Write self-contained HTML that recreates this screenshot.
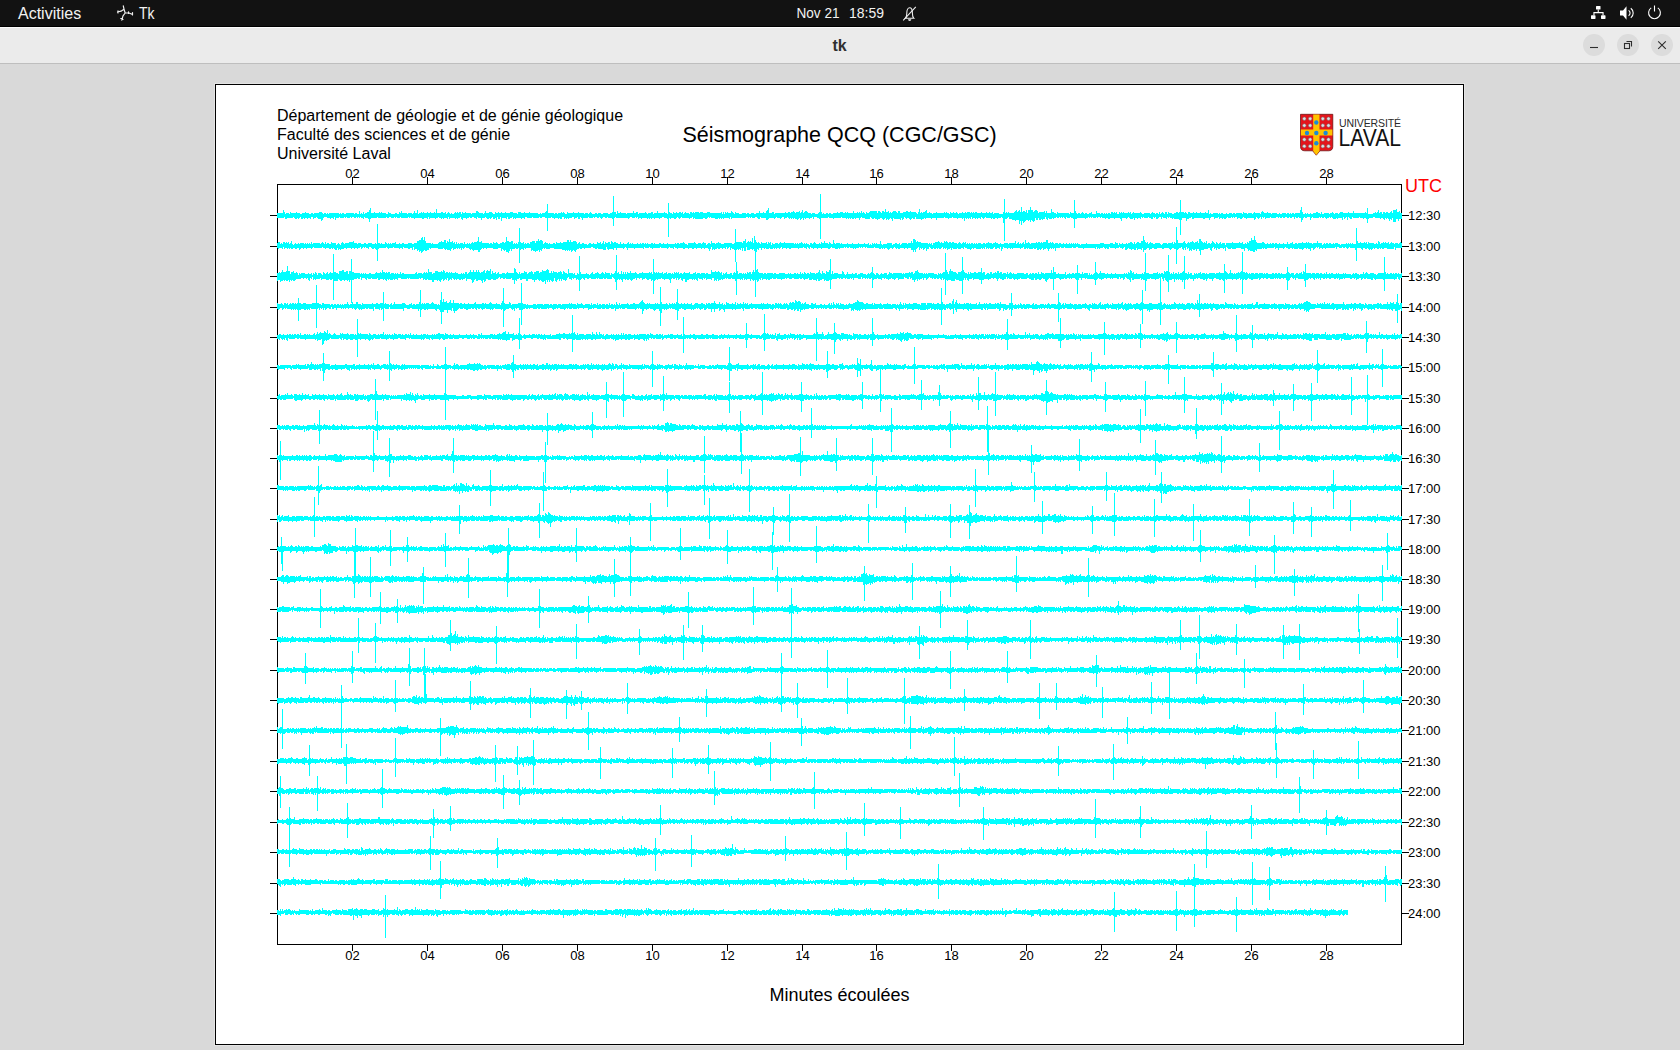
<!DOCTYPE html>
<html><head><meta charset="utf-8">
<style>
*{margin:0;padding:0;box-sizing:border-box}
html,body{width:1680px;height:1050px;overflow:hidden;background:#d9d9d9;font-family:"Liberation Sans",sans-serif}
.abs{position:absolute}
#topbar{left:0;top:0;width:1680px;height:27px;background:#121212;border-bottom:1px solid #000}
#titlebar{left:0;top:27px;width:1680px;height:37px;background:#ebebeb;border-top:1px solid #fcfcfc;border-bottom:1px solid #bebebe}
.btn{width:22px;height:22px;border-radius:50%;background:#dcdcdc}
#canvas{left:214px;top:83px;width:1251px;height:963px;border:1px solid #e4e4e4}
#canvas .in{position:absolute;left:0;top:0;width:1249px;height:961px;border:1px solid #000;background:#fff}
</style></head><body>
<div id="topbar" class="abs"></div>
<div id="titlebar" class="abs"></div>
<div class="abs btn" style="left:1583px;top:34px"></div>
<div class="abs btn" style="left:1617px;top:34px"></div>
<div class="abs btn" style="left:1651px;top:34px"></div>
<div id="canvas" class="abs"><div class="in"></div></div>
<svg class="abs" style="left:0;top:0" width="1680" height="1050" viewBox="0 0 1680 1050">
<g font-family="Liberation Sans" fill="#f2f2f2">
<text x="18" y="19" font-size="16">Activities</text>
<text x="139" y="19" font-size="16.5" textLength="15.5" lengthAdjust="spacingAndGlyphs">Tk</text>
<text x="796.5" y="18" font-size="14.5" textLength="43" lengthAdjust="spacingAndGlyphs">Nov 21</text>
<text x="849" y="18" font-size="14.5" textLength="35" lengthAdjust="spacingAndGlyphs">18:59</text>
</g>
<g stroke="#f0f0f0" stroke-width="1.2" fill="none" stroke-linecap="round" stroke-linejoin="round">
<path d="M123.3 5.8L124 9.2L121 11.2L117.5 12M118 10.8L118 13M124 9.2L125.2 13L123 15.8L121.8 20.2M120.8 18.5L123 19.5M125.2 13L128.5 12.8L132.5 14.5M132.5 12.5V15M128.5 11.8V13.5"/>
</g>
<g stroke="#eeeeee" stroke-width="1.1" fill="none">
<path d="M905.3 18.3C906.5 17.2 906.8 15.6 906.8 13.2C906.8 10 908 7.8 909.6 7.8C911.2 7.8 912.4 10 912.4 13.2C912.4 15.6 912.7 17.2 913.9 18.3Z"/>
<path d="M903.2 20.4L915.8 6.8"/>
</g>
<path d="M908 19.3h3.3a1.65 1.65 0 0 1 -3.3 0z" fill="#eee"/>
<g fill="#fff">
<rect x="1596" y="6" width="4.5" height="3.6" rx="0.6"/>
<rect x="1591" y="15.3" width="4.5" height="3.6" rx="0.6"/>
<rect x="1601" y="15.3" width="4.5" height="3.6" rx="0.6"/>
<path d="M1597.7 9.5h1.1v2.6h4.8v3.2h-1.1v-2.1h-8v2.1h-1.1v-3.2h4.3z"/>
<path d="M1620 10.5h3l3.5-4.2v13.4l-3.5-4.2h-3z"/>
</g>
<g stroke="#fff" stroke-width="1.1" fill="none">
<path d="M1628.6 10.4a3.2 3.2 0 0 1 0 5.4M1630.8 8.3a6 6 0 0 1 0 9.6"/>
<path d="M1651.2 7.9a5.9 5.9 0 1 0 6.6 0M1654.5 5.6v6"/>
</g>
<text x="839.5" y="51" font-family="Liberation Sans" font-size="16" font-weight="bold" fill="#303030" text-anchor="middle">tk</text>
<g stroke="#2e2e2e" stroke-width="1.1" fill="none">
<path d="M1590 47.5H1598"/>
<rect x="1624.5" y="43.5" width="5" height="5"/>
<path d="M1626.5 41.5H1631.5V46.5"/>
<path d="M1658.2 41.3L1665.8 48.9M1665.8 41.3L1658.2 48.9"/>
</g>

<g>
<path d="M1300.5 114.3H1332.8V146.5Q1332.8 150.8 1328.5 150.8H1320L1316.3 155.2L1312.6 150.8H1304.8Q1300.5 150.8 1300.5 146.5Z" fill="#e4141b" stroke="#5c0b0b" stroke-width="0.7"/>
<path d="M1313.2 114.6H1319.5V151L1316.3 155L1313.2 151Z M1300.9 129.4H1332.4V135.6H1300.9Z" fill="#ffc400"/>
<g fill="#1c8ad6">
<circle cx="1316.3" cy="122.5" r="2.2"/><circle cx="1307" cy="133" r="2.2"/><circle cx="1316.3" cy="133" r="2.2"/><circle cx="1325.6" cy="133" r="2.2"/><circle cx="1316.3" cy="143.3" r="2.2"/>
</g>
<g fill="#dde1e4" stroke="#7a6a6a" stroke-width="0.55">
<circle cx="1304.3" cy="118.7" r="1.75"/><circle cx="1310.2" cy="118.7" r="1.75"/><circle cx="1304.3" cy="125.5" r="1.75"/><circle cx="1310.2" cy="125.5" r="1.75"/>
<circle cx="1322.8" cy="118.7" r="1.75"/><circle cx="1328.5" cy="118.7" r="1.75"/><circle cx="1322.8" cy="125.5" r="1.75"/><circle cx="1328.5" cy="125.5" r="1.75"/>
<circle cx="1304.3" cy="139.5" r="1.75"/><circle cx="1310.2" cy="139.5" r="1.75"/><circle cx="1304.3" cy="146.2" r="1.75"/><circle cx="1310.2" cy="146.2" r="1.75"/>
<circle cx="1322.8" cy="139.5" r="1.75"/><circle cx="1328.5" cy="139.5" r="1.75"/><circle cx="1322.8" cy="146.2" r="1.75"/><circle cx="1328.5" cy="146.2" r="1.75"/>
</g>
<text x="1339" y="126.8" font-family="Liberation Sans" font-size="10.5" fill="#2a2a2a" textLength="62" lengthAdjust="spacing">UNIVERSITÉ</text>
<text x="1338.5" y="146" font-family="Liberation Sans" font-size="23.7" fill="#111" textLength="62.5" lengthAdjust="spacingAndGlyphs">LAVAL</text>
</g>

<g fill="none" stroke="#000" stroke-width="1" shape-rendering="crispEdges">
<path d="M277.5 184.5H1401.5V944.5H277.5Z"/>
<path d="M352.5 177V184M352.5 945V951M427.5 177V184M427.5 945V951M502.5 177V184M502.5 945V951M577.5 177V184M577.5 945V951M652.5 177V184M652.5 945V951M727.5 177V184M727.5 945V951M802.5 177V184M802.5 945V951M876.5 177V184M876.5 945V951M951.5 177V184M951.5 945V951M1026.5 177V184M1026.5 945V951M1101.5 177V184M1101.5 945V951M1176.5 177V184M1176.5 945V951M1251.5 177V184M1251.5 945V951M1326.5 177V184M1326.5 945V951M270 215.5H277M1402 215.5H1409M270 246.5H277M1402 246.5H1409M270 276.5H277M1402 276.5H1409M270 307.5H277M1402 307.5H1409M270 337.5H277M1402 337.5H1409M270 367.5H277M1402 367.5H1409M270 398.5H277M1402 398.5H1409M270 428.5H277M1402 428.5H1409M270 458.5H277M1402 458.5H1409M270 488.5H277M1402 488.5H1409M270 519.5H277M1402 519.5H1409M270 549.5H277M1402 549.5H1409M270 579.5H277M1402 579.5H1409M270 609.5H277M1402 609.5H1409M270 639.5H277M1402 639.5H1409M270 670.5H277M1402 670.5H1409M270 700.5H277M1402 700.5H1409M270 730.5H277M1402 730.5H1409M270 761.5H277M1402 761.5H1409M270 791.5H277M1402 791.5H1409M270 822.5H277M1402 822.5H1409M270 852.5H277M1402 852.5H1409M270 883.5H277M1402 883.5H1409M270 913.5H277M1402 913.5H1409"/>
</g>
<g font-family="Liberation Sans" font-size="13" fill="#000" text-anchor="middle">
<text x="352.5" y="178">02</text><text x="352.5" y="960">02</text>
<text x="427.5" y="178">04</text><text x="427.5" y="960">04</text>
<text x="502.5" y="178">06</text><text x="502.5" y="960">06</text>
<text x="577.5" y="178">08</text><text x="577.5" y="960">08</text>
<text x="652.5" y="178">10</text><text x="652.5" y="960">10</text>
<text x="727.5" y="178">12</text><text x="727.5" y="960">12</text>
<text x="802.5" y="178">14</text><text x="802.5" y="960">14</text>
<text x="876.5" y="178">16</text><text x="876.5" y="960">16</text>
<text x="951.5" y="178">18</text><text x="951.5" y="960">18</text>
<text x="1026.5" y="178">20</text><text x="1026.5" y="960">20</text>
<text x="1101.5" y="178">22</text><text x="1101.5" y="960">22</text>
<text x="1176.5" y="178">24</text><text x="1176.5" y="960">24</text>
<text x="1251.5" y="178">26</text><text x="1251.5" y="960">26</text>
<text x="1326.5" y="178">28</text><text x="1326.5" y="960">28</text>
</g>
<g font-family="Liberation Sans" font-size="13" fill="#000">
<text x="1408" y="220">12:30</text>
<text x="1408" y="251">13:00</text>
<text x="1408" y="281">13:30</text>
<text x="1408" y="312">14:00</text>
<text x="1408" y="342">14:30</text>
<text x="1408" y="372">15:00</text>
<text x="1408" y="403">15:30</text>
<text x="1408" y="433">16:00</text>
<text x="1408" y="463">16:30</text>
<text x="1408" y="493">17:00</text>
<text x="1408" y="524">17:30</text>
<text x="1408" y="554">18:00</text>
<text x="1408" y="584">18:30</text>
<text x="1408" y="614">19:00</text>
<text x="1408" y="644">19:30</text>
<text x="1408" y="675">20:00</text>
<text x="1408" y="705">20:30</text>
<text x="1408" y="735">21:00</text>
<text x="1408" y="766">21:30</text>
<text x="1408" y="796">22:00</text>
<text x="1408" y="827">22:30</text>
<text x="1408" y="857">23:00</text>
<text x="1408" y="888">23:30</text>
<text x="1408" y="918">24:00</text>
</g>
<text x="1405" y="192" font-family="Liberation Sans" font-size="18" fill="#f00">UTC</text>
<g font-family="Liberation Sans" font-size="16" fill="#000">
<text x="277" y="121">Département de géologie et de génie géologique</text>
<text x="277" y="140">Faculté des sciences et de génie</text>
<text x="277" y="159">Université Laval</text>
</g>
<text x="839.5" y="142" font-family="Liberation Sans" font-size="21.5" fill="#000" text-anchor="middle">Séismographe QCQ (CGC/GSC)</text>
<text x="839.5" y="1001" font-family="Liberation Sans" font-size="18" fill="#000" text-anchor="middle">Minutes écoulées</text>
<g fill="#00ffff" shape-rendering="crispEdges"><path d="M277 213h6v-3h1v2h1v2h1v-1h3v1h1v-2h1v1h5v-1h1v1h3v1h2v-1h3v-1h1v1h3v1h2v-1h2v1h1v-1h5v-1h3v1h1v1h1v-1h2v1h1v-1h1v1h1v-1h10v1h1v-1h1v1h1v-1h2v1h2v-1h8v1h1v-1h2v1h2v-3h1v3h1v-1h1v1h1v-2h1v2h1v-1h2v-1h2v1h1v-5h1v5h3v-1h1v1h4v-1h1v1h1v-1h1v1h4v1h2v-2h1v1h2v1h4v-1h2v1h2v-2h1v1h1v-2h1v2h5v1h1v-1h4v1h1v-1h1v-2h1v2h2v-3h1v4h1v-1h2v-1h1v1h1v-1h1v1h3v-1h1v1h2v-1h1v1h3v-1h1v1h1v-4h1v4h4v-1h2v1h2v-1h1v2h1v-1h1v-1h1v1h1v1h1v-1h1v1h2v-1h1v-1h1v1h1v-1h1v1h1v-1h2v2h1v-2h1v1h2v-1h1v1h5v1h1v-1h4v-2h2v1h1v1h4v1h1v-1h1v-2h1v2h3v-1h3v1h1v1h2v-2h1v1h2v-1h1v1h2v-1h1v1h3v-1h1v1h4v-1h3v1h4v1h1v-2h3v1h3v-1h1v1h4v-1h1v1h8v1h2v-1h1v1h1v-1h3v-1h1v-1h1v1h1v1h6v1h1v-1h2v1h1v-1h3v-1h1v1h1v-1h1v1h1v1h2v-2h1v1h5v-1h1v1h4v-1h1v1h5v1h1v-1h3v1h1v-1h1v-1h1v1h1v1h3v-1h2v1h1v-1h3v1h2v-1h5v1h2v-1h2v-1h4v2h1v-3h1v2h2v-1h1v1h5v1h1v-1h6v-2h1v2h2v-1h2v2h1v-1h6v-1h1v1h1v1h1v-1h3v-1h2v2h1v-1h3v-2h1v2h6v-1h1v1h2v1h1v-3h1v1h1v1h2v1h1v-2h1v1h2v-1h1v1h2v-1h2v1h1v-1h1v2h1v-1h1v-1h1v1h3v1h1v-2h2v1h1v-1h1v1h1v-1h4v1h1v-1h3v1h4v-1h3v1h11v-1h1v2h1v-2h1v2h1v-2h1v1h1v-1h1v1h3v-2h1v1h1v1h1v1h1v-2h1v1h3v1h3v-1h4v1h1v-1h2v1h2v-1h3v1h2v-1h3v-2h1v2h3v-1h1v1h2v-2h1v1h1v-4h1v5h3v-1h2v2h1v-1h10v-1h1v1h2v-1h2v1h1v-1h2v-1h1v1h1v1h1v-1h3v-1h1v2h1v-1h1v-2h1v3h1v-1h1v-1h2v1h1v1h3v1h1v-1h3v1h3v-1h1v-1h3v2h1v-1h1v1h2v-1h2v1h1v-1h2v1h2v-1h4v-1h1v1h2v-1h3v1h2v-1h1v1h1v-1h1v1h5v-2h1v2h3v-1h1v1h1v-1h1v1h1v-2h1v2h1v-1h1v1h1v1h1v-2h1v1h2v-1h1v-1h7v2h1v-2h2v1h1v1h1v-2h2v1h1v-3h1v3h2v-1h1v2h1v-1h1v1h1v-1h1v-1h3v1h1v1h1v-2h2v2h3v-1h3v-1h2v1h2v-1h1v1h5v1h1v1h1v-2h1v-3h1v4h1v-1h1v1h1v-1h2v-1h1v-1h1v3h2v-1h1v1h2v1h1v-1h3v-1h1v1h7v-1h1v1h1v-1h1v1h2v1h1v-2h1v1h2v-1h1v1h2v-1h1v1h1v1h1v-1h3v-1h1v1h2v-1h1v1h1v-1h3v1h1v-1h1v1h1v-1h1v1h1v-1h2v1h4v-1h1v1h4v-1h1v1h2v-1h1v1h2v-1h1v2h1v-1h5v1h4v-2h1v-1h1v2h1v-1h1v1h1v-1h1v1h5v-1h1v-1h1v-1h1v2h1v-1h1v-1h1v2h1v-2h1v2h1v-1h2v1h1v-2h1v3h1v-3h2v-3h1v3h2v2h1v-1h1v-1h2v1h1v2h1v-1h5v-1h1v2h1v-2h1v2h4v-4h1v3h2v1h2v1h1v-2h1v1h11v1h1v-2h1v1h4v-2h1v2h1v1h1v-1h2v1h1v-1h1v-1h1v1h1v1h1v-1h2v1h2v-1h2v-1h1v2h4v-3h1v2h3v1h1v-1h2v1h1v-1h1v1h1v-1h1v1h1v-1h2v1h1v-2h2v1h1v-1h1v1h1v-1h1v2h2v-2h1v1h1v-1h1v1h1v-1h1v1h4v-1h1v1h1v-1h1v2h1v-1h1v-1h1v1h6v-1h1v1h1v1h2v-1h6v1h1v-1h1v-1h1v1h2v1h1v-1h2v1h1v-2h1v2h1v-1h1v-1h1v1h1v1h1v-2h2v2h1v-2h1v1h3v1h2v-1h2v-1h2v1h1v-1h5v1h1v-1h1v1h1v1h1v-2h2v1h3v-1h1v1h2v-1h1v1h3v-1h1v1h4v-1h1v1h2v-3h1v4h1v-1h1v1h2v-1h5v1h1v-1h1v1h1v-1h2v1h3v-1h1v1h2v-1h3v1h1v-1h2v1h1v-1h6v1h1v-2h1v1h3v1h1v-1h4v1h1v-1h1v-1h1v1h5v1h1v-2h1v-1h1v1h1v1h3v-1h1v1h3v1h1v-1h5v1h2v-1h1v1h2v-1h4v1h1v-1h2v1h1v-1h1v1h1v-1h2v1h1v-1h5v-3h1v3h1v-1h1v2h2v-1h1v1h1v-1h1v1h2v-1h1v1h2v-1h3v-1h2v1h2v1h1v-2h1v2h2v-1h5v1h1v-1h2v-1h1v1h1v1h1v-1h3v1h1v-1h1v-1h3v1h5v-1h1v1h4v-2h1v2h11v-1h1v1h2v1h5v-1h2v-1h1v1h1v-1h1v-2h1v3h1v-1h2v2h1v-2h2v1h1v-1h2v1h2v-1h1v-1h1v2h1v-3h3v-1h1v3h2v-1h1v2h2v6h-3v2h-1v-2h-2v3h-3v-4h-1v2h-1v-1h-1v2h-1v-2h-1v-1h-1v1h-1v-1h-1v2h-1v-1h-1v-1h-2v1h-1v-1h-5v-1h-2v1h-4v1h-1v-1h-1v1h-1v-1h-2v1h-1v-1h-3v-1h-1v1h-6v-1h-1v2h-2v-1h-1v-1h-1v3h-1v-3h-1v1h-1v1h-1v-2h-1v3h-1v-2h-4v1h-1v-1h-1v1h-3v-1h-1v-1h-1v1h-1v-1h-1v1h-2v1h-1v-1h-1v-1h-1v1h-2v-1h-1v1h-1v-1h-1v1h-6v-1h-1v1h-1v2h-1v-3h-3v1h-2v-1h-1v1h-1v2h-1v-1h-1v-1h-2v-1h-1v1h-2v-1h-1v2h-1v-2h-2v1h-2v-1h-1v1h-2v-1h-2v1h-2v-1h-1v1h-2v-1h-1v1h-1v-1h-2v1h-5v-1h-1v1h-4v1h-1v-2h-1v1h-1v-1h-1v2h-1v-2h-1v1h-1v1h-1v-1h-1v-1h-1v2h-1v1h-1v-2h-7v1h-1v-1h-2v-1h-1v1h-1v1h-2v-1h-2v1h-1v-2h-2v1h-1v-1h-1v1h-1v-1h-1v1h-3v-1h-1v1h-1v1h-2v-1h-1v1h-1v-1h-2v1h-1v-2h-1v1h-3v1h-1v-2h-3v1h-1v2h-1v-2h-4v1h-2v-1h-9v1h-2v-2h-1v1h-2v1h-2v2h-1v-3h-4v2h-1v-2h-1v2h-1v-1h-5v-1h-1v1h-1v-1h-2v-1h-1v1h-1v-1h-1v2h-1v-1h-3v-1h-1v2h-1v-2h-2v1h-1v1h-2v-2h-1v1h-1v-1h-1v2h-2v-1h-2v-1h-1v1h-4v-1h-1v1h-1v-1h-1v2h-1v-1h-2v1h-1v-1h-2v2h-1v-2h-1v1h-3v-1h-1v-1h-1v1h-1v1h-1v-1h-4v3h-1v-2h-1v-1h-5v1h-1v-1h-4v1h-2v-1h-2v1h-1v-1h-3v-1h-1v1h-1v-1h-2v1h-1v-1h-1v1h-3v-1h-1v1h-1v-1h-1v1h-1v-1h-1v1h-2v1h-1v-1h-8v1h-4v-1h-2v-1h-1v1h-3v-1h-1v2h-1v-1h-1v-1h-1v1h-1v-1h-1v1h-1v-1h-1v1h-2v-1h-1v1h-2v1h-1v-1h-1v1h-3v-1h-1v2h-1v-1h-1v-2h-1v2h-2v1h-1v-1h-1v1h-2v-2h-1v2h-2v-2h-1v3h-1v1h-1v-1h-1v-1h-1v2h-1v-2h-1v1h-1v-1h-2v1h-1v1h-1v1h-1v-2h-1v-1h-1v1h-1v3h-1v-4h-3v1h-1v-1h-3v-1h-3v-2h-1v1h-1v1h-3v4h-1v-5h-1v-1h-1v1h-3v1h-1v-1h-2v1h-2v-1h-1v1h-1v-1h-5v-1h-1v1h-1v1h-1v-1h-1v-1h-1v2h-1v-1h-2v1h-1v-1h-1v1h-1v-1h-2v1h-1v-2h-1v2h-1v-1h-1v1h-1v-1h-1v1h-1v-1h-1v3h-1v-3h-1v1h-1v-1h-4v1h-1v-1h-4v-1h-1v1h-3v1h-1v-1h-3v-1h-1v1h-7v2h-1v-2h-4v1h-1v-1h-5v1h-1v-1h-1v1h-2v1h-1v-1h-5v-2h-1v2h-2v-1h-1v1h-1v1h-1v-1h-1v-1h-2v1h-1v-1h-1v-1h-1v2h-1v1h-1v-2h-1v2h-1v-1h-6v-1h-1v3h-1v-2h-1v-1h-1v1h-1v1h-1v-1h-1v1h-1v-2h-1v1h-1v1h-1v-1h-1v-1h-2v1h-2v1h-1v-1h-2v-1h-1v1h-2v-1h-1v-1h-1v2h-5v-1h-3v-1h-1v1h-1v2h-1v-2h-3v1h-1v-1h-1v1h-2v-1h-1v1h-1v-1h-1v1h-1v-1h-1v1h-1v-1h-4v-1h-1v1h-7v1h-1v-1h-4v-1h-1v1h-7v1h-2v-1h-2v-1h-3v2h-1v-2h-1v1h-2v1h-1v-1h-3v1h-1v-1h-1v2h-1v-2h-1v1h-1v1h-1v-2h-1v1h-1v1h-1v-1h-2v-1h-1v1h-1v-1h-1v1h-1v-1h-1v1h-1v-1h-1v-1h-1v1h-2v1h-1v-2h-2v1h-1v1h-1v-1h-3v-1h-1v1h-1v1h-1v-1h-5v1h-1v1h-2v-2h-5v-1h-1v2h-2v-1h-1v-1h-2v1h-3v-1h-1v1h-1v-1h-1v1h-1v-1h-2v1h-14v1h-1v-2h-1v2h-1v-1h-5v1h-1v-1h-1v1h-1v-1h-1v1h-1v-1h-1v1h-3v-1h-4v-1h-1v1h-1v-1h-1v1h-1v1h-2v-1h-2v1h-8v-1h-1v1h-1v-2h-1v1h-2v1h-1v-1h-7v-1h-1v1h-1v1h-1v-1h-1v-1h-1v1h-1v1h-2v-1h-3v1h-1v-1h-1v1h-2v-1h-3v-1h-2v1h-2v1h-1v-1h-4v1h-1v-1h-2v1h-1v-1h-1v1h-1v-1h-1v1h-1v-1h-5v1h-1v-1h-2v1h-1v-2h-1v1h-1v-1h-1v1h-3v-1h-2v1h-1v1h-1v-1h-12v-1h-1v1h-1v1h-2v-1h-4v-1h-1v1h-2v-1h-2v1h-1v1h-1v-1h-1v-1h-1v1h-2v-1h-2v1h-1v-1h-1v1h-4v-1h-1v1h-5v2h-1v-2h-1v-1h-1v2h-2v-2h-1v1h-2v1h-1v-2h-2v1h-3v1h-1v-1h-1v1h-1v-1h-1v1h-1v-2h-2v2h-2v-1h-1v1h-1v-1h-3v1h-1v-1h-2v-1h-1v1h-3v1h-1v-1h-2v-1h-3v1h-2v-1h-1v1h-6v-1h-1v1h-5v-1h-2v2h-1v-1h-2v1h-1v-1h-5v1h-1v-1h-1v1h-1v-2h-1v1h-2v1h-2v-2h-1v2h-1v-1h-4v3h-1v-4h-1v2h-2v-2h-1v3h-1v-2h-1v1h-2v-2h-1v1h-1v1h-1v-1h-1v1h-2v-1h-1v-1h-1v1h-3v2h-1v-2h-3v-1h-1v2h-1v-1h-2v-1h-2v1h-2v-1h-1v1h-2v1h-1v-1h-3v2h-1v-1h-1v-2h-1v1h-2v1h-1v-1h-1v1h-1v-1h-5v1h-1v-2h-1v2h-1v-1h-3v1h-1v-1h-1v1h-1v-1h-2v-1h-1v1h-2v1h-1v-1h-5v1h-1v-2h-1v2h-1v-1h-3v1h-2v-1h-7v1h-1v-1h-3v-1h-1v1h-1v-1h-1v1h-7v-1h-1v1h-3v-1h-1v1h-1v-1h-1v1h-3v-1h-2v1h-2v-1h-1v1h-8v-1h-1v1h-6v1h-1v-1h-1v1h-1v-1h-3v-1h-1v2h-1v-1h-2v-1h-1v1h-1v-1h-1v1h-1v-1h-1v1h-2v-1h-2v1h-1v-1h-1v1h-3v-1h-1v1h-1v-1h-1v1h-4v-1h-1v1h-3v2h-1v-3h-1v2h-1v-1h-2v1h-1v-1h-3v-1h-3v1h-1v2h-2v-1h-3v-1h-1v-1h-1v1h-2v1h-1v-2h-2v2h-1v-1h-2v1h-1v-1h-2v1h-1v-1h-1v1h-2v-2h-1v1h-1v1h-1v-1h-1v1h-2v-1h-1v-1h-1v1h-6v1h-2v-2h-1v1h-7zM277 243h1v-1h2v2h1v-1h1v1h1v-2h2v1h1v-1h1v1h1v-1h1v2h1v-1h1v-2h1v3h1v1h1v-1h1v-1h1v1h2v-1h1v1h1v-1h4v1h1v-1h1v1h1v-1h1v1h1v-1h1v1h1v-2h1v2h1v-1h7v1h1v-1h1v-1h1v1h1v1h1v-2h1v2h1v-1h2v1h2v-2h1v1h4v2h1v-1h1v-1h1v1h1v1h1v-2h1v-1h1v1h1v1h1v-1h4v-1h4v-1h1v2h3v1h1v-1h3v1h3v-1h2v1h2v-1h4v1h3v-1h1v1h1v-2h1v1h2v1h1v-1h1v1h3v-2h1v1h1v1h1v-1h1v1h1v-1h1v1h1v-1h3v-1h1v2h3v-1h1v1h2v-1h2v1h4v-1h4v1h2v-1h3v-2h2v-1h2v-2h1v-1h1v3h1v-3h1v4h1v2h5v1h1v-1h1v1h5v-1h1v-1h2v-1h1v1h2v-2h2v3h1v-2h1v1h1v-3h1v3h2v-1h1v2h1v-1h1v2h1v-2h1v2h1v-1h1v1h1v-1h3v1h1v-2h1v2h2v-1h1v1h1v-1h1v1h1v-1h1v-1h1v1h1v-1h3v-1h2v1h2v-1h1v2h7v1h1v-1h2v1h1v-2h1v1h2v-1h1v1h1v1h2v-1h2v-1h2v1h1v-1h1v-3h1v2h2v1h2v-1h2v3h1v-1h1v1h1v-1h1v1h1v-2h1v-1h1v1h1v1h2v-1h1v2h1v-1h1v1h1v-1h2v1h1v-2h2v-1h3v2h1v-2h2v-2h1v2h1v-1h2v1h1v3h1v-1h1v-1h1v1h2v1h1v-1h1v1h3v-1h2v1h1v-2h1v1h3v-1h1v1h2v-1h4v-2h2v2h1v-2h1v2h2v-1h3v1h1v2h1v-1h1v-1h1v2h2v-1h2v1h3v1h1v-1h1v-1h2v1h2v-1h1v1h3v-2h1v1h2v-1h1v2h1v-1h1v-2h1v3h1v-2h1v1h2v-1h2v2h1v-3h1v1h1v1h1v-1h2v1h2v1h2v-2h1v2h2v-1h1v1h3v-1h1v-1h1v2h1v-1h1v1h1v-1h1v1h4v-1h1v1h2v-1h1v1h1v-1h2v1h1v-1h1v1h1v-1h1v1h3v-1h2v1h1v-1h1v1h4v-1h2v1h2v-1h1v1h3v-1h1v1h7v-1h1v1h1v-1h2v1h1v-1h3v-1h1v1h1v1h2v1h1v-2h6v-1h1v1h1v1h2v-1h3v1h1v-1h1v-1h1v1h2v2h1v-1h1v-1h2v1h1v-3h1v2h3v1h1v-1h2v-1h1v1h2v1h3v-1h8v1h2v-1h1v-3h1v2h6v1h1v-2h2v-2h1v4h1v-1h1v-1h1v1h1v-1h1v1h1v-4h1v5h1v-7h1v5h1v1h1v1h1v-1h1v1h1v1h1v-2h1v1h4v-1h1v2h1v-2h1v1h1v-1h1v3h1v-2h1v1h2v-1h3v1h1v-1h1v-1h1v1h3v-1h1v1h9v1h1v-1h1v1h1v-1h1v1h1v-1h2v-1h1v1h1v1h1v-1h1v1h1v-1h1v1h2v1h1v-2h2v1h1v-1h1v-1h1v1h1v1h3v-1h1v1h1v-2h1v1h2v-2h1v2h3v1h1v-2h1v1h1v1h2v-4h1v3h1v1h1v-1h4v1h1v-1h1v1h5v-1h1v1h4v-1h1v1h5v-1h1v1h5v-1h1v1h3v-1h1v2h1v-1h1v1h1v-2h1v1h1v-1h1v1h1v-1h1v1h3v-3h1v3h1v1h1v-1h4v-1h5v2h1v-1h2v-1h2v1h2v-1h1v2h1v-1h1v-1h5v1h1v-1h3v-2h1v2h1v-2h1v-2h1v1h1v2h1v-1h1v1h3v1h7v1h1v-1h1v1h1v-1h1v2h1v-2h2v-1h3v-1h1v1h1v1h1v-1h1v1h2v-2h1v1h1v-1h1v1h1v1h1v-1h2v1h1v-1h2v1h3v1h1v-1h1v-1h1v1h1v1h1v-1h1v-1h1v1h1v-1h1v2h1v-1h1v1h1v-1h1v1h1v-1h2v1h1v-1h1v1h1v-1h1v1h1v-1h3v1h2v-1h2v1h1v-1h2v-1h1v1h3v1h1v-1h2v-1h1v1h2v1h2v-1h1v1h3v-1h4v1h1v-1h6v-2h1v3h1v-1h1v-1h1v2h1v-1h1v1h1v-1h1v-1h1v2h1v-4h1v3h2v-1h1v1h1v1h1v-1h5v-1h1v1h1v-1h2v1h1v-1h1v1h1v-1h3v-2h2v3h2v-1h1v1h1v-1h1v1h1v1h1v-1h3v1h1v-1h2v1h2v-1h1v1h2v-1h1v1h2v-1h1v1h1v-1h1v1h1v-1h1v1h1v-1h1v1h1v-1h1v1h2v1h1v-1h5v-1h1v1h13v-1h4v1h6v-1h3v1h2v-2h1v1h2v2h1v-2h1v1h2v-1h1v1h3v-1h1v1h1v-1h2v-1h2v1h1v1h1v-2h1v2h1v-1h1v-1h2v1h2v-2h2v1h1v-2h1v2h1v1h1v-1h1v2h1v-1h1v-1h1v1h2v1h2v-1h5v1h1v1h1v-1h1v-1h4v1h1v-1h4v-1h1v2h1v-2h1v1h1v-1h1v-2h1v3h5v-1h1v-1h1v2h1v1h1v-1h1v-1h1v1h1v-1h2v-1h1v1h1v1h1v-1h2v-1h1v2h1v-4h1v1h1v1h1v1h1v1h1v-1h1v1h1v-2h1v3h1v-1h2v1h1v-1h1v-2h1v1h1v1h1v1h1v-2h1v1h1v1h1v-1h1v-1h1v2h1v-1h3v2h1v-2h6v-1h1v1h6v-1h1v1h2v-1h1v2h2v-1h1v1h1v-2h1v1h1v-2h2v-3h1v2h2v1h1v-1h1v2h1v1h5v-1h2v1h1v1h2v-1h1v1h2v-1h1v1h1v-1h2v1h1v-1h2v1h2v-1h1v1h3v-1h1v1h3v-2h1v2h2v-1h2v-1h1v2h2v-1h2v1h1v-1h4v-1h1v1h3v-1h1v1h1v-1h1v1h3v1h1v-1h4v-2h1v2h4v2h1v-1h1v-1h1v1h1v-1h2v1h1v-1h2v1h2v-1h1v1h1v-1h3v1h2v1h1v-1h5v-1h1v1h1v-1h1v1h1v-1h1v1h1v-1h1v1h3v-2h1v-1h1v2h2v-1h1v1h3v-1h1v1h1v-1h1v2h1v-2h1v1h5v1h2v-1h1v1h1v-3h1v1h1v2h1v-1h2v-1h1v1h1v-1h1v1h2v-1h1v2h1v-1h1v-1h1v1h2v1h1v-1h3v1h1v-1h1v-1h1v1h1v5h-6v2h-1v-3h-1v2h-7v-1h-3v1h-2v-1h-1v1h-1v-1h-1v1h-2v-1h-2v1h-1v-1h-1v1h-1v1h-1v-1h-1v1h-1v-1h-1v-1h-1v1h-2v-1h-2v2h-1v-1h-1v-1h-4v1h-1v1h-1v-2h-5v-1h-1v1h-1v1h-1v-1h-1v-1h-1v1h-2v-1h-1v1h-3v-1h-2v2h-1v-2h-1v1h-9v1h-1v-1h-2v1h-1v-1h-2v1h-1v-2h-1v1h-1v-1h-1v1h-1v1h-1v1h-1v-2h-2v3h-1v-2h-2v-1h-1v1h-1v-1h-2v1h-1v1h-1v-1h-3v-1h-1v1h-4v-1h-1v1h-1v-1h-2v1h-2v-1h-2v-1h-1v1h-1v1h-1v-1h-4v2h-1v-2h-2v1h-1v-2h-1v1h-7v1h-2v-1h-1v1h-1v-1h-1v1h-5v2h-1v-1h-1v2h-2v-1h-3v-1h-1v1h-1v-2h-1v-1h-2v3h-1v-2h-3v-1h-5v1h-4v-1h-1v1h-3v-1h-1v-1h-1v4h-1v-3h-1v1h-1v-1h-3v1h-2v-1h-1v2h-1v-2h-1v1h-1v-2h-1v1h-1v3h-1v-1h-1v-2h-2v1h-4v1h-3v1h-2v-2h-2v2h-1v-2h-1v1h-2v-1h-1v2h-1v-1h-1v1h-1v-3h-1v1h-1v-2h-1v3h-1v-2h-1v2h-1v-1h-1v-2h-1v1h-2v1h-1v1h-1v-1h-3v-1h-2v1h-1v1h-1v-1h-1v-1h-5v1h-2v-1h-5v1h-3v-1h-2v1h-2v1h-1v-2h-2v1h-1v1h-3v-2h-1v2h-1v-1h-3v1h-1v-2h-1v2h-2v-1h-2v1h-1v-1h-2v-1h-1v1h-1v1h-2v-3h-1v1h-1v1h-1v-1h-2v-1h-1v1h-3v1h-1v-1h-5v-1h-1v2h-2v-1h-1v1h-1v-1h-1v-1h-1v1h-3v1h-1v-1h-1v1h-1v-2h-1v2h-1v-1h-11v1h-1v-1h-5v-1h-2v1h-3v-1h-1v1h-7v-1h-1v1h-3v-1h-1v1h-4v3h-1v-3h-1v1h-1v-1h-1v1h-1v-1h-1v1h-1v2h-1v-2h-1v-1h-1v1h-2v1h-1v-2h-1v1h-1v1h-1v-1h-1v1h-2v-2h-1v1h-2v-1h-1v1h-4v-1h-1v1h-1v-1h-1v1h-2v-2h-1v1h-2v1h-1v-1h-7v1h-1v-1h-1v1h-1v-1h-2v1h-1v-1h-3v-1h-1v2h-1v2h-1v-4h-1v2h-1v-1h-2v1h-2v-2h-1v1h-1v1h-3v-1h-1v1h-1v-1h-1v1h-1v-2h-1v2h-1v-1h-1v1h-1v-1h-1v1h-5v-1h-2v1h-1v-1h-1v1h-1v1h-1v-1h-3v-1h-2v-1h-1v2h-1v-1h-2v1h-3v-1h-1v1h-4v-1h-1v2h-1v-2h-1v1h-2v1h-1v-2h-1v1h-1v-1h-1v1h-1v-2h-1v1h-1v1h-2v-1h-1v1h-1v-1h-1v1h-2v-1h-1v1h-2v-1h-1v-1h-1v2h-2v2h-1v-3h-1v1h-1v1h-1v-2h-1v1h-1v-1h-1v2h-1v-3h-1v1h-1v1h-1v3h-1v-2h-1v2h-1v-2h-2v-2h-3v1h-1v-1h-2v1h-1v-1h-4v1h-2v-1h-1v1h-1v-1h-1v-1h-1v1h-1v1h-1v-1h-2v1h-1v1h-1v-1h-1v-1h-2v1h-1v-1h-1v1h-1v-1h-1v1h-2v-1h-4v-1h-1v1h-7v-1h-1v1h-1v-1h-2v1h-1v-1h-1v1h-1v-1h-1v1h-3v1h-1v-1h-1v1h-1v-1h-3v-1h-1v1h-2v-1h-1v1h-1v-1h-1v1h-4v1h-1v-1h-1v1h-3v-1h-3v-1h-1v1h-1v1h-2v-1h-6v1h-1v-1h-3v1h-1v-1h-3v1h-1v-1h-2v-1h-1v2h-1v-1h-1v-1h-1v2h-1v-1h-2v-1h-1v1h-4v1h-1v-1h-7v1h-2v-1h-2v1h-1v-1h-3v1h-1v-2h-1v1h-1v1h-1v-1h-2v1h-1v-1h-1v1h-1v-1h-1v1h-3v-1h-1v1h-3v-1h-1v1h-1v-1h-2v2h-1v-2h-2v2h-1v-1h-1v3h-1v-1h-2v-2h-1v1h-1v-1h-2v1h-3v-3h-1v4h-2v-3h-1v3h-1v-3h-1v2h-1v-1h-1v1h-1v-1h-1v1h-3v-1h-2v-1h-1v2h-1v-3h-1v1h-1v1h-1v-2h-1v2h-1v-1h-2v1h-1v-1h-2v1h-2v-1h-1v1h-2v1h-1v-1h-1v1h-1v-3h-1v2h-1v2h-1v-2h-1v-1h-3v1h-1v-1h-2v1h-1v-1h-4v1h-1v-1h-2v1h-2v-1h-3v1h-1v-1h-3v1h-2v-1h-5v1h-1v-1h-2v-1h-1v2h-1v-1h-3v-1h-1v1h-1v1h-1v-1h-6v-1h-1v1h-7v1h-1v-1h-2v-1h-1v1h-4v-1h-1v2h-1v-1h-8v1h-1v-1h-6v2h-1v-2h-1v-1h-1v1h-1v1h-1v-1h-6v2h-1v-2h-2v2h-1v-1h-4v1h-1v-1h-1v-2h-1v3h-3v-1h-5v-1h-1v1h-2v-1h-2v-1h-2v1h-6v1h-1v-1h-2v1h-2v-1h-1v1h-2v1h-1v2h-1v-1h-1v-1h-1v1h-1v1h-1v-2h-1v1h-1v-1h-1v1h-1v-1h-1v1h-1v-1h-3v-1h-8v-1h-4v1h-4v-1h-1v1h-1v-1h-1v1h-1v2h-1v-1h-1v2h-1v-2h-1v1h-2v1h-1v-1h-2v-1h-1v1h-1v-3h-5v1h-1v-1h-1v2h-1v-1h-2v1h-1v-2h-2v1h-2v-1h-1v1h-3v2h-1v-2h-1v2h-1v2h-1v-1h-1v-2h-2v1h-1v-1h-1v-1h-1v2h-1v-3h-3v1h-5v-1h-6v1h-1v-1h-2v1h-1v-1h-1v1h-1v1h-1v2h-1v-1h-1v-1h-4v1h-1v-1h-1v-1h-1v1h-1v-1h-1v-1h-3v-1h-1v1h-1v1h-1v-1h-1v2h-1v-2h-1v1h-1v-1h-1v1h-1v-1h-1v1h-2v1h-1v-2h-1v1h-1v2h-1v-1h-3v-1h-1v1h-1v-1h-1v-1h-1v1h-5v-1h-7v1h-1v-1h-1v2h-2v1h-2v-1h-1v1h-1v1h-1v1h-1v-2h-1v1h-1v-2h-1v1h-1v-2h-2v1h-1v-3h-1v3h-1v-2h-2v1h-2v-1h-4v-1h-1v2h-1v-1h-2v1h-1v-1h-5v-1h-1v1h-4v1h-1v-1h-1v-1h-1v1h-7v1h-2v1h-1v-1h-1v-1h-1v1h-2v-1h-1v-1h-2v2h-1v-1h-2v-1h-1v1h-1v-1h-1v1h-1v1h-1v-2h-1v1h-2v1h-1v-1h-2v1h-1v-1h-2v1h-1v-1h-4v1h-1v-1h-2v1h-3v1h-1v-1h-1v1h-1v-2h-1v2h-2v-1h-1v-1h-1v1h-1v-1h-1v1h-2v-1h-3v1h-1v-1h-2v-1h-1v1h-8v-1h-1v1h-1v1h-1v-1h-4v1h-1v-1h-2v1h-1v-1h-2v1h-1v1h-1v-2h-2v1h-2v-1h-2v1h-2v-1h-1v1h-1v-1h-1v1h-1v-1h-2v1h-1v-2h-1v2h-1v-1h-3v1h-1v-1h-1zM277 273h2v-1h1v1h1v-1h1v-2h1v2h3v-1h1v1h1v-1h2v3h1v-2h2v-1h1v2h2v-1h1v1h1v2h1v-2h1v1h1v-1h4v1h3v-1h1v1h2v-1h1v2h1v-2h1v1h1v-2h1v1h1v2h1v-2h3v1h1v1h1v-3h1v1h1v1h1v-1h1v-1h1v2h1v-1h1v-1h1v1h2v-2h1v1h2v1h2v1h1v-3h3v-1h2v2h2v-1h2v3h1v-3h3v1h2v1h6v1h1v-1h1v1h1v-1h1v1h1v-1h1v1h3v-1h2v1h4v-1h1v-1h1v1h3v-1h1v1h1v-3h1v2h2v1h1v-1h1v1h1v-1h2v2h1v-1h3v1h1v-1h1v1h1v-1h1v1h2v-2h1v2h1v-1h2v1h11v-1h1v-1h1v2h1v-1h4v1h1v-1h1v-1h1v1h1v-1h1v1h1v-4h1v3h3v2h1v-1h2v-2h3v1h3v-1h1v1h1v-2h1v1h1v2h1v-1h2v1h1v-1h1v1h1v-1h1v1h3v-1h1v1h2v1h3v-1h1v1h1v-1h1v1h1v-2h2v2h1v-1h1v-1h1v-2h1v2h2v-2h1v2h2v-2h1v2h1v-2h1v2h1v1h1v-1h2v-1h1v-1h1v3h1v-2h1v-1h1v1h2v-2h1v5h1v-3h1v2h2v-1h1v2h1v-1h1v-1h1v2h3v-1h3v1h1v-1h1v-1h1v1h6v-1h1v-3h1v3h1v1h1v1h1v-2h1v2h1v-1h3v-2h1v1h2v2h1v-1h1v-1h2v-1h1v1h1v2h1v-2h2v-1h3v2h1v-1h2v-2h1v1h3v-1h1v-1h1v1h1v3h2v-2h1v2h1v-2h1v1h3v1h1v-1h2v-1h1v1h1v2h1v-3h1v1h1v1h2v1h1v-5h1v4h4v1h1v-1h1v2h2v-2h1v1h1v-2h2v2h5v-1h1v1h2v1h1v-1h1v-1h1v-1h1v2h2v-1h2v-1h1v1h1v1h2v-1h1v-1h1v1h1v1h1v-2h1v1h4v2h1v-2h1v1h2v-1h1v-2h1v2h2v-1h1v2h2v-3h1v3h1v-2h1v2h1v-2h1v2h1v-2h1v1h2v-2h1v2h4v-1h1v1h1v1h2v-1h3v-1h1v1h6v-1h1v1h1v-1h1v2h1v-3h1v1h1v1h1v-1h1v1h1v-1h1v1h3v-1h1v2h1v-1h2v-1h1v2h1v-1h3v1h1v-1h1v1h1v-2h1v1h1v-1h1v1h1v-1h1v2h1v-1h2v1h1v-1h1v-1h1v1h4v-1h1v2h3v-1h2v-1h1v2h1v-1h3v1h1v-1h4v1h1v-1h2v1h3v-4h1v2h3v-1h1v1h2v-1h1v1h1v1h1v-1h1v3h1v-2h1v1h1v-1h1v-1h1v2h3v-1h2v2h1v-2h1v-1h1v1h1v-1h1v-1h1v3h1v-1h3v1h1v-1h1v1h1v-1h1v1h1v-2h1v1h1v-1h2v2h1v-2h1v-2h1v2h1v1h1v-3h1v-1h1v3h1v1h4v1h1v-1h2v1h1v-1h6v1h1v-1h2v1h3v-1h6v1h3v-1h1v1h1v-1h1v1h3v-1h2v1h1v-1h1v1h2v-2h1v2h1v-1h1v1h1v-2h1v1h1v1h1v-1h2v1h1v-2h1v1h4v1h1v-1h2v-1h1v-2h1v3h1v1h1v-3h1v2h2v1h1v-3h1v1h2v-2h1v2h1v2h1v-3h1v3h1v-1h4v1h4v-3h1v1h1v2h1v1h1v-1h1v-2h1v2h4v-1h1v1h2v-1h2v2h1v-1h2v-1h3v1h3v1h1v-1h1v-1h1v1h1v-1h1v-1h2v1h1v1h1v1h1v-2h2v1h1v1h1v-1h1v-1h1v1h2v-1h3v2h1v-1h1v-2h1v1h2v1h1v-1h9v1h1v-1h1v1h1v-1h4v-1h1v1h1v-1h2v2h1v-1h1v-2h3v1h1v1h4v1h1v-1h1v1h1v-1h1v1h1v-1h6v1h3v1h1v-2h1v1h1v-1h1v1h1v-1h1v-1h2v-2h2v2h1v2h1v-3h1v-2h1v2h2v1h3v1h1v1h1v-2h3v-1h1v1h1v-2h1v2h1v1h2v1h1v-2h1v2h1v-2h1v1h3v-1h2v1h2v-1h3v1h2v-1h2v3h1v-1h1v-1h2v1h1v-2h2v2h1v-1h2v-1h1v1h1v-2h2v2h1v-1h2v2h1v-1h3v1h1v-2h1v2h1v-1h1v-1h1v1h1v1h1v-1h1v1h3v-1h7v1h2v-1h2v2h1v-1h1v-1h1v1h1v-1h2v1h1v-1h2v1h1v-2h1v2h2v-2h1v1h2v1h1v-1h6v-3h1v3h1v-1h3v2h2v-1h1v1h6v-2h1v3h1v-1h2v-1h1v1h2v-1h2v1h1v-1h5v1h2v-2h1v2h1v-1h4v2h1v-2h1v2h1v-1h1v1h1v-1h1v-1h1v-1h2v1h1v1h1v-1h1v-2h1v2h4v1h2v-1h1v1h3v-1h1v1h3v-1h1v1h8v-1h1v1h1v-1h1v1h1v-2h1v1h1v-1h1v-1h1v2h1v-1h1v2h2v-1h1v1h5v-1h1v1h1v-2h1v-1h1v2h3v1h4v-1h4v-1h1v2h1v-1h1v1h1v-1h2v1h1v-3h1v1h1v-1h2v-6h1v7h1v2h1v-1h1v1h1v-2h1v2h1v-1h2v1h1v-2h1v2h1v-1h2v-1h1v-1h1v2h3v1h1v-2h1v2h1v-1h2v2h2v-2h1v1h1v-1h1v1h1v-1h2v-1h1v2h1v-1h3v1h1v-1h1v1h2v-1h6v1h1v-1h3v-1h1v1h5v-2h1v1h1v1h1v1h1v-1h1v-3h1v3h2v1h1v-1h1v1h1v-1h2v-1h1v1h1v-1h1v-1h1v1h3v1h1v-1h1v1h1v1h1v-1h1v1h1v-1h3v1h1v-1h3v1h1v-1h4v1h1v-1h1v1h1v-1h2v1h4v-1h2v1h1v-1h2v1h1v-1h2v1h1v-1h1v1h4v-1h2v-1h1v1h1v1h1v-1h3v2h1v-1h1v-1h2v1h1v-1h2v-1h1v2h1v-3h1v1h1v-1h1v2h5v1h1v-1h3v1h1v-1h3v1h1v-1h2v1h2v-1h1v1h1v-2h1v2h2v-1h1v1h1v-1h2v1h3v-1h1v1h1v-1h1v1h4v-1h1v1h1v-1h1v1h5v1h1v-1h1v-1h1v1h1v-1h2v1h2v1h1v-1h3v-2h1v2h1v-1h1v-1h1v1h1v1h2v-1h4v1h2v1h1v-1h1v-1h6v-1h2v2h1v-1h1v1h2v-1h2v1h1v-1h1v1h1v-1h2v1h1v-1h1v1h2v-1h1v5h-2v2h-1v-1h-1v-2h-1v2h-2v1h-1v-1h-10v1h-1v-1h-7v1h-1v-1h-1v-1h-1v2h-2v-1h-4v-1h-1v1h-2v-1h-1v1h-1v1h-1v-2h-2v1h-2v1h-1v-2h-1v1h-1v-1h-2v1h-2v-1h-5v1h-1v-1h-1v1h-3v1h-1v-2h-1v1h-1v-1h-1v1h-2v-1h-3v1h-2v-1h-2v1h-1v-1h-1v1h-2v-1h-2v2h-1v-2h-1v1h-1v-1h-1v1h-1v-1h-1v2h-1v-1h-1v-1h-2v1h-1v-1h-1v1h-1v1h-2v3h-1v-2h-1v-2h-6v-1h-2v2h-1v-2h-1v1h-1v-1h-1v-1h-1v1h-1v2h-1v1h-1v-2h-1v1h-1v-2h-2v1h-1v-1h-2v1h-2v-1h-1v1h-1v-1h-1v1h-1v-1h-1v1h-4v-1h-2v1h-2v-1h-2v1h-1v-1h-2v1h-1v1h-1v-2h-1v1h-5v1h-2v-1h-2v-1h-1v1h-1v1h-2v-1h-1v1h-2v-1h-1v1h-1v-2h-1v1h-2v1h-1v-1h-3v1h-1v-1h-5v1h-1v-1h-1v1h-1v1h-1v-1h-1v-1h-1v1h-2v-1h-3v-1h-2v1h-1v2h-1v-2h-3v-1h-1v1h-1v2h-1v-2h-1v1h-2v-1h-3v-1h-2v1h-1v-1h-1v1h-2v2h-1v-2h-3v-1h-1v1h-1v1h-1v-1h-1v1h-1v2h-1v-2h-1v2h-1v-2h-2v-1h-1v1h-1v-1h-1v1h-1v-1h-1v3h-1v-3h-2v1h-3v2h-2v-1h-1v-1h-1v-2h-1v3h-1v-2h-1v-2h-1v3h-1v-2h-1v1h-3v1h-1v-1h-4v-1h-1v1h-3v2h-1v-1h-3v-1h-1v1h-1v-2h-1v1h-6v1h-2v-2h-1v2h-2v-1h-2v-1h-1v-1h-1v2h-1v1h-1v-2h-2v1h-1v-2h-1v2h-2v-1h-4v1h-1v-1h-1v1h-1v-1h-3v1h-1v-1h-2v1h-2v1h-1v-1h-2v-1h-1v1h-1v1h-3v-1h-7v-1h-1v1h-1v-1h-3v2h-1v-2h-2v2h-1v-1h-1v1h-1v-1h-1v-1h-3v1h-1v-1h-1v1h-1v-1h-2v1h-2v-1h-1v1h-3v1h-1v-1h-1v-1h-3v1h-2v1h-1v-1h-3v-1h-1v1h-1v1h-1v2h-1v-1h-1v-2h-2v-1h-1v1h-1v1h-2v-1h-2v1h-2v-2h-1v2h-3v-1h-2v-1h-2v1h-6v-1h-1v1h-2v1h-1v-1h-2v1h-1v-1h-1v-1h-1v1h-3v-1h-1v1h-1v-2h-1v2h-2v1h-2v-1h-2v-1h-1v1h-1v2h-1v-2h-1v-1h-2v1h-1v-1h-2v1h-2v1h-1v-1h-4v1h-2v-1h-1v1h-2v-1h-5v1h-1v-2h-1v1h-3v2h-1v-1h-1v-2h-1v2h-1v-2h-1v2h-2v1h-3v-1h-3v-1h-1v2h-4v-1h-3v1h-1v-1h-1v1h-1v-2h-1v1h-1v-2h-1v2h-1v-1h-1v-1h-1v1h-2v-1h-1v1h-2v-1h-1v1h-1v-1h-2v-1h-1v1h-1v1h-1v1h-1v-2h-2v2h-1v-2h-1v1h-2v1h-1v-1h-1v2h-1v-2h-1v1h-1v2h-1v-2h-2v-2h-1v1h-1v-2h-1v2h-2v-1h-2v-1h-1v2h-5v1h-1v-2h-2v1h-1v1h-1v-1h-2v-1h-1v1h-2v1h-1v-1h-2v-1h-1v1h-1v-1h-2v2h-1v-1h-3v-1h-1v1h-3v1h-1v-1h-1v-1h-1v1h-2v-1h-1v1h-1v-1h-1v1h-1v-1h-2v1h-1v-2h-1v2h-3v-1h-4v2h-1v-2h-1v1h-1v-1h-1v1h-3v-1h-1v1h-1v-1h-2v1h-2v-1h-1v1h-1v-1h-2v1h-5v1h-3v1h-3v-1h-1v1h-1v-2h-2v1h-2v1h-2v-2h-1v2h-1v-1h-3v-1h-1v1h-3v-2h-1v1h-3v1h-1v-1h-1v-1h-1v1h-2v-1h-1v1h-5v-1h-2v1h-3v-1h-2v1h-1v-1h-1v1h-3v1h-1v-1h-4v-1h-1v1h-3v-1h-1v1h-2v1h-2v-1h-1v1h-1v-1h-3v1h-1v-2h-1v2h-1v-1h-1v2h-1v1h-1v-2h-1v1h-1v-1h-1v1h-1v-1h-1v-1h-1v2h-1v-2h-3v1h-1v-1h-1v1h-1v-2h-1v2h-1v-1h-1v1h-1v-1h-3v1h-1v1h-1v-2h-3v-1h-1v1h-3v-1h-1v1h-1v-1h-1v1h-2v1h-1v-1h-1v1h-2v1h-1v-2h-1v2h-1v-1h-1v1h-1v-3h-2v2h-1v-1h-4v1h-1v-2h-1v1h-1v-1h-1v2h-1v-1h-3v-1h-1v3h-1v-1h-1v-1h-1v1h-1v-1h-1v1h-1v-1h-3v1h-2v2h-2v-3h-2v2h-1v-1h-1v-2h-1v1h-1v1h-1v-2h-1v2h-1v-2h-1v1h-2v-1h-1v1h-1v4h-1v-3h-1v-1h-4v1h-1v-1h-2v-1h-1v1h-3v1h-1v-1h-1v1h-1v1h-1v-1h-2v1h-1v-2h-2v1h-2v-1h-1v-1h-1v1h-2v1h-1v-2h-2v1h-1v-1h-2v2h-1v-2h-1v1h-2v1h-1v1h-1v-1h-1v-1h-1v1h-2v-1h-1v1h-1v-1h-2v3h-1v-2h-1v-1h-1v1h-1v-1h-1v1h-1v1h-1v1h-1v-3h-1v-1h-1v-1h-1v2h-5v-1h-1v1h-2v-1h-1v1h-4v-1h-1v1h-1v-1h-1v1h-5v-1h-2v1h-2v-1h-2v2h-1v-1h-1v-1h-1v1h-1v1h-1v-1h-1v1h-1v-1h-1v1h-1v-2h-2v1h-1v-1h-1v2h-1v-1h-2v-2h-1v1h-1v2h-1v1h-1v-1h-2v-1h-1v2h-1v-2h-1v2h-1v-2h-1v1h-1v2h-1v-1h-1v-3h-1v3h-1v1h-1v-1h-1v-1h-1v2h-1v-2h-1v2h-1v-2h-1v4h-1v-3h-1v1h-2v-1h-1v-1h-1v1h-1v-1h-1v-1h-1v1h-2v2h-1v-2h-2v-1h-4v2h-2v-2h-4v1h-2v-2h-1v1h-2v2h-1v-1h-4v-2h-1v1h-5v-1h-1v1h-2v-1h-2v1h-1v-2h-1v1h-1v1h-2v1h-3v-1h-2v1h-3v-1h-2v2h-1v1h-1v-2h-1v3h-1v-2h-1v-1h-3v1h-2v-2h-1v1h-1v2h-1v1h-1v-3h-1v-1h-4v2h-1v-3h-1v1h-2v1h-1v-1h-1v1h-2v-1h-2v1h-1v-1h-1v1h-1v-1h-1v-1h-1v2h-1v-1h-1v1h-1v1h-1v-3h-1v2h-1v-1h-1v1h-1v1h-1v-2h-1v1h-1v2h-1v-1h-1v-1h-1v1h-1v-1h-3v2h-2v-2h-4v-1h-1v1h-2v-1h-1v1h-1v-2h-2v1h-1v-1h-1v1h-9v-1h-1v1h-1v-1h-1v1h-6v-1h-3v2h-1v-1h-2v1h-1v-1h-1v1h-3v-1h-1v1h-1v-1h-1v2h-1v-1h-1v-1h-1v1h-1v-1h-3v1h-2v-2h-1v1h-5v-1h-1v1h-3v-1h-1v2h-1v-1h-1v-1h-3v2h-1v-3h-1v2h-2v-1h-1v1h-3v1h-2v1h-1v-1h-1v2h-1v-2h-1v1h-1v-1h-2v1h-1v-1h-2v1h-2v-1h-1v-1h-1v2h-5v-2h-1v1h-2v-1h-1v1h-3v-1h-4v1h-1v-2h-1v1h-4v1h-1v-1h-1v1h-1v-3h-1v2h-1v-1h-1v3h-1v-1h-1v-2h-1v1h-1v-1h-2v1h-1v-1h-2v1h-5v1h-1v1h-2v-1h-1v1h-1v-1h-1v2h-1v-2h-1v1h-2v-1h-1v1h-1v-1h-1v1h-2v1h-1v-2h-2v1h-1zM277 303h1v1h3v-1h1v1h1v1h1v-2h2v1h1v-1h1v2h1v-1h1v-1h1v1h1v-1h2v1h1v-1h1v1h1v-1h4v1h2v-1h3v1h6v-1h7v1h2v1h1v-2h2v1h6v1h1v-1h2v1h1v-1h2v1h1v-1h2v1h1v-1h1v1h1v-1h1v1h1v-1h3v-2h1v2h1v1h1v-1h2v-2h1v2h3v-2h2v2h3v1h1v-2h1v1h9v-1h1v1h3v-1h2v1h2v-1h4v1h1v-1h1v1h3v1h1v-1h1v-1h1v2h1v-1h1v-2h1v2h7v-1h3v1h1v1h3v-1h2v-1h1v2h1v-1h2v1h1v-1h3v-2h2v2h1v-1h1v1h1v-1h1v1h1v-1h3v1h2v-1h1v-1h1v1h1v1h3v1h1v-1h1v1h1v-5h1v3h1v-1h1v-3h1v3h2v-1h1v2h2v-1h1v-2h1v3h2v-3h1v3h5v1h1v-1h2v1h2v-1h1v1h3v-1h1v1h5v-1h1v-1h1v2h6v-1h2v1h1v-1h1v1h3v-1h1v-1h1v1h1v1h4v-1h1v1h3v1h1v-2h1v-2h1v2h2v1h4v-2h1v1h1v2h1v-1h6v-1h3v1h1v-1h1v1h3v1h1v-1h1v1h5v-1h3v1h1v-1h6v1h1v-1h5v1h1v-1h2v1h1v-1h4v1h1v-1h3v1h1v-1h7v-1h1v1h1v-1h1v1h4v1h1v-2h1v1h3v-1h1v1h1v1h2v-1h5v1h1v-2h1v2h1v-1h3v1h1v-2h1v2h1v-1h2v1h1v-1h3v1h1v-1h2v1h1v-2h1v2h1v-1h2v1h1v-1h1v1h1v-3h1v2h1v1h1v-2h1v2h1v-1h6v-1h1v1h1v1h1v-1h3v-1h2v1h4v-1h1v-1h1v-1h1v1h2v1h1v1h2v-1h1v1h1v-1h1v1h5v-1h1v1h1v-1h1v1h2v-1h1v-1h1v2h4v-1h1v1h1v1h1v-2h1v1h2v-1h1v1h1v-1h1v1h1v-2h1v1h2v1h2v-1h1v1h2v-1h1v1h2v-1h1v1h3v-1h1v2h2v-1h1v-1h3v1h3v-1h2v1h2v1h1v-2h1v1h1v-1h2v1h1v-1h3v-2h1v2h1v1h3v-2h1v2h2v-1h1v2h1v-1h1v1h1v-3h1v1h2v1h3v-1h1v1h2v-2h1v3h1v-2h1v1h2v-1h1v1h2v-2h1v2h1v-1h1v1h1v-1h1v2h1v-1h2v-1h1v1h9v-1h1v1h1v-1h1v1h3v-1h1v1h3v1h1v-1h2v1h1v-2h2v1h1v-1h1v1h1v-1h1v1h1v1h1v-1h1v-1h1v1h1v-1h1v1h1v1h1v-2h1v-1h1v1h1v-1h2v1h1v-3h1v1h1v1h2v-1h1v1h1v2h1v-1h1v1h1v-1h1v-1h1v2h3v1h2v-2h2v1h2v-1h1v2h4v-1h2v1h2v-1h1v1h3v-1h1v-1h1v2h1v-2h1v2h1v-3h1v2h1v1h1v-2h1v1h1v-1h1v2h1v-2h1v1h3v1h2v-1h1v1h1v-1h1v-1h1v1h3v-1h2v-1h2v-1h2v1h4v1h1v1h2v-1h2v1h4v-1h1v2h1v-2h1v1h5v-1h1v1h1v1h1v-1h4v-1h1v1h3v1h1v-1h4v1h1v-1h1v1h1v-1h1v-2h1v2h1v1h1v-2h1v2h1v-2h1v1h3v-1h1v1h3v-1h4v1h3v1h1v-2h5v2h1v-2h5v1h1v-1h1v1h3v-1h2v1h2v-2h2v2h2v1h1v-1h3v-1h2v1h1v-3h1v-2h1v5h1v-2h1v2h1v-1h1v1h1v-1h1v1h4v-1h1v1h1v-1h3v1h1v-1h1v1h5v-1h1v2h1v-1h1v-2h1v2h4v-1h1v1h1v-1h1v1h2v-1h2v1h4v-1h1v1h1v-1h2v1h1v-2h1v2h5v1h3v-2h4v2h2v-1h1v1h2v-1h1v1h1v-2h1v1h1v1h1v-1h2v1h1v-1h4v1h2v-1h1v-1h1v2h1v-1h2v1h3v-1h4v1h1v-1h1v1h1v-1h1v-1h1v1h1v1h1v-1h5v1h1v-1h2v-2h1v1h1v2h1v-1h1v-1h1v2h1v-2h1v1h4v-1h1v1h2v1h1v-1h3v1h1v-1h3v1h1v-1h3v-1h1v1h1v1h2v-1h2v1h1v-2h1v1h1v-1h1v1h2v1h1v-1h1v-1h1v-1h1v3h1v-1h1v1h1v-1h3v-1h1v1h1v1h1v-1h1v1h1v-2h1v1h5v-1h1v1h2v-1h1v-1h1v3h1v-1h1v-1h1v1h2v-1h1v1h1v-1h1v1h1v1h1v-1h3v-1h2v1h2v-1h1v-1h1v1h2v1h5v-1h3v1h6v-1h3v-1h1v3h1v-1h1v-1h1v1h1v1h1v-1h1v1h1v-1h1v1h1v-1h3v-2h1v1h1v1h3v-1h1v1h2v-1h1v1h2v1h1v-1h1v-1h3v1h1v-1h2v1h1v1h1v-2h1v1h1v-4h1v3h1v1h2v-1h1v1h2v-1h2v1h1v-1h1v1h2v-1h1v1h2v-1h1v1h5v1h1v-1h4v1h1v-3h1v1h1v1h6v1h1v-2h1v1h1v1h1v-1h1v1h3v-1h2v1h1v-1h2v1h1v-1h5v-1h1v2h2v-1h1v-2h2v3h1v-1h5v-1h1v1h5v1h1v-1h3v-1h1v1h2v1h1v-1h6v1h1v-2h1v1h4v1h2v-1h1v1h1v-1h2v1h2v-1h1v-1h1v1h1v-1h1v1h1v-1h1v-1h2v-1h2v1h2v1h1v1h5v1h1v-2h1v1h2v-1h1v1h1v-1h1v1h1v-2h1v2h2v-1h1v1h1v-1h1v2h1v-1h1v-1h2v1h9v-2h1v2h1v1h1v-1h5v-1h1v1h2v-1h2v1h3v-1h2v1h3v1h1v-2h1v1h1v1h1v-1h4v1h1v-1h4v-1h2v1h1v-1h1v1h1v1h1v-1h4v-2h1v2h2v-2h1v1h2v-1h1v2h2v-2h1v1h2v2h1v-2h2v8h-1v-2h-1v1h-2v-1h-1v2h-2v-2h-2v2h-1v-1h-1v-1h-1v1h-1v-1h-1v1h-1v-1h-7v-1h-1v1h-2v-1h-2v2h-1v-1h-2v1h-1v-1h-2v1h-1v-1h-1v-1h-2v1h-1v-1h-1v2h-1v1h-1v-2h-2v-1h-1v1h-1v-1h-1v2h-1v-1h-1v2h-1v-3h-1v1h-2v-1h-1v2h-2v-1h-1v1h-1v-1h-1v1h-2v-2h-1v1h-3v1h-2v-2h-1v1h-1v1h-1v-1h-12v-1h-6v1h-5v1h-1v2h-1v-1h-1v1h-1v-2h-1v1h-1v-2h-3v1h-1v-1h-1v-1h-1v1h-3v-1h-1v1h-3v-1h-1v1h-1v1h-1v-2h-1v1h-4v-1h-1v1h-2v2h-1v-2h-1v-1h-1v1h-3v-1h-1v1h-2v-1h-2v1h-7v-1h-2v1h-2v-1h-3v1h-2v-1h-1v1h-5v-1h-1v1h-1v-1h-1v1h-3v-1h-2v1h-3v-1h-1v1h-2v-1h-1v1h-2v-1h-1v1h-1v-1h-3v1h-2v-1h-1v1h-1v-1h-1v1h-2v1h-2v-1h-1v-1h-2v2h-1v1h-1v-2h-1v-1h-1v1h-5v1h-1v-1h-2v1h-1v1h-1v-1h-2v-1h-2v1h-1v-1h-2v-1h-1v1h-1v1h-1v-1h-3v1h-3v-1h-4v1h-1v-1h-1v-1h-1v1h-5v1h-1v-1h-4v-1h-1v1h-2v1h-2v-1h-1v1h-1v-1h-1v1h-1v-1h-4v1h-3v2h-1v-2h-1v1h-1v-2h-5v1h-1v1h-1v-1h-1v-1h-3v1h-1v-1h-1v-1h-1v1h-4v1h-2v1h-1v-1h-1v-1h-1v1h-1v-1h-1v-1h-1v1h-2v1h-1v-2h-1v2h-1v-1h-5v-1h-2v1h-1v-1h-2v2h-1v-1h-5v-1h-1v1h-7v-1h-2v3h-1v-1h-1v-1h-1v-1h-1v1h-1v-1h-3v1h-6v1h-1v-1h-2v-1h-1v1h-5v-1h-2v1h-2v-1h-1v1h-2v1h-1v1h-1v-2h-4v-1h-3v1h-2v-1h-1v1h-1v-1h-2v1h-1v-1h-2v1h-1v-1h-1v1h-1v-1h-1v1h-6v-1h-3v1h-1v-1h-1v1h-3v-1h-1v1h-2v-1h-2v1h-1v-1h-1v1h-3v-1h-1v2h-2v-1h-1v1h-1v-2h-1v1h-1v1h-2v-1h-1v2h-1v-3h-2v2h-1v1h-1v-2h-2v-1h-1v1h-8v1h-1v-2h-1v2h-1v-1h-1v-1h-1v2h-2v-1h-9v1h-2v-1h-1v2h-1v-1h-1v-1h-3v1h-1v-1h-6v-1h-1v2h-1v-2h-1v1h-3v1h-1v-1h-1v-1h-1v1h-1v-1h-1v2h-2v-1h-1v1h-4v-1h-1v1h-1v-1h-1v1h-2v-1h-2v1h-1v-2h-1v1h-2v1h-1v-1h-1v1h-6v-1h-1v1h-1v-1h-4v1h-2v-1h-4v1h-1v-2h-1v1h-1v-1h-1v1h-4v2h-1v-2h-1v-1h-1v2h-1v-1h-1v-1h-2v1h-9v-1h-1v1h-4v-1h-1v1h-12v1h-1v-1h-2v1h-1v-1h-1v1h-1v1h-1v-1h-1v1h-1v-1h-2v-1h-1v2h-1v-1h-1v1h-1v-3h-2v1h-5v1h-1v-1h-5v-1h-1v1h-1v-1h-2v1h-1v-1h-1v1h-3v-1h-2v1h-2v-1h-1v1h-1v-1h-1v1h-1v-1h-2v1h-1v-1h-1v1h-1v-1h-2v1h-3v-1h-2v1h-4v1h-1v-1h-1v1h-2v2h-1v-3h-1v2h-2v-2h-1v1h-1v1h-1v-2h-1v1h-2v-1h-2v1h-2v-2h-1v1h-6v-1h-1v1h-1v-1h-2v1h-1v-1h-1v1h-1v1h-1v-1h-2v-1h-1v1h-6v1h-1v-1h-4v-1h-1v1h-2v-1h-2v1h-2v-1h-1v1h-5v-1h-1v3h-1v-2h-1v-1h-1v1h-5v1h-1v-1h-2v1h-1v-1h-7v3h-1v-2h-1v-1h-2v1h-1v1h-1v-3h-1v1h-3v3h-1v-3h-2v3h-1v-3h-3v-1h-1v1h-1v1h-2v-2h-1v1h-2v1h-1v-1h-1v-1h-1v1h-1v-1h-1v1h-2v1h-1v-1h-1v1h-1v-1h-5v1h-2v-1h-2v-1h-1v1h-2v2h-1v-1h-3v-1h-3v-1h-1v1h-1v-1h-1v1h-2v1h-1v-1h-1v1h-1v-1h-2v4h-1v-2h-2v-2h-3v1h-1v1h-1v-1h-1v-1h-3v-1h-1v1h-2v1h-1v-1h-2v2h-1v-1h-1v-1h-2v-1h-1v1h-1v-1h-1v1h-1v1h-1v-1h-8v-1h-2v1h-3v-1h-1v1h-1v-1h-1v1h-3v2h-1v-3h-1v1h-3v-1h-2v1h-3v-1h-1v1h-3v-1h-1v1h-4v-1h-3v1h-1v-1h-1v1h-3v1h-1v-2h-4v1h-1v-1h-4v1h-1v-1h-1v1h-4v-1h-1v1h-3v-1h-1v1h-1v-1h-1v1h-1v1h-1v-1h-4v-1h-2v1h-1v-1h-1v1h-2v1h-1v-1h-1v-1h-3v1h-1v-1h-1v1h-6v-1h-1v1h-2v-1h-1v1h-4v-1h-3v1h-1v-1h-1v1h-2v-1h-1v1h-2v1h-4v-2h-2v1h-1v-1h-1v3h-1v-2h-1v1h-1v-1h-1v-1h-2v1h-3v1h-1v1h-1v-1h-1v-1h-1v1h-1v-1h-6v-1h-1v1h-1v1h-1v-1h-1v1h-1v-1h-4v-1h-1v1h-2v1h-1v-1h-1v-1h-1v1h-2v-1h-1v2h-1v-1h-1v-1h-1v1h-2v-1h-1v1h-3v1h-2v-1h-2v-1h-1v1h-3v-1h-1v1h-1v1h-1v1h-2v2h-1v-2h-1v-3h-1v3h-1v-1h-3v3h-1v-3h-3v2h-2v-2h-1v2h-1v-2h-1v-1h-2v2h-1v-1h-1v-1h-7v1h-1v-1h-1v1h-2v-1h-2v1h-1v1h-1v-2h-1v2h-1v-2h-6v-1h-2v1h-3v-1h-3v3h-1v-2h-13v-2h-1v2h-4v-1h-1v2h-1v-1h-1v1h-1v-2h-1v2h-1v-1h-4v-2h-1v4h-1v-2h-4v-1h-1v1h-2v-1h-1v1h-3v1h-1v-1h-1v1h-1v-1h-1v-1h-1v1h-1v1h-1v-1h-1v-1h-1v1h-1v-1h-3v1h-1v-1h-2v1h-1v-1h-1v1h-1v-1h-1v1h-1v-1h-4v2h-1v-2h-2v1h-2v-2h-1v2h-2v-1h-2v1h-1v1h-1v-2h-1v2h-1v-2h-1v1h-1v-1h-1v2h-1v-2h-1v1h-7v-1h-1v2h-1v-1h-1v1h-1v-1h-1v1h-2v-1h-3v1h-4v-1h-1v1h-1v-1h-1v1h-1v-1h-1v1h-1v-1h-4v-1h-1v1h-1v-1h-1v1h-1v1h-1v-2h-2v1h-1v1h-1v-1h-1zM277 335h2v-1h2v1h2v-1h1v1h3v-1h1v1h1v-1h2v1h1v-1h1v1h1v-1h2v1h1v-1h2v1h1v-2h1v2h3v-1h2v1h1v-1h1v1h1v-1h1v1h3v-1h1v-1h1v2h1v-1h1v-2h1v2h1v-1h1v-1h1v1h3v-1h2v1h1v-3h1v4h1v-1h1v1h1v1h2v-1h1v-1h1v1h1v1h4v-2h1v1h1v-1h1v1h4v-1h1v1h1v1h1v-1h4v1h1v-1h1v1h1v-2h2v1h1v-1h1v1h7v1h1v-2h1v1h1v1h2v-1h3v1h2v-1h1v1h1v-1h3v-2h1v3h1v-1h1v1h1v-1h1v1h1v-1h1v1h2v-1h1v1h1v-2h1v1h2v1h1v-1h3v1h1v-1h1v1h2v-1h2v1h1v-1h1v1h1v-2h1v2h2v-1h1v1h2v-1h1v1h4v-1h1v1h1v-1h3v1h1v-1h1v1h4v-1h1v1h1v-1h1v1h1v-1h2v-1h2v1h4v1h1v-2h1v1h2v1h2v-1h1v1h2v-1h1v1h5v-1h1v1h6v-1h1v1h3v-1h1v1h2v-1h1v1h3v1h1v-2h2v1h1v-2h1v2h8v-1h3v1h1v-1h1v1h2v-1h2v-1h1v1h2v-1h1v-1h2v-1h1v3h2v-2h1v2h4v-1h1v2h2v-1h1v1h1v-2h1v1h2v1h1v1h1v-1h1v-1h1v1h4v-1h1v1h2v-1h3v1h1v-1h1v1h1v-1h2v1h1v-1h1v1h2v-1h1v1h5v-1h1v2h1v-1h4v-1h3v-1h1v1h3v-1h2v1h4v-1h1v1h1v-1h1v1h1v-1h1v-1h1v2h1v1h1v-2h1v2h1v-1h5v1h2v-1h5v1h1v-3h1v2h2v1h1v-3h1v2h1v1h1v-3h1v2h2v1h1v-1h1v2h1v-1h1v-1h2v1h3v-1h1v1h1v-1h1v1h2v-1h1v1h1v-1h1v1h2v-2h1v2h1v-2h1v2h1v-1h2v1h1v-1h3v1h3v-1h1v1h2v-1h1v1h1v-1h7v1h1v-1h2v1h1v-2h1v1h2v1h3v-1h2v1h1v-1h2v1h1v-1h1v2h1v-1h4v-1h1v1h1v-1h3v1h4v-1h1v1h3v-1h1v2h1v-1h1v-1h1v1h5v-1h1v1h2v-1h2v1h6v-1h2v1h3v-1h2v1h4v-1h2v1h4v1h1v-1h2v-1h1v1h2v-1h1v1h3v-1h1v1h7v-1h1v1h3v-1h1v1h4v-1h1v-1h1v1h2v1h2v-1h1v1h8v1h1v-1h1v-1h1v-1h3v1h1v-1h1v1h1v1h1v-1h1v1h1v-1h1v1h2v-2h1v3h1v-2h2v-1h1v2h4v-1h2v1h2v-1h1v1h1v-2h1v1h4v1h2v-1h1v1h1v-1h2v1h2v-1h1v1h9v-1h1v-1h1v1h1v-2h2v2h4v-2h1v2h1v2h1v-1h2v-1h1v-2h1v2h4v-1h1v-1h2v1h1v1h3v1h1v-2h3v1h4v1h1v-1h1v1h2v1h1v-3h1v1h4v1h1v-1h2v1h3v-1h2v1h2v-1h1v1h1v-1h2v1h1v-3h1v2h1v1h2v-1h1v1h7v-1h1v1h2v-1h2v1h1v-1h6v-1h1v1h2v-2h1v1h2v-1h1v2h1v-1h2v-1h1v1h3v1h1v1h2v-1h2v1h1v-1h6v1h5v-1h1v1h9v-1h1v1h4v-1h1v1h3v1h1v-1h1v1h1v-1h5v-1h1v1h4v-1h1v1h8v-1h1v1h3v-1h1v1h1v-1h2v1h2v-1h1v1h1v-1h3v2h1v-2h1v1h1v-1h1v1h1v-1h1v1h1v-1h4v1h1v-1h1v2h1v-2h1v1h3v-1h1v1h1v-1h2v-2h1v1h1v1h1v1h1v-1h2v1h1v-2h1v1h1v1h3v-1h1v1h6v-3h1v3h1v-1h1v1h1v-2h1v2h3v-1h1v1h1v-1h3v1h1v1h1v-1h1v-1h1v1h3v-1h2v-1h2v1h3v-1h1v1h1v1h1v-1h9v1h2v-1h1v1h1v-1h1v1h1v-1h2v1h1v-2h1v1h1v1h1v-1h1v2h1v-2h1v1h1v-1h1v1h1v-1h1v1h5v-1h1v1h1v-1h1v1h2v-1h1v1h4v-1h5v-1h1v1h1v-1h1v1h1v1h1v-1h1v1h2v-1h3v1h3v-1h2v1h1v-1h3v1h1v-1h1v-1h1v1h2v1h1v-1h1v1h1v-1h2v1h2v-2h1v1h1v1h1v-2h2v1h1v-1h1v1h1v1h1v-1h1v1h6v-1h2v1h4v-1h1v1h2v-1h3v-1h1v1h2v-1h1v-1h1v2h1v1h1v-1h1v1h3v-1h1v-1h1v2h1v-2h1v1h2v1h2v-1h1v1h2v-1h1v1h1v-1h1v1h3v-1h3v1h2v-1h2v1h3v-1h3v-1h1v1h1v1h5v-1h1v1h1v-1h1v1h5v-1h4v-3h1v2h2v1h3v1h2v-1h1v1h3v-2h1v1h2v1h3v-1h1v1h1v-1h3v1h3v-1h1v-2h1v1h1v2h2v-1h1v-1h1v1h2v1h1v-1h4v1h1v-2h1v2h2v-1h1v-1h1v1h5v1h1v-1h2v-2h1v3h4v-2h1v1h1v1h1v-1h2v1h3v-1h1v1h2v-1h3v1h1v-1h2v1h1v-1h1v1h2v-2h1v1h1v-1h2v1h2v-1h1v1h2v-1h1v2h1v-1h6v1h1v-1h4v-2h1v3h1v-1h1v1h1v-1h1v1h2v-1h3v1h1v-1h7v-1h3v2h1v-2h1v1h1v1h2v-1h1v2h1v-1h1v-1h1v1h1v-1h3v1h1v-1h1v1h3v-1h1v-1h1v1h1v-1h2v2h1v-1h2v1h1v-1h1v1h1v-1h1v1h3v-3h1v3h1v-1h2v1h3v-1h1v1h5v-1h1v1h1v-2h1v2h2v-1h1v1h2v-1h2v5h-1v-1h-1v1h-1v-1h-1v1h-2v1h-1v-1h-4v-1h-1v1h-2v1h-1v-1h-1v-1h-1v1h-2v-1h-1v1h-2v-1h-2v1h-2v-1h-2v1h-1v-1h-1v1h-1v-1h-2v1h-1v3h-1v-2h-1v-1h-1v-1h-1v1h-4v-1h-1v1h-1v-1h-1v1h-2v-1h-1v1h-3v1h-7v-1h-2v2h-1v-3h-1v1h-1v1h-4v-1h-2v-1h-1v2h-6v-1h-7v-1h-1v2h-4v-2h-2v3h-3v-1h-3v-1h-2v1h-1v-1h-2v-1h-1v1h-2v-1h-1v1h-9v1h-1v-1h-5v1h-1v-1h-3v-1h-1v1h-3v1h-1v-2h-1v2h-1v-1h-1v-1h-1v1h-1v2h-1v-2h-1v1h-1v-1h-6v1h-1v-1h-2v-1h-1v2h-2v1h-1v-1h-1v-1h-2v-1h-1v1h-6v1h-1v-1h-2v1h-2v1h-2v-2h-1v-1h-2v1h-1v-1h-1v2h-1v-2h-1v1h-3v1h-4v-1h-2v-1h-1v1h-3v-1h-1v1h-1v1h-1v-2h-1v1h-1v-1h-1v1h-3v-1h-1v1h-5v-1h-1v2h-2v-2h-2v2h-1v-2h-1v1h-4v-1h-1v1h-8v-1h-2v2h-1v1h-1v-2h-6v1h-1v-1h-1v2h-1v1h-1v-2h-1v1h-1v-1h-2v-1h-2v1h-2v-1h-2v-1h-1v1h-1v-1h-1v1h-1v-1h-1v1h-2v-1h-1v1h-1v-1h-1v1h-2v-1h-1v2h-2v-1h-3v-1h-1v1h-3v-1h-1v1h-6v1h-1v-1h-4v-1h-1v1h-1v1h-2v-1h-1v1h-1v-2h-1v2h-1v-1h-1v1h-1v-1h-2v1h-1v-1h-4v1h-1v-1h-4v1h-1v-1h-5v-1h-2v1h-10v-1h-1v3h-1v-2h-4v1h-1v-1h-6v1h-3v-2h-1v1h-1v1h-2v1h-1v-1h-1v1h-2v-2h-6v-1h-1v1h-2v-1h-1v2h-1v-1h-1v1h-1v-1h-1v1h-1v-1h-3v1h-1v-1h-3v-1h-1v1h-4v1h-1v-2h-2v1h-1v-1h-1v1h-1v-1h-1v1h-4v-1h-2v1h-9v1h-1v-1h-1v1h-2v-1h-3v1h-1v-2h-1v1h-3v-1h-1v2h-1v-2h-1v1h-4v-1h-1v1h-2v-1h-1v1h-3v-1h-1v1h-2v-1h-1v2h-1v-1h-2v-1h-1v1h-4v-1h-1v1h-1v-1h-2v1h-2v-1h-2v2h-1v-1h-4v-1h-1v1h-1v-1h-2v1h-9v-1h-7v1h-1v-1h-3v1h-1v-1h-1v2h-1v-1h-8v1h-1v-2h-1v1h-2v1h-1v-1h-2v-1h-2v1h-4v-1h-1v2h-1v1h-2v-1h-1v1h-1v-2h-1v1h-1v2h-1v-1h-1v-1h-2v-1h-1v1h-1v-2h-1v1h-1v1h-2v-1h-2v-1h-1v1h-2v-1h-1v1h-1v-1h-1v1h-5v1h-1v-1h-1v-1h-1v1h-1v1h-2v-1h-1v1h-2v-2h-1v1h-1v1h-1v-1h-7v1h-1v-1h-1v1h-1v-2h-1v1h-1v1h-1v-1h-2v1h-2v-1h-2v2h-1v-2h-4v1h-1v-1h-1v2h-1v-1h-1v-1h-2v1h-1v2h-1v-1h-1v-1h-3v-1h-3v1h-1v-1h-5v1h-1v-1h-2v1h-1v-1h-1v2h-1v-2h-9v1h-1v-2h-3v1h-2v1h-2v-2h-1v2h-1v-2h-1v1h-1v1h-1v-2h-1v1h-1v-1h-2v1h-1v-1h-1v2h-1v-2h-1v1h-3v1h-2v-1h-3v2h-1v-1h-1v-2h-1v1h-4v-1h-1v1h-4v1h-1v-2h-1v2h-1v-2h-1v1h-3v-1h-1v1h-2v-1h-4v1h-2v-1h-2v2h-3v-2h-1v1h-5v-1h-2v1h-2v-1h-1v1h-1v-1h-3v1h-1v-1h-1v1h-1v-1h-3v1h-2v-1h-1v1h-2v-1h-1v1h-6v-1h-1v1h-1v-1h-1v1h-3v-1h-1v1h-7v-1h-1v1h-1v1h-1v-1h-2v-1h-2v1h-2v-1h-1v1h-1v-1h-1v1h-2v1h-1v-1h-5v-1h-2v1h-2v-1h-1v1h-3v-1h-3v1h-1v-1h-2v1h-1v1h-1v-2h-1v1h-5v-1h-1v1h-2v-1h-1v1h-1v-1h-2v2h-1v-1h-1v2h-1v-2h-1v2h-1v-1h-1v-1h-3v1h-2v-1h-3v1h-1v-2h-1v1h-3v1h-2v-1h-1v1h-2v-1h-3v1h-1v-1h-2v1h-3v1h-1v-2h-1v1h-1v-1h-2v-1h-1v1h-4v1h-1v-1h-3v-1h-1v1h-5v1h-1v-1h-2v1h-2v-1h-3v1h-1v-1h-1v1h-1v-1h-2v1h-1v-1h-1v1h-5v-1h-1v1h-2v1h-1v-2h-4v1h-1v-1h-1v-1h-1v1h-2v-1h-2v2h-2v-1h-12v-1h-1v2h-1v-1h-1v1h-1v-1h-3v-1h-1v1h-2v-1h-4v1h-2v-1h-5v1h-2v-1h-2v2h-4v-1h-3v1h-2v1h-1v-3h-2v2h-3v1h-1v-1h-4v-1h-1v1h-1v-1h-1v1h-1v-1h-6v-1h-1v1h-2v-1h-1v1h-3v-1h-1v1h-1v-1h-1v1h-1v-1h-1v1h-3v-1h-2v1h-2v-1h-1v1h-1v-1h-1v1h-3v-1h-3v1h-2v-1h-3v1h-5v-1h-1v1h-4v-1h-1v1h-3v1h-2v-1h-1v-1h-1v1h-1v1h-1v-1h-6v1h-1v-1h-1v-1h-1v2h-1v-1h-3v-1h-1v1h-1v1h-1v-1h-1v1h-1v-1h-10v-1h-1v1h-1v-1h-3v2h-1v-1h-5v-1h-2v1h-4v1h-1v-1h-3v-1h-1v1h-2v1h-1v-1h-5v-1h-1v1h-5v-1h-1v1h-1v1h-1v-1h-1v1h-1v1h-1v-1h-1v-1h-2v1h-1v-1h-4v1h-1v-1h-2v2h-1v-1h-2v-1h-2v1h-3v-1h-2v1h-2v-1h-2v1h-1v-2h-1v2h-1v-1h-1v-1h-1v1h-8v-1h-1v1h-1v1h-2v1h-1v-1h-2v4h-1v1h-1v-6h-1v1h-3v1h-1v-2h-1v1h-1v-1h-9v1h-1v-1h-5v-1h-1v1h-2v-1h-2v1h-6v-1h-1v3h-1v-1h-1v-2h-1v2h-1v-1h-1v1h-1v-1h-1v-1h-1v2h-1v-1h-2zM277 365h2v1h1v-1h11v1h1v-1h4v-1h1v1h1v-1h1v1h6v-1h1v2h1v-2h2v1h1v-1h1v-2h1v2h2v1h1v-1h1v1h1v-1h1v1h1v-1h3v-1h1v1h1v-1h1v1h5v2h1v-1h4v-1h1v1h9v-1h2v1h6v-1h2v2h1v-1h3v-1h1v1h4v-1h1v1h3v-1h1v1h2v-1h1v1h1v-2h1v2h3v-1h2v1h1v1h1v-1h2v-1h3v1h1v-1h1v1h1v-6h1v4h1v1h1v1h1v-1h1v1h2v-1h1v1h3v1h1v-1h1v-1h1v1h1v-1h1v1h15v1h1v-1h8v1h1v-1h1v1h2v-2h1v2h3v-2h1v1h1v1h2v-1h3v-1h3v1h4v1h2v-1h1v-2h1v2h1v-1h2v1h1v1h1v-1h7v-1h2v-1h1v1h4v-1h1v1h2v-1h1v1h1v-1h1v1h1v1h2v1h1v-1h2v1h1v-1h8v1h1v-1h3v1h1v-1h1v1h1v-1h3v-1h1v1h1v-1h3v1h1v-2h1v-1h1v3h1v-1h2v1h4v-1h1v1h2v-1h1v1h1v-1h1v1h1v-1h1v1h2v-1h1v1h2v-1h2v1h2v-1h1v2h1v-1h3v-1h2v1h2v-2h2v2h1v-1h1v1h2v-1h1v1h1v-1h3v1h1v-1h1v1h2v-1h1v1h1v-1h1v1h5v-1h3v1h1v-1h1v1h1v-1h2v1h2v1h1v-1h3v-1h1v1h1v-1h1v1h1v-1h2v1h2v-2h1v2h1v-1h1v1h2v-1h1v1h1v-1h1v1h3v-1h1v1h1v-1h1v1h3v-1h1v-1h1v1h1v1h1v-2h1v1h1v2h1v-2h2v1h1v1h1v-1h2v-2h1v2h1v-1h1v1h4v1h1v-2h1v1h12v-1h1v2h1v-2h1v1h4v1h1v-1h1v-1h3v1h2v1h1v-2h1v1h1v-1h1v1h3v1h2v-1h3v-1h1v1h3v-1h1v2h1v-2h2v1h2v1h1v-2h1v1h2v1h1v-1h1v1h1v-1h1v-2h1v2h7v1h1v-1h1v1h2v-2h1v2h1v-1h5v1h4v-1h2v1h1v-1h2v1h1v-1h2v-1h1v1h8v1h1v-1h1v-2h1v1h1v-1h1v1h1v1h4v-1h2v-1h1v2h8v-1h1v1h1v1h1v-1h3v-1h1v1h1v-1h1v2h1v-1h1v-1h2v2h1v-1h4v1h2v-1h1v-1h1v1h1v1h1v-1h1v-1h1v2h1v-1h2v-1h1v1h6v-1h1v1h5v-1h1v1h2v-1h3v1h2v1h1v-2h1v1h3v-2h1v1h2v1h1v-1h2v1h1v-1h1v-1h1v1h3v1h4v-1h1v1h7v-1h4v1h2v-1h2v1h4v1h1v-2h3v-1h1v2h1v1h1v-1h3v1h1v-1h3v-1h1v1h1v-1h1v1h2v-1h1v-1h1v1h1v1h6v-1h1v1h3v-1h1v-1h1v2h1v1h1v-1h2v1h1v-1h6v1h1v-1h3v-2h1v1h1v1h1v-1h1v1h3v-1h1v1h1v-1h1v1h4v1h1v-1h2v-1h2v2h2v-1h1v1h3v-1h1v-1h1v1h1v-1h1v2h1v-1h8v1h1v-1h4v1h1v-1h1v1h1v-1h2v1h1v-1h2v1h1v-1h2v-1h1v1h1v-1h2v2h1v-1h6v-1h1v1h1v-1h5v1h1v1h1v-3h1v2h3v1h1v-1h5v-2h1v2h2v-1h1v2h1v-1h1v-1h2v1h1v1h1v-1h3v-1h1v1h1v-1h1v2h1v-2h1v2h1v-1h5v-2h1v2h4v1h1v-1h2v1h1v-1h3v-1h2v1h1v-1h1v1h1v-1h2v1h1v-1h2v1h1v-1h1v1h1v-1h1v1h1v-1h6v1h1v-1h1v1h1v-3h1v2h4v-2h1v-1h1v1h1v1h1v1h2v1h1v-1h1v-1h1v1h3v1h1v-1h1v-1h1v1h1v1h1v-1h2v1h2v-1h1v1h2v-1h1v2h2v-1h1v-1h1v1h3v-1h1v1h1v-1h1v1h2v1h1v-1h2v-1h1v1h1v-1h1v1h1v-1h3v1h2v-1h1v1h1v-1h1v1h1v-1h1v-1h1v1h2v1h5v-2h1v1h1v2h1v-1h5v1h1v-1h4v-1h1v1h1v1h1v-1h9v1h2v-1h7v1h1v-1h1v1h1v-1h3v1h1v-1h3v1h2v-1h6v1h1v-1h6v-1h1v1h3v1h1v-1h3v-1h5v1h7v-1h1v2h2v-1h6v1h1v-1h2v1h2v-1h4v1h1v-1h2v1h1v-1h2v1h1v-1h9v-2h2v-1h1v3h1v-1h4v1h3v-1h2v1h1v-1h1v-1h1v3h1v-1h3v-1h1v1h2v-2h1v1h2v1h1v1h1v-2h1v1h4v-1h1v1h2v1h1v-2h1v1h2v-1h1v1h3v-1h1v1h7v-1h1v1h2v-1h1v1h3v-1h2v1h1v-2h1v2h1v-1h1v1h3v-1h2v1h11v-1h2v-1h1v2h1v-1h1v1h1v1h1v-1h1v-1h1v1h3v-1h1v1h1v-1h1v1h2v-1h2v1h1v-2h1v3h1v-1h2v-1h1v-1h2v1h1v1h3v-1h1v-1h1v3h1v-1h2v-1h1v1h6v1h1v-1h2v-1h1v1h2v1h1v-1h9v-1h1v1h1v-1h2v2h1v-2h1v-1h1v3h2v-1h9v-2h1v2h2v-1h2v2h1v-1h1v-1h1v1h1v-1h1v2h1v-1h1v-1h1v-2h1v2h1v1h3v1h1v-1h1v1h1v-1h1v1h2v-1h4v1h1v-1h3v1h1v2h-1v1h-1v-1h-1v1h-9v-1h-2v1h-6v1h-1v-1h-3v-1h-2v1h-1v-1h-2v2h-1v-1h-2v1h-1v-1h-1v-1h-1v1h-3v1h-1v-1h-2v1h-2v-1h-6v1h-1v-1h-1v1h-2v-1h-5v1h-1v-1h-1v-1h-1v2h-1v-1h-1v2h-1v-3h-1v1h-2v-1h-1v1h-3v-1h-1v1h-10v1h-1v1h-2v-1h-2v-1h-2v-1h-1v1h-2v1h-3v-1h-2v1h-1v-1h-1v1h-1v-1h-2v2h-1v-2h-5v1h-1v1h-1v-1h-3v-1h-1v2h-1v-1h-1v-1h-3v1h-5v-1h-5v1h-1v-2h-1v1h-2v1h-2v-1h-5v1h-3v-1h-1v-1h-1v1h-3v1h-2v-2h-1v1h-3v1h-5v-1h-2v1h-1v-1h-1v1h-2v-1h-2v1h-2v-1h-6v1h-2v-1h-4v1h-1v-1h-2v1h-2v-1h-3v2h-1v-1h-1v-1h-8v1h-1v-2h-1v1h-2v-1h-1v1h-11v-1h-1v1h-4v-1h-1v2h-1v-1h-9v-1h-1v2h-2v-1h-1v1h-1v-1h-1v1h-1v-1h-2v-1h-1v1h-6v-1h-1v1h-3v1h-1v-1h-2v1h-1v-1h-2v1h-1v-1h-1v-1h-2v1h-1v1h-1v-1h-2v-1h-1v1h-1v-1h-1v1h-1v-1h-1v1h-1v-1h-2v1h-1v-1h-1v1h-4v-1h-1v1h-2v-1h-1v1h-2v-1h-1v1h-6v-1h-1v1h-3v1h-1v-1h-2v1h-1v-1h-5v1h-1v-1h-1v3h-1v-2h-2v1h-3v-3h-1v2h-1v-1h-3v1h-1v-1h-2v1h-2v-2h-1v2h-1v-1h-2v1h-1v-1h-6v1h-1v-1h-2v-1h-1v1h-4v1h-1v-1h-1v-1h-1v1h-3v1h-1v-1h-2v1h-2v-1h-1v2h-1v2h-1v-2h-2v-2h-1v2h-1v1h-1v-2h-1v3h-1v-2h-2v-1h-2v1h-1v4h-1v-5h-3v-1h-1v1h-4v-1h-2v1h-1v-1h-2v1h-4v-1h-3v2h-1v-2h-3v1h-2v-1h-1v1h-2v-2h-1v1h-4v2h-1v-2h-1v1h-1v-1h-3v1h-2v-1h-2v-1h-2v1h-8v1h-1v-1h-2v-1h-1v1h-1v2h-1v-2h-6v1h-1v-1h-4v-1h-1v1h-1v1h-2v-1h-1v-1h-1v2h-1v-1h-7v3h-1v-3h-1v-1h-1v2h-1v-1h-3v-1h-1v1h-2v1h-1v-1h-4v-1h-3v1h-2v-1h-2v1h-4v-1h-4v1h-3v2h-1v-2h-7v-1h-2v1h-1v1h-1v-1h-7v1h-3v-1h-7v1h-1v-1h-2v1h-1v-1h-1v1h-1v-1h-1v1h-2v1h-1v-2h-3v2h-2v-1h-1v-1h-1v-1h-1v1h-4v-1h-1v2h-1v-1h-2v2h-2v-1h-3v-1h-1v-1h-1v1h-4v1h-1v-1h-1v-1h-2v1h-2v1h-1v-1h-1v1h-1v-2h-2v1h-1v1h-3v-1h-3v1h-2v1h-2v1h-1v-3h-1v1h-2v-1h-3v1h-1v-1h-1v1h-2v-1h-1v1h-1v-1h-2v2h-1v-1h-2v-1h-1v1h-1v-1h-3v1h-1v-1h-1v1h-1v-1h-1v1h-2v-1h-2v1h-1v-1h-2v1h-1v-1h-3v1h-1v-1h-4v1h-1v-1h-6v1h-1v-1h-5v-1h-1v1h-1v1h-1v-1h-3v1h-1v-1h-4v1h-1v-1h-1v1h-1v-1h-3v1h-1v-1h-1v-1h-1v1h-3v1h-1v-1h-4v1h-2v-1h-3v2h-1v-3h-1v2h-1v-1h-3v2h-2v-2h-1v1h-2v-1h-3v-1h-1v1h-1v1h-1v-1h-3v-1h-1v1h-4v-1h-1v1h-5v-1h-2v1h-3v-1h-1v1h-3v-1h-4v1h-3v1h-1v-1h-2v1h-1v-1h-1v1h-1v-1h-1v-1h-1v1h-4v1h-1v-1h-3v1h-1v-2h-2v1h-3v-1h-1v1h-1v1h-1v-1h-2v-1h-1v1h-1v-1h-1v1h-3v1h-1v-1h-2v1h-2v1h-1v-2h-1v1h-1v-1h-2v-1h-1v1h-1v-1h-1v1h-3v1h-1v-1h-2v1h-1v-1h-6v-1h-1v1h-4v1h-1v-1h-3v-1h-1v2h-1v-1h-3v1h-1v-2h-1v1h-2v1h-1v-1h-1v2h-1v-2h-2v1h-3v-1h-1v1h-2v1h-1v-1h-1v-1h-2v1h-2v-1h-4v1h-1v-1h-1v1h-3v-1h-1v-1h-1v1h-1v1h-1v-1h-2v1h-1v-1h-4v1h-1v-1h-3v1h-1v-1h-4v1h-1v-1h-9v1h-1v1h-1v-2h-1v1h-2v-1h-1v1h-1v1h-1v-2h-1v1h-1v-1h-2v1h-1v-1h-1v1h-2v-1h-3v1h-3v-1h-2v1h-1v-1h-1v1h-1v-1h-4v1h-1v-1h-2v1h-1v-1h-1v1h-1v-1h-1v-1h-1v2h-2v-1h-1v2h-1v-1h-2v2h-1v-2h-1v-1h-1v1h-4v-1h-3v-1h-1v2h-1v-1h-3v2h-1v-2h-6v-1h-1v1h-2v-1h-1v1h-1v1h-1v-1h-3v1h-2v-1h-1v1h-1v1h-1v-1h-2v1h-2v-1h-3v-1h-1v1h-2v-1h-2v1h-1v-1h-2v1h-1v-1h-2v1h-1v-1h-3v1h-1v-1h-2v-1h-1v1h-1v-1h-1v1h-2v1h-2v-1h-3v-1h-1v1h-5v-1h-2v1h-2v-1h-1v1h-6v-1h-2v2h-1v-1h-1v-1h-1v1h-3v-1h-1v1h-1v-1h-1v1h-1v-1h-1v1h-1v-1h-1v1h-1v-1h-1v1h-3v1h-1v-1h-1v1h-2v-1h-2v1h-1v-2h-1v1h-2v1h-1v-1h-2v2h-1v-1h-1v2h-1v-3h-1v1h-1v-1h-3v-1h-2v1h-1v1h-1v-1h-5v1h-1v-1h-2v-1h-1v2h-1v-1h-1v1h-1v-1h-8v1h-1v-1h-2v1h-1v-1h-1v1h-1v-1h-2v1h-1v-2h-1v3h-1v-1h-2v-1h-1v-1h-1v1h-3v1h-1v-1h-3v1h-3v-1h-2v1h-1v-1h-2v1h-2v-1h-2v1h-1v3h-1v-2h-2v-3h-1v3h-1v-2h-2v1h-1v-1h-1v1h-2v-1h-2v1h-3v-2h-1v1h-7v1h-1v-1h-2v-1h-1v1h-4v-1h-1v2h-1v-1h-1v-1h-2v1h-1v-1h-2v2h-1v-1h-5v1h-1v-1h-1zM277 396h1v-1h1v-1h1v2h1v-1h4v-1h1v1h1v-2h1v2h3v-1h1v1h1v1h1v-2h3v1h2v-1h1v1h2v-2h1v2h2v-1h1v1h2v-1h1v2h3v-2h1v1h2v-1h1v1h3v-1h1v1h3v-1h1v1h3v1h1v-2h1v1h4v-1h1v1h1v1h1v-1h1v-1h1v1h2v-1h1v-1h1v2h1v1h1v-1h3v-3h1v2h1v1h1v-1h1v1h2v1h1v-2h2v1h1v-1h1v1h5v-1h1v2h1v-1h1v1h1v-1h3v-1h3v1h1v-1h1v-1h1v-2h1v3h1v1h4v-1h1v1h2v-1h1v1h4v1h1v-1h1v1h1v-1h1v1h1v-1h1v1h1v-1h7v-1h1v1h1v-2h1v1h3v-2h1v3h1v-2h1v2h1v1h1v-2h1v1h1v-2h1v2h1v1h1v-1h2v1h1v-2h1v1h5v-1h1v1h4v-1h1v1h9v-2h1v1h2v1h9v1h6v-1h2v1h3v-1h4v1h6v-1h5v1h2v-2h1v1h6v1h2v-1h9v1h1v-2h1v1h2v-1h1v1h1v-1h1v1h2v-1h1v1h15v1h1v-1h1v-1h1v2h1v-1h1v-1h1v1h3v1h1v-1h1v-1h1v2h1v-1h2v-1h1v1h6v-1h1v1h2v-1h1v1h1v-1h1v-1h1v3h1v-2h1v1h1v-1h3v1h1v1h1v-2h1v-1h1v1h2v1h1v1h1v-1h2v-1h3v1h1v-1h1v1h1v-1h1v2h1v-1h2v-1h1v1h3v1h1v-4h1v3h1v-1h1v2h1v-1h2v-1h1v1h6v1h1v-1h4v-1h4v1h2v-1h1v1h6v1h1v-1h1v1h1v-1h1v-1h1v-1h1v1h1v1h5v1h2v-2h2v1h1v1h3v-1h1v1h2v-1h2v1h2v-1h1v-1h1v2h1v-1h3v-1h1v2h1v-1h6v1h1v-2h1v1h1v-1h3v1h1v-2h1v2h7v1h1v-1h5v1h1v-1h2v1h1v-1h3v1h1v-1h4v1h1v-1h1v1h1v-1h7v1h1v-1h1v-1h2v2h2v-1h4v1h1v-1h1v-1h1v2h1v-2h1v1h6v1h2v-1h1v1h1v-1h1v-1h1v2h1v-2h1v2h1v-1h2v1h1v-1h1v1h2v-1h5v1h2v-1h4v1h1v-1h1v-1h1v1h3v-1h1v2h2v-1h2v-1h1v-1h1v2h2v-1h1v1h1v-1h1v1h2v-1h2v-1h1v1h1v-1h1v2h2v-1h1v1h1v-2h1v1h1v1h1v-1h2v2h1v-1h1v-2h1v2h1v-1h1v1h3v-2h1v2h1v1h1v-1h5v-1h2v1h1v-1h1v1h3v-1h1v1h2v1h1v-1h2v1h2v-2h1v2h1v-3h1v2h1v1h1v-1h1v1h1v-1h2v1h1v-1h2v1h2v-1h8v-1h1v1h1v-1h3v1h5v-1h1v1h1v-1h1v1h1v1h1v-1h6v1h1v-1h2v-1h3v1h4v1h1v-1h2v1h2v-2h1v2h2v-1h3v1h1v-2h3v1h1v-1h1v2h1v-1h6v1h3v-1h2v1h3v-2h1v1h1v1h1v-1h9v-1h1v1h1v-1h1v1h2v1h1v-1h2v-1h2v-1h1v1h1v-1h1v2h2v1h1v-1h1v1h1v-1h2v1h1v-1h6v-3h1v2h1v-1h1v2h1v1h1v-1h2v1h1v-1h3v1h1v-1h1v1h1v-1h1v1h2v-1h4v1h1v-1h1v1h1v-1h3v1h2v-1h2v1h1v-2h1v2h1v-1h1v-1h1v2h2v-3h1v2h1v-1h1v-1h2v2h3v-3h1v3h3v-1h1v1h2v-1h1v-1h1v1h2v-1h1v2h1v-1h1v1h5v1h1v-1h1v1h1v-1h1v-1h1v1h1v-1h1v1h3v-1h1v1h2v1h1v-1h2v1h1v-1h6v1h1v-1h2v1h1v-1h1v1h1v-1h2v-1h1v1h1v-1h1v1h4v-2h2v1h2v-3h3v1h1v2h1v-1h1v-1h1v1h1v1h3v1h1v-1h1v1h6v-1h2v1h1v-1h1v1h1v-1h1v1h1v-1h1v1h3v1h1v-1h1v1h2v-1h2v1h1v-1h6v1h1v-1h5v-1h2v1h3v1h1v-1h1v1h3v-2h1v1h1v-1h1v1h4v1h1v-1h6v-1h1v1h1v1h1v-1h5v1h1v-2h1v1h2v1h2v-1h1v1h2v-2h1v1h1v1h1v-1h2v1h1v-1h2v1h1v-2h1v1h5v1h6v-1h1v-1h1v1h5v1h2v-1h1v1h2v-1h2v1h2v-1h3v-3h1v3h6v-1h2v-3h1v3h2v1h5v1h4v-2h1v2h1v-1h1v1h3v-1h4v1h1v-1h1v1h1v-1h2v-1h1v1h1v1h1v-1h1v1h1v-1h2v-1h1v1h1v-1h2v1h1v-1h1v-2h1v3h1v-1h1v-1h1v-1h1v2h1v-2h1v1h1v1h1v-3h1v3h1v1h1v-1h1v-1h1v2h2v-1h2v2h1v-1h4v1h2v-1h1v1h1v-1h1v-2h1v2h1v-1h1v2h1v-2h1v1h4v-1h1v1h2v-1h4v2h1v-1h1v-1h2v1h1v-1h1v-1h1v2h4v-2h1v2h4v-1h1v1h3v-1h1v2h1v-1h1v-1h5v1h6v1h1v-1h3v1h1v-1h3v-1h1v1h1v-1h1v1h3v-1h2v1h4v-1h1v1h2v-1h2v1h4v-1h2v1h1v-1h1v1h1v1h1v-2h1v1h1v1h2v-1h1v-1h2v1h5v-1h1v2h1v-2h1v1h2v1h2v-1h1v1h1v-1h3v1h1v-1h5v-1h2v1h1v1h3v-1h1v1h1v-1h5v1h3v-1h1v1h1v-1h4v1h1v-1h2v1h1v-1h9v5h-1v-1h-7v1h-2v-1h-1v1h-1v-2h-1v2h-3v-1h-6v1h-1v-2h-2v1h-2v1h-2v-1h-3v1h-3v-1h-1v3h-1v-3h-1v-1h-1v1h-2v-1h-1v1h-2v1h-1v-1h-2v1h-2v1h-1v-1h-1v-1h-2v1h-1v-1h-1v1h-6v-1h-1v1h-1v-1h-1v1h-3v-1h-2v1h-2v-1h-3v1h-2v-1h-1v1h-2v-1h-1v1h-1v-1h-1v2h-1v-2h-2v1h-4v1h-1v-1h-1v1h-1v-1h-1v1h-1v-2h-2v1h-2v-1h-1v1h-1v-1h-3v1h-2v-1h-1v1h-1v1h-1v-1h-1v-1h-2v1h-2v-1h-1v1h-4v-1h-1v1h-2v-1h-1v1h-2v-1h-1v1h-1v1h-1v-1h-1v1h-2v-1h-1v1h-1v-1h-2v1h-1v-1h-3v-1h-1v1h-6v-1h-1v1h-4v-1h-1v1h-2v1h-1v-1h-1v-1h-1v1h-3v1h-4v-2h-2v1h-2v-1h-1v2h-2v2h-1v-1h-1v-1h-1v-1h-2v1h-1v-1h-2v4h-1v-3h-1v1h-1v-2h-1v1h-1v-2h-1v1h-1v-1h-1v-1h-1v2h-2v-1h-1v1h-1v1h-1v-1h-2v-1h-4v1h-2v-1h-1v1h-4v-1h-2v1h-1v-1h-6v2h-1v-1h-1v1h-2v-1h-1v-1h-1v1h-1v-1h-1v1h-2v-1h-1v1h-1v-1h-2v1h-1v-1h-4v1h-1v-1h-4v-1h-1v2h-1v-1h-9v1h-1v-1h-1v1h-1v-1h-2v1h-3v1h-1v-1h-1v-1h-1v1h-1v-1h-4v1h-4v-1h-1v1h-4v-1h-1v1h-2v-1h-2v1h-2v2h-1v-2h-1v-1h-1v1h-5v-1h-5v1h-1v1h-1v-1h-3v-1h-6v2h-1v-2h-1v-1h-1v2h-1v-1h-5v1h-2v-1h-3v1h-1v-1h-1v2h-1v-1h-1v-1h-1v1h-2v-1h-1v1h-5v-1h-1v1h-2v1h-1v-2h-1v1h-2v-2h-1v2h-3v-1h-1v4h-1v-3h-4v2h-1v-1h-2v1h-2v1h-1v-1h-1v-1h-2v1h-1v-1h-2v-1h-2v-1h-1v1h-1v-1h-3v1h-2v-1h-3v1h-2v1h-2v-2h-1v1h-1v-1h-2v1h-1v-1h-1v2h-1v-1h-1v-1h-2v1h-1v-1h-1v1h-4v-1h-1v1h-2v-1h-2v1h-1v-2h-1v1h-1v1h-4v1h-4v-2h-1v1h-3v-1h-1v1h-1v1h-1v-1h-3v-1h-1v1h-2v1h-1v-2h-1v1h-3v-1h-2v3h-1v-2h-1v-1h-8v1h-2v-1h-5v1h-1v-1h-2v1h-1v1h-1v-1h-1v-2h-2v1h-7v1h-4v-1h-1v1h-1v-1h-1v2h-1v-2h-3v1h-2v-1h-1v1h-3v-1h-1v1h-1v1h-1v-1h-3v-1h-1v1h-1v-1h-6v1h-3v-1h-1v1h-1v-1h-4v1h-2v-2h-1v2h-4v-1h-2v1h-1v-1h-3v1h-1v-1h-1v1h-1v-1h-3v2h-1v-1h-1v-2h-1v1h-2v1h-1v-1h-1v1h-1v-1h-2v1h-1v-1h-2v1h-1v-1h-3v-1h-1v1h-1v1h-1v1h-1v-1h-2v-1h-1v1h-1v-1h-1v1h-2v1h-2v-1h-7v-1h-1v1h-2v-2h-1v2h-1v1h-1v-1h-3v-1h-5v1h-2v-2h-1v1h-1v1h-2v-1h-1v1h-1v-1h-1v1h-4v-1h-1v1h-1v-1h-2v1h-1v-1h-1v1h-1v-1h-1v1h-2v-1h-1v1h-2v-1h-1v2h-4v-1h-4v-1h-1v1h-1v-1h-1v1h-2v-1h-1v-1h-1v2h-2v-1h-2v1h-3v-1h-1v2h-1v-2h-2v1h-2v1h-1v-1h-1v1h-2v1h-1v-1h-2v-1h-1v1h-1v-1h-4v1h-2v-1h-6v1h-1v-2h-1v-1h-1v1h-1v1h-2v-1h-2v1h-1v-1h-4v1h-3v-1h-1v1h-1v-1h-2v1h-2v-1h-1v1h-1v-1h-1v2h-2v-1h-10v-1h-1v2h-2v-1h-1v-1h-1v1h-1v-1h-1v1h-3v-1h-2v1h-1v-1h-7v1h-1v-1h-2v1h-1v-1h-1v1h-1v-1h-2v1h-1v-1h-7v-1h-1v1h-1v2h-1v-1h-1v-1h-2v-1h-1v2h-1v-1h-2v1h-1v1h-1v-2h-2v1h-2v-1h-1v2h-2v-1h-2v1h-1v-2h-3v1h-3v-1h-3v1h-3v1h-1v-2h-1v1h-2v-1h-1v2h-1v-1h-1v1h-1v-1h-5v-1h-3v-1h-1v2h-1v-1h-3v1h-1v1h-4v-1h-1v-1h-1v1h-1v-1h-1v1h-1v-1h-2v1h-1v-1h-2v1h-1v-1h-1v-1h-1v4h-1v-1h-1v1h-1v-2h-3v-1h-4v1h-2v1h-1v-1h-4v-1h-3v2h-1v-1h-1v-1h-1v1h-2v-1h-1v1h-2v1h-2v-1h-4v1h-1v-1h-2v-1h-2v1h-1v-1h-1v1h-3v-1h-1v1h-1v1h-1v-1h-1v-1h-1v1h-1v-1h-1v1h-2v-1h-3v1h-5v-1h-1v1h-3v-1h-1v-1h-1v2h-1v-1h-1v1h-2v-1h-1v1h-1v1h-1v-1h-1v-1h-2v1h-1v-1h-2v1h-2v-1h-2v1h-1v1h-1v-2h-2v1h-4v-1h-1v1h-3v1h-1v-1h-2v-1h-2v1h-6v-1h-1v1h-1v-1h-1v1h-2v-2h-1v2h-1v-1h-2v1h-1v-1h-4v-1h-1v2h-2v-1h-1v1h-1v-1h-4v1h-2v-1h-5v1h-1v-1h-1v-1h-1v1h-11v1h-1v-1h-3v1h-1v-1h-4v2h-1v-1h-2v1h-1v-1h-5v-1h-3v1h-2v-1h-1v1h-3v-1h-1v2h-1v-2h-4v1h-4v-1h-3v1h-2v3h-1v-2h-1v-1h-2v1h-1v-1h-1v1h-1v-1h-2v1h-1v-1h-3v-1h-1v2h-1v-2h-10v1h-1v-2h-1v2h-3v-1h-2v2h-1v-2h-1v1h-10v-1h-1v1h-1v1h-1v1h-1v-1h-1v-2h-1v1h-2v-1h-1v1h-3v-1h-1v1h-1v1h-3v-2h-1v1h-4v-1h-1v1h-2v-1h-1v1h-9v-1h-1v2h-1v-2h-1v1h-4v-1h-2v1h-1v-1h-2v2h-1v-1h-1v-1h-1v1h-3v-1h-1v1h-1v-1h-2v1h-2v-1h-2v1h-2v-1h-3v1h-1v-1h-2v1h-1v1h-1v-1h-4v1h-2v-1h-1v-2h-1v1h-7v1h-3v-1h-1v1h-2v-1h-1v1h-1v-1h-1zM277 425h3v1h2v-1h1v1h1v-1h1v1h1v-1h3v1h3v-1h2v1h1v-1h3v1h1v-1h1v1h3v-1h1v1h3v-1h7v-2h1v2h1v1h1v-2h1v1h1v-1h1v1h2v1h1v-1h1v-1h1v1h3v1h1v-1h1v1h2v-1h1v-1h1v1h1v1h2v-1h1v1h3v-2h1v1h1v1h1v-1h1v1h1v-1h1v1h5v-1h1v1h2v1h1v-1h1v1h1v-1h8v-1h1v1h1v-1h2v1h2v-1h2v1h2v-2h1v1h3v1h2v-1h2v1h6v-1h1v1h2v-1h2v1h2v-1h3v1h1v-1h2v1h3v-1h1v2h1v-2h3v1h1v-1h1v1h2v-1h2v1h1v-1h2v1h2v-1h1v1h8v-1h1v1h2v-1h1v1h3v-1h2v1h1v-1h1v1h1v-1h1v1h1v-1h6v1h1v-1h1v1h2v-1h1v1h1v-1h1v-1h1v1h3v1h1v-1h1v1h1v-1h1v-1h1v1h3v1h1v-2h1v1h1v-1h1v1h1v-1h1v1h1v-1h1v2h1v-1h2v1h2v1h1v-1h1v-2h1v1h7v-2h1v2h1v1h1v-1h5v1h4v-1h2v1h2v-2h1v1h2v1h2v-1h1v1h3v-1h5v-1h1v1h1v1h2v-1h3v1h2v-2h1v1h1v1h2v-1h2v1h1v-1h4v1h2v-1h1v1h1v-2h1v1h3v1h1v-1h1v1h3v-1h1v-1h2v1h1v-1h1v-1h1v1h1v1h2v-1h1v1h2v-1h1v1h3v1h2v-2h1v1h1v1h4v-1h1v1h2v-1h1v1h2v-1h3v1h1v-1h1v-1h1v1h1v-1h1v1h2v1h5v1h1v-1h2v-1h1v1h3v-1h1v1h6v-1h1v1h1v-2h1v2h1v-1h2v1h1v-1h1v1h1v-1h1v1h13v-1h1v1h2v-1h1v1h1v-1h1v1h5v-1h1v1h1v1h1v-2h1v1h1v-1h1v1h2v-1h1v-1h1v2h2v-1h3v1h1v-3h2v-1h1v1h1v2h1v-2h2v1h4v1h2v1h1v-2h1v1h1v1h1v-1h4v1h1v-1h3v1h1v-1h1v-1h1v1h2v1h3v1h1v-2h2v1h1v-1h1v1h4v-1h2v1h3v-1h1v1h4v-2h1v1h4v-2h1v2h3v-1h1v2h2v-1h2v1h1v-1h3v1h1v-2h2v1h3v-2h1v1h1v1h1v1h2v-1h2v-1h1v1h1v1h1v-1h2v2h1v-1h2v-2h1v1h5v1h2v-1h1v1h1v-1h1v1h3v-1h4v1h1v1h1v-2h1v1h1v-1h1v1h1v-1h1v-1h1v1h1v1h4v-1h1v1h1v-1h1v-1h1v1h1v1h1v-1h2v1h3v-1h2v1h3v-1h2v1h1v-1h2v1h1v-1h3v-1h1v2h1v-1h2v1h1v-1h1v1h1v-1h1v1h1v-1h1v1h1v-1h1v1h1v-1h1v1h5v-1h1v1h18v-1h1v-1h1v2h7v-1h1v1h1v-1h1v1h1v-1h1v1h1v-1h1v1h1v-1h2v-1h1v1h4v1h2v-1h1v1h4v-1h1v1h1v-1h1v1h1v-1h1v1h1v-1h1v1h1v-1h2v-1h2v1h1v1h2v-1h2v1h1v-1h1v1h2v-1h1v1h3v-1h1v1h6v-1h2v1h1v-1h3v1h1v-1h1v1h1v-1h2v1h2v-1h1v1h1v-1h7v1h3v-1h2v-1h1v1h5v1h1v-1h1v-1h1v-1h1v1h3v2h1v-2h1v1h2v-2h1v2h1v1h1v-2h1v1h6v1h1v-1h2v1h1v-2h1v2h1v-1h1v1h1v-1h3v2h1v-2h6v1h1v-2h1v1h3v1h1v1h1v-2h1v1h2v-1h2v1h1v-1h3v1h1v-1h3v1h1v-1h3v1h3v-1h1v-1h1v1h1v-1h1v1h1v1h1v-1h1v1h1v-2h1v2h2v-1h1v-1h1v2h1v-1h2v1h1v-1h1v1h1v-1h3v1h1v-1h1v1h3v-1h1v1h5v-1h1v1h5v-1h1v1h10v-1h1v2h1v-1h2v-1h1v1h2v-1h1v1h1v-1h1v1h1v-1h1v1h1v-1h3v1h4v-1h1v1h1v-1h1v1h1v-1h1v1h2v-1h2v1h2v-1h1v1h1v-2h1v1h1v1h3v-1h2v-1h1v1h1v-1h5v1h1v-1h1v1h2v-1h3v1h2v-1h1v1h2v2h1v-1h1v-1h2v1h1v1h1v-2h1v1h1v-1h2v1h1v-1h1v1h1v-1h1v1h1v-1h2v-1h1v1h6v1h1v-2h2v1h2v-1h1v1h2v-1h1v1h1v-1h1v-1h1v1h1v1h1v-1h2v2h3v-3h1v3h1v-1h1v-1h1v1h3v1h6v-1h2v-1h1v1h1v2h1v-2h1v1h1v-1h1v1h1v-1h3v1h1v-1h2v1h3v-2h1v2h1v-2h1v1h1v1h1v-1h3v1h1v-1h2v1h1v-1h1v1h1v-1h2v1h1v-1h1v1h1v-1h3v-1h1v2h1v-1h2v1h1v-1h2v-1h2v1h1v1h2v-2h1v1h2v1h1v-2h1v1h2v1h1v-1h1v1h2v-1h2v1h1v-1h3v-1h1v2h1v-1h3v1h6v-1h1v1h1v-1h1v1h11v-2h1v2h1v-1h1v2h1v-1h1v-1h3v-2h1v1h2v1h1v1h2v-1h1v1h1v-1h2v1h1v-1h1v1h4v-1h2v1h1v-1h1v1h1v-1h1v-1h1v2h4v-1h2v1h1v-1h1v1h2v-1h1v1h5v-1h1v1h1v-1h1v1h2v-1h1v1h2v-1h1v1h1v1h1v-1h1v-2h1v1h1v1h8v-1h2v1h3v-1h2v1h3v-1h1v1h1v-1h1v1h4v-1h1v1h4v-1h5v1h2v-1h1v1h1v-1h2v-1h1v2h1v-2h1v2h1v-1h6v1h1v-1h2v1h1v-1h1v1h1v-1h1v1h1v-1h2v1h3v-1h5v1h1v4h-2v-1h-3v1h-1v-1h-1v1h-1v-1h-2v1h-2v-1h-2v1h-4v1h-2v-2h-1v1h-1v-1h-1v2h-1v-2h-1v1h-3v3h-1v-3h-2v-1h-2v1h-3v1h-1v-1h-9v1h-1v-1h-2v1h-1v-2h-1v1h-6v-1h-1v1h-1v-1h-1v1h-1v-1h-1v1h-1v-1h-2v1h-1v-1h-1v1h-1v-1h-2v1h-1v-1h-2v1h-1v-1h-8v1h-1v-1h-1v1h-1v-1h-1v1h-1v1h-1v-1h-1v-1h-1v1h-1v-1h-1v1h-1v1h-1v-2h-1v1h-1v-1h-1v1h-4v1h-1v-1h-1v-1h-1v1h-2v-1h-1v1h-1v-1h-1v1h-1v-1h-2v1h-6v-1h-1v1h-2v1h-1v1h-1v-3h-1v1h-2v-1h-3v1h-3v-1h-1v1h-1v-1h-1v1h-4v-1h-1v1h-1v-1h-2v1h-3v-1h-3v1h-2v-1h-1v1h-3v-1h-1v1h-1v-1h-1v1h-8v-1h-1v1h-2v-1h-1v2h-2v-2h-1v1h-1v1h-3v-1h-3v-1h-1v1h-2v1h-1v-1h-4v-1h-2v1h-4v1h-1v-1h-1v-1h-1v1h-1v1h-2v-1h-3v1h-2v1h-1v2h-1v-4h-3v-1h-1v2h-1v-2h-1v1h-2v1h-1v-1h-3v-1h-4v1h-2v1h-1v-1h-2v1h-1v-1h-3v1h-2v-1h-2v1h-1v-1h-2v1h-1v-1h-2v1h-3v1h-1v-1h-2v-1h-1v2h-1v-2h-2v1h-1v-2h-2v1h-2v1h-1v-1h-4v1h-2v-1h-3v-1h-3v1h-2v-1h-1v1h-5v-1h-2v1h-3v1h-1v-1h-4v2h-1v-1h-2v1h-1v-1h-2v1h-1v-1h-3v-2h-1v2h-1v-1h-4v-1h-1v1h-2v-1h-1v1h-3v1h-1v-1h-2v-1h-3v1h-2v-1h-1v1h-4v-1h-1v1h-4v-1h-2v2h-1v-1h-2v-1h-9v1h-2v-1h-4v1h-2v-1h-7v1h-2v-1h-1v1h-4v-1h-1v1h-1v-1h-1v1h-1v-1h-2v1h-4v1h-1v-1h-4v-1h-1v1h-3v2h-1v-2h-5v-1h-1v1h-3v-1h-1v1h-3v-1h-2v1h-5v-1h-2v1h-1v-1h-1v1h-1v-1h-1v1h-2v1h-1v-1h-2v-1h-1v1h-1v-1h-3v1h-3v-1h-4v1h-2v1h-1v-1h-2v1h-1v-1h-1v-1h-1v1h-4v-1h-1v1h-3v-1h-1v1h-4v1h-1v-1h-2v2h-1v-2h-2v1h-1v-1h-1v-1h-1v1h-3v-1h-1v1h-1v1h-1v-1h-5v1h-1v-1h-1v1h-1v-1h-1v-1h-1v1h-4v-1h-2v1h-8v-1h-1v1h-1v-1h-1v1h-1v-1h-1v1h-4v-1h-2v1h-1v-1h-1v1h-1v-1h-2v1h-2v-1h-1v1h-1v-1h-1v3h-1v-1h-1v1h-1v-2h-1v1h-4v-2h-2v1h-3v-1h-1v1h-6v-1h-1v2h-1v-1h-4v-1h-1v1h-4v-1h-4v1h-2v-1h-5v1h-1v-1h-2v1h-1v-1h-10v1h-1v-1h-2v1h-1v-1h-1v1h-1v-1h-5v1h-4v-1h-1v1h-5v-1h-1v1h-3v1h-1v-1h-2v-1h-1v1h-3v-1h-1v1h-4v1h-1v-1h-2v-1h-1v1h-4v-1h-2v1h-1v-1h-4v1h-2v-1h-1v1h-2v-1h-5v1h-1v-1h-1v1h-1v-1h-1v1h-1v-1h-1v1h-5v-1h-1v1h-3v-1h-1v1h-1v-1h-1v1h-3v1h-1v-1h-4v-1h-1v2h-2v-1h-3v1h-2v1h-1v-1h-1v1h-1v-2h-2v1h-2v-1h-4v-1h-1v1h-2v2h-1v-2h-1v-1h-2v1h-1v1h-1v-1h-9v-1h-1v1h-3v-1h-1v1h-2v1h-1v-1h-2v-1h-1v1h-2v-1h-2v1h-3v-1h-3v1h-1v-1h-1v1h-2v-1h-3v1h-9v1h-2v1h-1v-1h-3v1h-1v-1h-1v1h-2v-2h-1v-1h-1v2h-1v-1h-5v-1h-3v1h-1v-1h-5v1h-1v-1h-4v1h-1v-1h-1v1h-1v-1h-8v1h-1v-1h-1v1h-1v-1h-1v1h-5v-1h-1v1h-1v-1h-1v1h-2v-1h-1v1h-1v-1h-3v1h-2v-1h-1v1h-1v-1h-1v1h-2v-1h-1v1h-2v-1h-1v1h-2v-1h-1v1h-3v-1h-1v1h-3v1h-1v-1h-2v-1h-1v1h-3v-1h-1v1h-1v-1h-3v1h-4v-1h-1v2h-1v-1h-4v-1h-1v1h-3v1h-2v1h-1v-2h-2v1h-2v2h-1v-3h-2v1h-1v-1h-2v1h-1v-1h-3v1h-3v-1h-3v2h-1v-2h-11v-1h-1v1h-1v1h-1v-1h-1v-1h-1v1h-6v-1h-1v1h-2v1h-1v-1h-2v-1h-1v1h-9v-1h-1v1h-2v-1h-2v1h-2v-1h-2v1h-1v-1h-1v1h-4v1h-1v-2h-1v2h-1v-1h-8v1h-3v-1h-3v-1h-2v1h-7v1h-1v-1h-2v1h-1v-2h-1v1h-1v-1h-1v2h-1v-2h-1v1h-2v-1h-1v1h-1v1h-1v-1h-1v-1h-1v1h-1v-1h-1v1h-4v-1h-1v1h-1v-1h-1v1h-2v-1h-1v1h-2v-1h-1v1h-8v-1h-1v1h-1v-1h-4v1h-1v-1h-1v1h-2v-1h-1v1h-2v-1h-2v1h-2v-1h-1v1h-4v-1h-2v1h-1v-1h-1v2h-1v-1h-1v-1h-2v1h-5v-1h-1v1h-1v-1h-1v1h-1v-1h-1v1h-1v-1h-1v1h-2v1h-1v-1h-2v1h-2v-1h-2v-1h-2v1h-1v-1h-2v1h-2v-1h-3v1h-1v-1h-2v1h-1v-1h-10v1h-2v-1h-1v1h-3v-1h-1v1h-2v-1h-1v1h-7v-1h-1v1h-3v-1h-1v1h-2v-1h-1v1h-1v-1h-1v1h-1v1h-1v1h-1v-1h-1v-2h-1v1h-5v-1h-2v1h-1v1h-1v-1h-1v1h-1v-2h-1v3h-1v-3h-1v1h-6v-1h-2v1h-2v-1h-2v2h-1v-1h-1v-1h-1v1h-3v-1h-1v1h-1v-1h-2v1h-2v-1h-1v1h-1zM277 455h1v1h1v-1h1v-1h1v1h1v1h1v-1h1v1h8v-1h1v1h3v-1h2v1h1v-1h1v1h2v-1h1v1h1v-1h1v1h1v-1h1v1h2v-1h2v1h1v1h1v-1h1v-1h1v1h4v-1h1v1h5v-2h1v2h2v-1h6v-1h3v1h1v1h1v-1h1v-1h1v1h1v1h2v-1h1v2h1v-1h8v1h1v-2h1v1h10v-1h1v1h2v1h1v-2h2v1h1v-1h1v-2h1v2h2v1h2v-1h1v1h5v-1h1v1h2v-1h1v-1h3v2h3v1h1v-1h4v-1h1v1h2v-1h1v1h4v-1h3v1h2v1h1v-1h2v1h2v-1h1v1h1v-1h1v-1h1v1h1v1h1v-2h4v1h2v-1h1v2h1v-1h4v-1h1v1h3v-1h1v1h1v-1h3v1h1v-1h1v-1h1v2h3v-2h1v-3h1v2h1v2h3v1h1v-1h1v1h1v-1h5v1h1v-1h1v1h1v-1h1v1h3v-1h3v1h2v-1h1v1h3v-1h1v1h3v-1h2v1h1v-1h2v1h2v-1h3v-1h1v1h2v1h3v-1h1v1h3v1h1v-2h1v-1h1v2h1v-2h1v2h1v-1h1v1h3v-1h2v1h1v1h1v-2h1v1h6v-1h1v1h8v1h1v-1h5v-1h2v1h1v-1h1v1h1v-1h1v1h2v1h1v-1h1v1h1v-2h1v1h4v-1h1v1h1v-1h1v1h6v1h3v-1h1v1h1v-1h2v1h1v-2h1v1h6v-1h1v1h2v-1h3v1h1v-1h1v1h2v-1h2v1h4v-1h1v1h2v-1h2v1h2v-1h1v2h1v-1h2v-1h1v1h3v-1h1v1h1v1h1v-1h6v-1h1v1h6v-1h1v2h1v-1h3v1h1v-1h4v-1h3v1h1v1h1v-2h1v-1h1v1h6v1h2v-1h1v1h1v-1h3v-1h1v1h1v-3h1v3h2v1h1v-1h1v1h1v-1h1v-1h1v1h1v1h1v-1h1v1h1v-1h1v1h1v1h1v-3h1v1h1v1h2v-2h1v2h2v-1h1v1h1v-1h1v1h1v-1h1v1h3v-1h1v1h5v-1h3v2h1v-1h1v-1h2v-1h1v-3h1v3h1v1h1v1h1v-2h1v1h1v-1h1v1h2v2h1v-2h1v1h1v-1h5v1h1v-1h1v1h1v-1h2v-1h1v1h1v1h2v-1h2v1h1v-1h4v1h3v-1h2v-1h1v1h1v1h1v-1h1v1h1v-1h1v1h1v-1h4v1h3v-1h1v1h1v-1h1v2h1v-1h5v1h1v-1h4v1h1v-2h1v1h2v1h1v-1h4v-1h2v1h3v-1h1v2h1v-1h1v-1h7v-1h4v-1h3v2h1v-4h1v4h7v1h4v-1h1v1h1v-1h1v1h2v-1h1v1h1v-1h2v-1h1v1h3v-4h1v4h3v-1h1v1h1v-1h2v1h4v2h1v-2h1v1h1v-1h1v1h5v-1h1v1h2v-1h2v1h1v-1h2v1h1v-1h2v1h6v1h1v-1h1v-1h2v1h2v-2h1v1h1v-1h1v2h1v-1h5v1h1v-2h1v1h1v1h3v-1h1v1h1v-1h1v1h3v-1h3v1h1v-1h1v1h1v-1h1v1h4v-1h3v1h1v-1h2v2h1v-1h1v-1h1v1h2v-1h1v1h2v-1h4v1h2v-1h2v1h1v-1h2v1h1v-1h1v1h1v-1h2v-1h1v1h1v1h1v-1h2v1h1v-1h1v1h1v-1h1v1h1v-1h6v1h2v-1h2v1h4v-1h1v1h5v-1h1v1h1v-1h1v1h1v-1h2v1h8v-1h1v1h4v-1h1v1h3v-1h2v-2h2v3h1v-1h2v-1h1v1h1v1h1v-1h3v1h2v-1h3v1h1v-1h1v1h1v-1h1v1h1v-1h3v1h1v-1h1v1h3v-1h1v1h1v-1h2v1h1v-1h1v1h2v-2h1v2h1v-1h1v1h1v-1h1v1h1v-2h2v1h2v-1h2v1h3v-1h1v2h2v-1h1v2h1v-1h6v-1h1v1h2v-1h2v1h1v-1h1v1h2v-1h1v2h1v-2h1v1h4v1h1v-2h1v1h2v-1h1v1h1v-1h1v1h2v-2h1v1h5v1h5v-1h1v1h2v1h1v-1h1v-1h1v1h4v-1h1v1h1v1h1v-2h1v1h4v-1h1v1h4v-1h1v1h5v-1h1v1h2v-1h1v1h1v-1h1v1h2v-1h1v1h3v-3h1v3h1v-1h1v1h3v-1h2v1h1v-1h1v1h1v-1h1v-1h1v1h3v1h2v-2h1v2h3v-1h1v1h1v-1h1v-1h1v1h1v-3h1v1h2v1h1v1h1v-1h2v1h1v1h1v-2h1v1h3v1h1v-1h2v-1h1v2h4v-1h2v1h4v-1h1v1h2v-1h2v1h3v-1h1v1h1v-1h3v-1h1v1h3v-3h1v2h2v-1h1v2h1v-1h3v-1h1v1h1v-1h1v1h1v-2h1v1h1v2h1v-1h1v1h1v1h1v-1h1v-1h2v1h2v1h1v-1h2v2h1v-1h2v-1h2v1h2v1h1v-2h2v1h2v-1h1v1h2v1h1v-1h4v1h1v-1h2v-1h2v1h2v-1h1v1h2v-1h1v1h2v1h1v-3h1v1h1v2h1v-1h1v-1h1v1h10v-1h1v1h2v-2h1v1h4v1h6v-1h4v1h3v-1h1v1h2v1h1v-1h2v1h1v-1h1v-1h1v1h2v-1h4v1h1v-1h2v1h1v-1h1v1h5v1h1v-1h2v-1h1v2h1v-2h2v1h5v-2h1v2h1v-1h1v1h1v-1h2v1h3v-1h2v1h2v-1h4v1h3v-1h1v1h1v-1h1v-1h1v1h6v1h3v-1h1v1h8v-1h1v1h5v-1h1v1h1v1h1v-2h1v1h1v-2h3v2h1v-1h1v-1h2v-2h1v2h1v1h1v-1h2v1h2v1h2v-1h1v6h-1v-1h-1v1h-1v1h-1v-1h-1v-1h-1v2h-3v-2h-1v1h-1v1h-1v-1h-6v-2h-1v1h-4v1h-1v-1h-2v-1h-2v1h-3v1h-1v-1h-6v2h-1v-2h-5v2h-1v-1h-1v-2h-2v2h-1v-1h-1v1h-1v-2h-1v1h-2v1h-1v-1h-1v-1h-1v1h-4v1h-2v-1h-3v1h-1v-1h-3v1h-1v-2h-1v1h-6v1h-1v-1h-2v-1h-1v1h-2v2h-1v-1h-1v1h-1v-1h-1v-1h-1v2h-2v-1h-4v-1h-1v-1h-1v1h-2v1h-1v-1h-4v-1h-1v1h-2v-1h-2v1h-5v1h-1v-1h-4v-1h-1v1h-1v1h-3v1h-1v-1h-1v-1h-5v1h-1v-1h-3v1h-1v-2h-1v1h-4v1h-3v-1h-2v-1h-1v1h-1v-1h-1v1h-1v-1h-1v1h-3v1h-1v-2h-2v1h-1v-1h-1v1h-3v-1h-1v1h-6v1h-1v-1h-6v1h-1v2h-1v-2h-1v1h-3v-1h-2v-1h-1v1h-1v-1h-1v3h-1v-2h-2v1h-1v-1h-2v3h-1v-2h-1v2h-1v-2h-1v1h-1v-1h-1v1h-1v-2h-1v3h-1v-4h-1v2h-3v-3h-1v2h-2v-1h-1v-1h-1v1h-1v-1h-1v1h-2v-1h-1v1h-1v2h-2v-2h-3v1h-2v-1h-3v-1h-1v1h-6v1h-1v-1h-1v1h-4v2h-1v-1h-1v1h-1v-1h-1v-1h-2v2h-1v-2h-2v-1h-2v1h-3v-1h-2v1h-5v-1h-4v2h-1v-2h-1v-1h-1v1h-1v1h-1v-1h-1v1h-1v-1h-1v1h-1v-1h-1v1h-1v-1h-5v1h-1v-1h-1v1h-2v-1h-1v1h-1v-1h-11v-1h-1v1h-2v-1h-1v1h-5v1h-1v-2h-1v1h-2v-1h-1v1h-1v1h-1v-1h-1v1h-2v-1h-3v2h-1v-1h-4v-1h-1v-1h-1v1h-6v1h-1v-1h-4v1h-1v-1h-2v2h-1v-2h-1v1h-1v-1h-3v1h-1v-1h-1v-1h-1v1h-6v-1h-2v1h-3v1h-1v1h-4v-1h-1v1h-1v3h-1v-3h-1v1h-1v-1h-1v-1h-3v-1h-6v2h-1v-1h-1v-1h-11v-1h-1v1h-1v1h-1v-2h-1v1h-5v1h-1v-2h-1v2h-1v-1h-2v1h-1v-1h-3v1h-1v1h-1v-1h-1v-1h-3v1h-1v-1h-8v-1h-1v1h-3v-1h-1v1h-2v-1h-1v2h-1v-1h-2v1h-2v-2h-1v1h-1v1h-1v-1h-2v1h-2v1h-1v-2h-1v1h-1v-1h-2v1h-4v-1h-2v1h-2v-1h-3v-1h-1v2h-1v-1h-1v1h-3v-1h-2v1h-3v1h-1v-2h-3v1h-1v1h-1v-1h-2v-1h-3v1h-3v-1h-1v1h-1v-1h-2v1h-2v-2h-1v1h-6v1h-1v-1h-1v-1h-1v1h-9v-1h-1v2h-1v-1h-3v2h-2v-2h-1v1h-1v-1h-1v1h-1v-1h-1v1h-1v-1h-1v1h-1v1h-1v-1h-3v-1h-4v1h-1v-2h-1v1h-2v1h-2v-1h-4v1h-1v-1h-1v-1h-1v2h-1v-1h-1v1h-2v-2h-1v1h-1v-1h-1v1h-5v1h-1v-1h-2v1h-1v-1h-1v3h-1v-2h-2v1h-3v-1h-6v-1h-1v-1h-1v1h-1v1h-1v-1h-1v-1h-1v1h-2v1h-2v-1h-1v1h-1v-1h-1v1h-1v-1h-2v1h-1v1h-1v-1h-3v1h-1v1h-2v-1h-4v-2h-1v2h-1v-1h-2v1h-1v-1h-1v-1h-1v-1h-1v1h-2v1h-1v-1h-1v1h-2v-1h-9v-1h-1v1h-3v-1h-2v1h-4v-1h-1v1h-10v2h-1v-2h-2v1h-1v-1h-1v-1h-1v2h-1v-1h-1v1h-2v1h-1v-1h-2v-1h-2v1h-2v-1h-1v1h-1v-1h-3v1h-5v-1h-2v1h-2v-1h-1v1h-3v-1h-1v1h-2v-1h-2v-1h-1v1h-5v1h-1v1h-1v-1h-4v-1h-5v2h-2v-2h-5v1h-1v-1h-1v1h-2v-2h-1v1h-2v-1h-1v1h-1v1h-1v-1h-1v-1h-1v1h-3v1h-1v-1h-1v1h-1v-2h-1v1h-1v1h-2v-1h-7v1h-3v-1h-3v1h-1v-1h-6v1h-1v-1h-4v3h-1v-3h-4v-1h-1v2h-1v-1h-14v-1h-1v1h-1v-1h-1v1h-6v-1h-1v2h-1v-1h-2v-1h-1v1h-2v1h-1v-1h-8v1h-1v-1h-1v1h-1v-1h-1v1h-2v-1h-1v-1h-1v2h-1v-1h-1v1h-1v-1h-3v-1h-1v1h-1v1h-1v-1h-2v1h-1v-1h-2v-1h-2v1h-1v-1h-1v1h-2v1h-1v-2h-1v1h-2v-1h-1v1h-5v-1h-1v1h-1v-1h-1v1h-3v-1h-2v1h-2v2h-1v-1h-1v1h-1v-2h-2v-1h-1v1h-2v2h-1v-2h-9v1h-6v-2h-1v1h-1v1h-1v-1h-5v2h-1v-1h-5v-1h-1v1h-1v-1h-4v1h-1v-1h-1v1h-2v1h-1v-1h-1v1h-1v-2h-1v1h-2v-2h-1v1h-2v1h-1v-1h-5v1h-1v-1h-1v1h-1v-1h-7v1h-1v-2h-1v1h-1v1h-3v-1h-3v1h-3v-1h-1v1h-1v-1h-2v1h-2v-1h-1v2h-2v-1h-1v-1h-1v1h-1v-1h-1v1h-1v-1h-3v-1h-2v2h-2v-1h-9v1h-1v-1h-2v-1h-1v1h-5v1h-1v-1h-3v1h-1v-2h-1v2h-2v-1h-7v-1h-1v2h-1v-1h-2v1h-1v-1h-4v1h-1v-1h-1v1h-1v-1h-2v3h-1v-3h-2v3h-1v1h-1v-3h-1v1h-1v-1h-2v-2h-1v1h-4v-1h-1v1h-1v1h-1v-1h-2v1h-3v-1h-4v-1h-3v1h-4v-1h-1v1h-3v-1h-1v1h-2v-1h-1v1h-3v-1h-1v1h-5v1h-1v-1h-1v2h-7v-1h-2v-1h-1v1h-1v-1h-4v1h-1v-1h-7v1h-1v-2h-1v1h-4v-1h-1v1h-1v1h-2v-1h-1v1h-2v-1h-2v1h-1v-1h-3v1h-1v-1h-1v1h-1v-1h-2v1h-1v-1h-3v1h-2v-2h-1v2h-1v-1h-4v1h-1v-1h-1v1h-1v1h-1v-2h-2zM277 485h2v1h5v1h1v-1h3v1h1v-1h5v1h1v-1h1v1h1v-1h11v-1h1v1h1v-1h1v1h2v1h1v-1h1v1h1v-1h1v-1h1v1h2v-1h1v-1h1v3h4v-1h3v1h1v-1h1v1h3v-1h2v1h1v-1h1v1h2v-1h1v1h1v-1h3v1h2v-1h4v1h1v-1h1v1h1v-1h3v-1h2v1h1v1h1v-2h1v1h1v1h1v-1h1v1h2v-1h9v1h1v-1h1v-1h1v1h1v1h1v-1h1v-1h2v1h3v-1h1v1h3v1h2v-1h4v1h1v-1h1v-1h1v1h10v1h1v-1h4v1h1v-1h8v-1h1v1h2v1h1v-1h1v-1h2v1h1v-1h6v1h4v1h1v-2h2v2h1v-1h4v1h1v-1h2v-1h1v-1h1v2h1v-3h1v3h1v-1h1v1h1v-3h2v1h2v1h1v1h1v-3h1v3h1v-1h1v1h1v1h2v-2h1v-1h1v2h4v-1h1v1h1v1h2v-1h7v-1h1v1h1v-1h1v1h6v1h1v-1h3v-2h1v3h1v-1h4v-1h1v1h2v-1h1v1h2v-1h1v1h1v-1h1v-1h1v2h4v1h1v-1h9v1h1v-1h2v1h2v-1h1v1h2v-1h3v-1h2v1h1v1h2v-1h2v1h4v-1h2v1h1v-1h1v1h1v-1h1v1h3v-1h4v-1h1v2h3v-1h1v1h1v-1h1v-1h1v2h1v-1h7v-1h2v2h2v-1h3v1h1v-1h3v-1h2v1h2v-1h1v1h1v-1h1v1h1v-1h1v1h1v-1h1v1h5v1h1v-1h2v1h3v-2h1v1h2v1h2v-1h3v1h1v-1h6v1h1v-2h1v1h12v-1h1v1h3v-1h1v2h1v-2h1v1h12v1h1v-2h2v-1h1v1h1v1h1v-1h1v1h11v1h2v-1h2v-1h1v1h4v-1h1v1h1v-1h1v1h1v1h1v-2h1v1h2v-1h2v1h1v-1h4v1h1v-1h1v1h3v-1h1v1h1v-3h1v2h1v1h6v-1h1v1h2v1h1v-2h1v1h2v-1h1v1h1v-1h2v2h1v-4h1v3h1v1h1v-1h1v-1h1v1h1v1h1v-2h1v2h1v-1h3v1h1v-1h2v-1h1v-1h1v2h1v-1h1v1h1v1h1v-1h1v1h1v-1h1v1h2v-1h3v1h2v-1h2v1h1v-1h3v1h2v-1h3v1h1v-1h1v1h1v-1h1v1h1v-1h2v-1h1v1h8v-1h1v2h1v-1h3v-1h1v2h4v-1h2v1h1v-1h1v1h1v-1h1v1h1v-1h1v1h1v-1h4v1h3v-1h1v1h1v-1h1v1h1v-1h2v1h1v-1h1v1h1v-1h1v1h2v-1h2v1h1v-1h1v1h1v-1h16v-1h1v-1h1v2h2v-1h1v1h1v-1h2v1h7v-1h2v-2h1v3h1v-1h2v1h4v-2h2v3h1v-1h7v-1h1v2h2v-1h1v1h2v-1h2v1h1v-1h1v1h1v-1h1v-1h1v1h3v-2h1v1h1v1h3v1h1v-1h1v1h1v-1h4v-1h1v1h1v-2h1v1h1v-1h1v2h1v-1h1v1h2v-2h1v1h1v1h4v-1h1v1h2v-1h1v1h2v-1h1v1h3v-1h2v1h11v1h1v-1h3v1h1v-1h7v1h1v-1h1v1h1v-2h1v2h1v-1h2v1h1v-1h1v1h1v-2h1v1h2v-1h1v1h9v1h1v-2h1v1h2v1h1v-1h3v1h1v-1h7v1h1v-1h1v1h1v-1h6v-2h1v1h1v1h3v1h1v-1h1v1h1v-1h1v1h1v-1h1v1h2v-1h2v1h2v-1h1v1h1v-1h5v-1h1v1h1v1h1v-1h1v1h1v-1h2v1h1v-1h8v1h1v-1h3v-2h1v2h5v1h1v-1h2v1h1v-1h1v-1h2v2h1v-3h1v2h8v1h3v-1h3v1h2v-1h2v1h2v-1h5v1h1v-1h9v-1h3v1h2v1h1v-2h1v1h4v-1h1v2h1v-1h2v-1h2v2h1v-1h1v-1h1v1h1v-1h1v1h2v-1h1v1h1v1h1v-1h4v-1h1v1h3v-1h1v1h1v-1h2v1h1v-1h1v2h1v-1h1v-1h1v-2h1v3h6v-1h2v1h1v-2h1v-1h2v1h1v2h1v-2h2v2h1v-1h3v-1h1v1h1v1h2v1h1v-1h1v1h1v-1h4v1h2v-2h1v1h1v-1h1v1h3v1h1v-2h1v1h2v1h1v-1h6v-1h2v1h2v-1h1v1h1v-2h1v2h3v-1h1v2h1v-1h3v1h1v-1h1v1h1v-1h3v1h1v-2h1v1h1v1h1v-1h1v1h1v-1h1v-1h1v2h1v-1h3v1h1v-1h2v1h1v-1h2v1h4v-1h3v1h6v-1h5v1h1v-1h7v1h1v-1h3v-1h1v1h9v1h2v-1h3v1h1v-1h1v1h1v-1h3v-1h1v1h3v1h1v-1h5v1h1v-1h1v1h1v-1h1v1h1v-1h1v1h2v-1h1v1h2v-1h5v1h1v-1h1v1h1v-1h7v1h1v-1h4v-2h3v1h1v-1h1v2h8v-1h2v1h2v-1h1v1h2v1h1v-2h1v1h1v-1h1v1h4v1h1v-1h1v-1h1v1h1v1h1v-1h2v-1h1v1h6v-1h1v1h2v-1h1v1h7v-1h1v-1h1v2h3v-1h1v1h5v-1h1v1h2v-1h1v1h2v-1h1v5h-1v1h-2v-1h-1v1h-4v-2h-1v2h-2v-1h-5v1h-1v-1h-1v1h-1v-1h-1v1h-4v-1h-4v1h-1v-1h-3v1h-1v-1h-1v-1h-1v1h-5v1h-1v-1h-3v1h-1v-1h-1v1h-1v-1h-1v1h-6v-1h-2v1h-1v-1h-1v1h-3v-1h-4v1h-2v1h-3v-1h-1v-1h-1v1h-2v2h-1v-2h-1v-2h-1v1h-1v1h-3v-1h-1v1h-1v-1h-4v1h-1v-1h-5v1h-1v-1h-8v-1h-1v1h-1v1h-1v-1h-1v1h-1v-1h-1v1h-1v-1h-1v1h-1v-1h-2v1h-3v-1h-3v1h-3v-1h-6v1h-1v-2h-1v2h-1v-1h-5v1h-1v-1h-5v1h-1v-1h-1v1h-1v-1h-2v-1h-1v2h-1v-1h-1v2h-1v-2h-4v-1h-2v1h-1v-1h-1v1h-12v-1h-2v1h-2v1h-1v-1h-1v1h-1v-1h-12v1h-2v-1h-4v1h-1v-1h-2v1h-1v-1h-1v1h-4v-1h-2v2h-1v-1h-3v-1h-2v1h-1v-1h-5v1h-2v-1h-5v1h-2v-1h-1v1h-2v1h-1v-1h-1v1h-2v2h-2v-1h-1v1h-1v-3h-1v1h-1v1h-1v-2h-2v1h-1v-1h-2v-1h-1v1h-1v-1h-3v1h-1v1h-1v-1h-3v-1h-1v2h-1v-1h-1v-1h-1v2h-1v-1h-2v1h-1v-1h-1v-1h-2v1h-2v1h-1v-1h-1v-1h-1v1h-2v-1h-4v1h-3v-1h-2v2h-1v-2h-1v1h-1v-1h-7v1h-2v-1h-1v1h-1v-2h-1v1h-7v-1h-1v1h-2v1h-1v-1h-1v1h-1v-1h-2v-1h-1v1h-1v1h-1v-1h-6v1h-1v-1h-1v-1h-1v1h-2v1h-1v-1h-4v1h-4v-1h-6v1h-4v-1h-5v1h-1v-1h-4v1h-2v-1h-1v-1h-1v1h-5v1h-1v-1h-2v-1h-2v1h-9v-1h-1v1h-1v-1h-1v1h-5v1h-3v1h-1v-2h-3v1h-1v-1h-1v1h-1v-2h-1v1h-1v1h-1v-1h-3v1h-2v-1h-2v1h-1v-1h-2v1h-2v-1h-2v1h-1v1h-1v-2h-3v1h-1v-1h-3v2h-1v-1h-4v-1h-3v1h-3v-2h-1v1h-2v1h-2v-1h-3v1h-1v-1h-4v1h-1v-1h-1v1h-1v-1h-4v1h-1v-1h-1v1h-5v-1h-1v1h-1v1h-1v-1h-1v-1h-1v2h-1v-2h-1v1h-4v1h-1v-2h-1v1h-2v1h-2v-1h-2v1h-1v-1h-1v1h-2v-1h-9v-1h-2v2h-1v-2h-3v1h-1v-1h-2v1h-1v-1h-1v1h-3v-2h-1v1h-1v1h-1v-1h-1v1h-1v-1h-2v1h-2v-1h-7v2h-2v-1h-2v-1h-1v1h-1v-1h-1v1h-4v-1h-1v1h-2v-1h-3v1h-1v1h-1v-2h-1v1h-1v-1h-1v1h-1v-1h-2v1h-1v-1h-7v1h-2v-1h-1v1h-2v-1h-2v3h-1v-2h-1v-1h-2v1h-1v-1h-9v2h-1v-2h-7v-1h-1v2h-1v-1h-1v1h-1v-1h-7v1h-1v-1h-2v1h-1v-1h-5v1h-1v-1h-2v1h-1v-1h-3v1h-1v-1h-2v1h-2v-1h-1v1h-1v-1h-2v-1h-1v2h-2v-1h-2v1h-2v-1h-3v1h-2v-2h-1v1h-1v-1h-1v2h-1v-1h-7v1h-1v-1h-1v-1h-1v1h-2v1h-1v1h-1v-1h-3v-1h-3v1h-1v-1h-1v-1h-1v2h-2v-1h-1v1h-1v-1h-2v-1h-1v1h-5v1h-4v-1h-2v1h-4v-1h-1v-1h-1v2h-2v-1h-1v1h-3v-1h-1v-1h-1v3h-1v-2h-1v1h-1v-1h-2v1h-1v-2h-2v1h-2v1h-4v-1h-1v1h-1v-1h-1v1h-1v-1h-1v1h-3v-1h-1v1h-1v-1h-10v1h-1v-1h-1v1h-4v1h-1v-1h-1v2h-1v-2h-1v-1h-1v1h-1v1h-1v-2h-2v1h-1v-1h-2v-1h-1v2h-2v-1h-1v1h-2v-1h-2v1h-2v-1h-1v1h-1v-1h-1v1h-1v-1h-2v1h-3v-1h-2v1h-1v-1h-1v1h-1v-1h-1v1h-1v-1h-5v1h-1v-1h-3v-1h-1v1h-1v1h-2v-1h-6v-1h-1v1h-2v1h-3v-1h-1v1h-2v1h-1v-1h-5v1h-1v-2h-1v1h-2v-1h-5v1h-1v-1h-1v1h-1v-1h-2v1h-1v-1h-3v1h-2v-1h-6v3h-1v-4h-1v1h-1v-1h-1v1h-3v-1h-1v1h-6v-1h-1v1h-3v-1h-1v1h-1v-1h-1v1h-2v-1h-1v2h-5v-1h-8v-1h-1v1h-1v-1h-1v1h-2v1h-1v-1h-3v1h-1v-1h-2v1h-3v-1h-1v-1h-1v1h-5v1h-1v-1h-1v1h-1v1h-1v-2h-1v1h-1v-1h-2v1h-2v-1h-1v1h-2v-1h-3v1h-4v1h-1v-1h-2v-1h-1v1h-2v-1h-3v1h-2v-1h-1v1h-1v-1h-1v1h-3v-2h-1v1h-1v-1h-1v2h-2v-1h-1v2h-2v-1h-1v1h-1v-1h-2v2h-1v-2h-2v3h-1v-3h-1v1h-1v-1h-1v1h-1v-1h-2v-2h-1v1h-1v1h-1v-1h-1v1h-1v-1h-1v1h-7v-1h-1v1h-5v-1h-2v1h-2v1h-1v-1h-1v-1h-1v1h-2v-1h-1v1h-1v-1h-1v1h-2v-1h-4v1h-2v-1h-1v2h-1v-2h-5v-1h-1v1h-3v1h-1v-1h-2v1h-1v-1h-7v1h-1v-1h-1v1h-2v-1h-4v1h-1v-1h-1v2h-1v-2h-4v1h-1v-1h-3v1h-1v-1h-1v-1h-1v3h-1v-2h-1v1h-1v-1h-1v1h-1v-1h-2v1h-1v-1h-7v1h-1v-2h-1v1h-2v-1h-1v1h-2v1h-1v-1h-14v-1h-1v1h-1v-1h-1v1h-4v-1h-1v1h-1v-1h-1v1h-2v1h-1v2h-1v-2h-3v-2h-1v1h-7v-1h-1v1h-1v1h-2v-1h-4v1h-2v-1h-1v1h-1v-1h-1v1h-3v-1h-4v1h-1v-1h-1v1h-1v-1h-1v1h-1v-1h-6zM277 515h1v1h1v-1h1v2h1v-1h1v-1h1v2h1v-1h4v-1h1v2h3v-1h3v1h1v-1h7v1h1v-1h4v1h2v-1h1v1h1v-1h1v-1h2v2h1v-1h2v1h1v-1h1v1h3v-1h2v1h1v-1h5v1h1v-1h2v1h2v-1h4v1h1v-1h4v1h1v-2h1v1h2v-1h1v2h1v-2h1v1h1v1h1v-1h5v1h1v-1h1v1h2v-1h2v1h1v-1h1v1h1v-1h1v1h1v-1h1v1h6v-1h2v1h7v-1h1v1h5v-1h1v1h2v-1h3v1h1v-1h2v1h1v-1h3v1h2v-1h1v1h1v-1h4v-1h1v1h1v1h1v-1h1v1h1v-1h2v1h1v-1h1v1h2v-1h5v1h2v-1h2v1h3v-1h1v1h1v-1h2v1h1v-1h1v1h4v-1h2v1h2v-1h1v1h1v-1h1v1h1v-1h1v1h1v-1h3v-1h1v1h3v1h1v-1h3v1h1v-1h1v1h1v-1h2v-1h1v1h2v1h1v-1h1v1h1v-1h2v1h1v-1h1v1h1v-2h1v1h6v-1h3v1h5v-1h1v1h1v1h1v-1h3v1h1v-1h2v1h3v-1h3v1h2v-1h6v1h1v-1h1v1h1v-1h4v-1h1v2h1v-1h3v1h1v-1h3v-1h1v-1h1v1h2v2h1v-2h2v1h1v-3h1v1h1v1h1v-3h1v1h1v1h1v1h2v1h1v-1h1v1h3v1h1v-2h1v1h3v1h1v-1h1v1h1v-1h1v1h2v-1h1v1h1v-1h4v1h1v-1h2v1h1v-1h1v1h1v-1h1v1h1v-1h1v1h6v-1h1v1h1v-1h3v1h1v-1h1v1h1v-1h3v1h1v-1h1v1h1v-1h2v1h1v-1h2v-1h1v1h2v-1h4v2h1v-2h2v1h1v-1h1v1h1v1h1v-1h1v-1h1v2h2v-1h2v-1h1v-1h1v2h4v1h3v-1h1v1h1v-1h1v1h1v-1h4v1h3v-1h1v-1h2v2h10v-1h1v1h3v-1h1v1h3v-1h1v1h2v-1h2v1h1v-1h4v1h1v-1h5v1h2v-2h1v2h1v-1h5v1h2v-1h2v-1h1v2h1v-1h2v-1h1v2h1v-1h2v-1h1v1h4v1h1v-1h1v-1h1v2h1v-1h9v1h1v-1h2v-1h1v2h1v-2h1v2h2v-3h1v3h1v-1h1v1h1v-1h3v1h2v-2h1v1h4v1h1v-2h2v1h2v-1h1v1h1v-1h1v1h2v-1h1v2h2v-2h2v2h1v-1h4v1h1v-1h4v-1h1v1h1v-1h1v1h3v1h2v-1h1v1h1v-2h1v1h2v1h1v-1h1v-1h3v2h1v-1h2v1h1v-1h1v1h2v-1h2v1h2v-1h7v1h4v-1h5v1h1v-1h2v1h1v-1h2v1h1v-1h1v1h2v-1h4v-1h1v1h7v-1h2v2h1v-2h1v1h2v-2h1v2h2v1h1v-1h1v-1h2v2h1v-1h1v1h1v-1h1v1h3v-1h1v1h1v-1h1v1h5v-1h2v-1h1v1h1v1h2v-1h1v1h1v-1h1v1h1v-1h1v1h2v-1h1v1h1v-1h1v1h5v-1h1v-1h1v2h2v-1h3v1h1v-1h1v1h1v-1h1v1h1v-1h1v1h2v-2h3v1h1v1h1v-1h2v1h2v-1h2v1h2v-2h1v1h2v1h6v-3h1v3h2v-2h1v2h3v-2h1v2h1v-1h1v-1h1v2h1v-1h3v1h3v-1h4v1h1v-1h1v-1h1v-1h1v2h3v1h2v-2h1v1h2v-1h3v2h1v-1h3v-1h1v-1h1v1h1v1h1v-4h1v1h1v3h1v-1h2v-1h1v-1h1v2h2v1h1v-1h3v1h2v-1h1v2h1v-1h4v1h2v-1h1v-2h1v2h2v1h1v-1h2v-1h1v1h1v1h1v-1h4v-1h1v2h2v-1h1v1h1v-1h2v1h1v-1h1v1h3v-1h1v1h1v-1h2v1h2v-1h3v1h1v-1h1v1h1v-1h3v1h1v-1h3v-2h1v2h2v1h1v-2h1v1h1v-1h1v1h3v-2h2v2h2v-1h2v-1h2v2h2v-1h1v1h1v-2h1v2h2v1h1v-2h1v1h2v1h1v-1h1v1h2v-1h1v1h1v-1h1v1h3v-1h1v1h7v-1h1v1h1v-2h1v1h1v1h1v-1h1v-1h3v2h2v-1h3v1h2v-1h1v-1h1v1h1v1h1v-2h1v2h1v-1h1v1h1v-1h3v-1h2v1h1v-1h2v2h2v-1h1v1h1v-1h2v1h3v-1h1v1h1v-1h2v1h3v-1h2v1h2v-1h3v1h2v-1h1v1h1v-2h1v2h1v-1h3v1h1v-1h1v1h2v-1h1v-1h1v1h1v-1h2v1h8v-2h1v2h2v-1h1v1h1v1h2v-1h4v1h3v-1h1v-1h1v-1h1v1h1v1h2v-1h1v2h2v-1h1v1h1v-1h2v-1h1v1h6v-2h1v2h1v1h1v-1h3v-1h1v2h2v-1h2v1h1v-1h2v-1h1v1h3v1h1v-1h2v1h1v-2h2v1h1v-1h1v1h1v-1h1v2h1v-1h2v1h1v-1h3v-1h1v1h3v1h2v-2h1v2h1v-2h3v1h1v-1h1v1h3v-1h1v2h1v-1h1v-1h1v1h2v-1h1v1h2v1h4v-1h2v1h1v-1h1v1h1v-1h1v1h1v-1h1v1h1v-2h1v1h2v1h4v-1h4v1h1v-1h2v1h4v-1h2v-1h1v-1h1v1h1v2h3v-1h2v1h4v-1h5v-1h2v1h2v1h1v-1h2v1h1v-1h1v1h1v-1h2v1h1v-1h1v1h1v-2h2v1h3v1h2v-1h2v1h1v-1h2v1h2v-1h1v1h1v-1h1v1h2v-1h1v1h3v-1h1v-1h1v1h1v1h10v-1h1v1h1v-1h1v1h3v-1h4v1h1v-1h4v1h1v-3h1v3h2v-1h5v1h1v-1h1v1h3v-2h1v1h2v-1h1v2h1v-1h1v1h1v-1h1v-1h1v2h2v-1h1v4h-1v1h-4v-1h-2v1h-2v-1h-3v2h-1v-1h-1v1h-1v-1h-6v-1h-1v1h-1v-1h-1v1h-2v2h-1v-1h-1v-2h-1v1h-1v1h-1v-1h-4v-1h-1v1h-1v-1h-1v1h-2v-1h-2v1h-2v-1h-5v1h-2v-1h-1v1h-2v-1h-1v1h-2v-1h-5v1h-2v-1h-3v1h-2v-1h-1v1h-1v-1h-1v1h-2v-1h-1v1h-2v-1h-2v2h-1v-2h-1v1h-3v-1h-1v1h-4v1h-1v-1h-2v1h-1v-1h-1v-1h-3v1h-2v-1h-1v1h-2v-1h-1v1h-1v-1h-2v1h-1v1h-1v-1h-1v1h-2v-2h-2v1h-2v-1h-4v1h-5v-1h-1v1h-3v-1h-1v1h-7v-1h-3v1h-2v-1h-1v1h-3v-1h-1v1h-3v1h-1v-1h-1v2h-1v-1h-2v-1h-1v1h-1v-1h-5v-1h-1v1h-1v-1h-1v1h-3v-1h-1v1h-3v-1h-1v1h-1v-1h-1v1h-4v-1h-2v1h-2v-1h-1v1h-3v-1h-1v1h-2v-1h-2v1h-1v-1h-1v1h-5v1h-1v-1h-3v-1h-1v2h-1v-1h-1v-1h-2v1h-1v1h-1v-1h-4v1h-1v-1h-2v1h-1v-1h-1v-1h-1v1h-4v-1h-1v1h-1v-1h-1v1h-1v-1h-1v1h-3v1h-1v-1h-2v-1h-2v1h-3v-1h-3v1h-2v-1h-1v1h-1v1h-2v-1h-4v-1h-1v1h-5v-1h-1v1h-3v-1h-4v1h-1v-1h-1v1h-1v-1h-2v1h-1v-1h-1v1h-6v-1h-1v1h-4v-1h-1v1h-1v1h-1v-1h-1v1h-2v-1h-6v-1h-1v1h-1v-1h-4v1h-3v-1h-1v1h-3v1h-2v-1h-1v-1h-6v1h-1v-1h-1v1h-1v-1h-3v1h-1v-1h-2v1h-2v-1h-7v1h-2v1h-1v-1h-2v1h-2v1h-1v-1h-2v1h-1v-1h-2v-2h-1v1h-4v-1h-1v1h-2v1h-7v-1h-2v1h-1v1h-1v-3h-1v1h-6v-1h-2v2h-1v-1h-1v-1h-1v1h-2v1h-1v-1h-1v-1h-2v1h-4v-1h-1v1h-1v-1h-1v2h-1v-1h-5v-1h-1v1h-1v-1h-3v1h-3v1h-1v-2h-1v2h-1v-1h-1v1h-1v-1h-4v-1h-1v2h-1v-1h-4v1h-3v1h-2v-1h-2v1h-2v3h-1v-2h-1v-1h-2v-2h-2v2h-1v-3h-2v1h-1v-1h-1v2h-1v1h-1v-2h-3v1h-1v-1h-1v1h-1v1h-1v-2h-1v1h-1v-1h-1v-1h-1v1h-3v-1h-1v1h-1v-1h-3v1h-2v-1h-2v1h-1v-1h-4v1h-2v-1h-1v1h-4v-1h-1v1h-1v-1h-1v1h-4v-1h-1v1h-3v-1h-2v2h-1v-1h-1v-1h-1v3h-1v-1h-1v1h-1v-2h-2v-1h-1v1h-4v-1h-1v1h-5v-1h-1v1h-1v-1h-1v1h-3v-1h-1v1h-1v-1h-1v1h-2v-1h-1v1h-1v-1h-2v1h-2v-1h-4v2h-1v-1h-3v-1h-5v1h-2v-1h-5v1h-2v-1h-1v1h-1v-1h-2v1h-1v-1h-1v1h-1v-1h-1v1h-2v1h-2v-1h-1v-1h-1v1h-3v-1h-1v1h-1v-1h-1v1h-5v1h-1v-1h-6v-1h-1v1h-1v-1h-2v1h-1v-1h-1v1h-6v-1h-3v1h-3v-1h-4v1h-3v-1h-1v1h-3v2h-1v-1h-2v-1h-1v1h-1v-1h-3v-1h-1v1h-1v1h-1v-1h-1v-1h-3v1h-1v2h-1v-1h-2v-1h-2v-1h-1v1h-1v1h-2v-1h-1v-1h-1v1h-1v3h-1v-3h-3v1h-1v-1h-2v-1h-1v2h-1v-1h-2v1h-1v-1h-3v1h-1v-1h-1v-1h-1v1h-6v-1h-3v1h-1v-1h-2v1h-6v-1h-1v1h-1v-1h-1v1h-1v-1h-1v1h-1v1h-2v-1h-1v-1h-2v1h-2v-1h-1v1h-2v1h-2v1h-1v-3h-2v2h-1v-1h-1v-1h-1v1h-3v-1h-1v1h-1v-1h-1v1h-1v-1h-2v1h-1v-1h-1v1h-3v-1h-1v1h-1v-1h-1v1h-3v-1h-1v1h-5v-1h-1v1h-4v-1h-1v1h-1v-1h-3v1h-1v-1h-2v1h-1v-1h-6v1h-3v-1h-1v1h-5v-1h-4v1h-2v-1h-2v1h-1v-1h-1v1h-2v-1h-1v1h-5v1h-1v-2h-1v2h-1v-1h-6v-1h-1v1h-1v3h-1v-3h-1v-1h-1v3h-1v-1h-1v-1h-1v1h-2v-1h-4v-1h-2v1h-2v-1h-2v1h-1v-1h-2v1h-1v-1h-1v1h-2v-1h-2v1h-1v-1h-1v1h-3v-1h-2v1h-1v-1h-3v1h-1v-1h-3v1h-1v-1h-1v1h-1v-1h-3v1h-2v-1h-2v1h-3v-1h-2v2h-2v-1h-2v-1h-1v1h-2v1h-1v-1h-1v1h-1v1h-1v4h-1v-4h-1v1h-1v-1h-1v-1h-1v-1h-1v2h-1v-1h-1v-1h-3v1h-1v1h-1v-2h-4v1h-1v-1h-3v-1h-2v1h-1v-1h-4v1h-1v1h-2v-1h-4v-1h-2v2h-1v-1h-1v1h-1v-1h-2v-1h-2v1h-6v-1h-1v1h-1v-1h-1v1h-5v1h-1v-1h-1v1h-2v-2h-1v1h-8v-1h-1v1h-3v-1h-1v1h-4v-1h-1v1h-3v1h-1v-1h-2v1h-1v-2h-2v4h-1v-4h-1v1h-8v-1h-4v1h-3v-1h-1v1h-1v-1h-1v1h-2v-1h-1v1h-1v-1h-4v1h-2v2h-1v-2h-8v1h-1v-1h-1v-1h-2v1h-3v-1h-5v1h-1v-1h-2v2h-1v-2h-1v1h-2v-1h-3v2h-1v-1h-3v-1h-2v1h-2v-1h-4v1h-1v-1h-1v2h-1v-2h-10v1h-1v-1h-3v1h-1v-1h-2v1h-1v-1h-1v1h-1v-1h-2v1h-1v-1h-1v1h-2v-1h-1v2h-1v-1h-2v-1h-2v1h-6v1h-1v-1h-2v-1h-4v1h-1v1h-1v-1h-6v-1h-1v1h-2v-1h-1v1h-1v-1h-1v2h-1v-2h-2v2h-1v-1h-2v-1h-1v1h-4v2h-1v-2h-4v-1h-1v1h-1v-1h-4v1h-3v-1h-1v1h-3v1h-1v-1h-3v1h-1v-1h-3v1h-1v-1h-5v-1h-1v1h-1v1h-2v-2h-1v2h-1zM277 547h1v-1h1v1h1v-1h1v-1h1v1h4v1h2v-1h1v1h1v-1h1v-1h1v1h1v1h2v-1h2v1h1v-2h1v1h1v1h1v-1h1v1h1v-1h1v1h1v-1h4v1h2v-1h2v1h7v-1h1v1h1v-2h2v-1h2v1h1v1h1v-3h1v1h2v2h5v1h2v1h1v-2h1v1h2v-1h2v1h1v-1h1v2h1v-1h1v-1h1v1h3v-2h1v1h2v-2h1v1h2v1h3v-1h1v2h1v-1h1v1h1v-1h2v1h1v-1h1v2h1v-1h1v-1h1v1h3v-1h2v1h1v-2h1v3h1v-1h2v-1h2v1h1v-2h1v2h3v-1h3v2h1v-1h10v-1h1v1h2v-2h1v1h1v-1h1v2h2v-1h1v1h1v-1h1v1h2v-1h1v2h1v-1h2v-1h2v1h6v1h1v-1h7v1h1v-1h1v-1h1v1h2v-2h1v2h1v-3h1v2h4v-1h1v3h1v-1h2v1h1v-1h2v-1h1v1h4v-1h1v1h7v1h1v-1h2v-1h1v1h6v-1h1v1h1v1h1v-1h1v1h1v-3h1v2h1v-1h1v1h1v-1h1v-1h5v-1h1v1h1v1h1v-1h2v1h1v-1h1v-1h1v1h2v1h2v1h1v-1h1v-1h1v-1h2v1h1v2h2v-1h2v1h1v-1h2v1h5v-1h1v1h2v-2h1v1h2v2h1v-1h3v-1h1v1h1v-1h1v1h3v1h1v-1h1v-1h1v1h1v-1h1v1h2v-1h1v1h3v-1h6v1h1v-1h2v-2h1v3h1v-1h1v1h2v-1h2v1h1v-1h3v1h1v-2h1v2h3v-2h1v1h8v1h1v1h1v-2h2v1h1v-1h2v1h2v-1h2v-1h1v1h1v1h1v1h1v-1h1v1h1v-1h2v-1h1v1h1v-1h1v1h8v-2h1v2h1v1h1v-1h1v1h1v-2h1v1h2v-1h1v1h1v-1h3v1h1v-2h1v1h1v-1h2v1h3v1h2v-1h2v1h9v-1h1v1h2v-1h1v1h1v-2h1v2h2v1h1v-1h12v1h2v-1h4v1h1v-1h3v-1h3v1h1v1h1v-1h7v-1h1v1h1v-1h3v1h3v-2h1v1h2v2h1v-2h3v1h1v-1h1v1h1v-1h2v1h4v-1h1v1h3v1h1v-2h1v1h1v1h1v-1h2v-1h1v-1h1v2h1v-1h1v1h2v-1h2v1h4v-1h1v1h4v-1h1v1h2v-1h1v1h1v-1h2v1h1v1h1v-1h1v-1h4v1h1v-1h1v1h1v-1h4v1h1v-1h1v1h2v-1h3v-1h2v1h2v-1h1v2h2v-1h2v1h1v-2h1v1h1v-1h1v1h1v1h1v-1h1v1h1v-1h4v1h3v-1h2v1h1v-1h1v1h3v-1h1v1h12v-1h2v1h1v-1h4v1h2v1h1v-1h3v-1h3v1h1v-1h2v-2h1v3h1v-1h4v1h1v-1h2v1h2v-1h1v1h1v-1h1v1h6v-1h3v1h2v-2h1v1h1v1h2v1h1v-1h8v1h1v-1h5v1h1v-1h11v1h1v-1h1v1h1v-2h1v1h5v1h1v-2h1v1h1v1h1v-3h1v2h3v-3h1v3h5v-1h1v1h2v-1h2v1h1v1h1v-1h1v1h1v-1h3v-1h1v1h2v-1h1v1h2v-1h1v1h3v-1h1v1h1v1h1v-1h7v-1h1v1h1v-2h1v1h1v1h4v-1h1v1h7v1h1v-1h2v-1h1v1h1v-1h6v1h1v-1h2v1h3v-1h2v1h2v-2h1v1h1v1h1v-2h1v1h2v1h1v-1h1v1h1v-1h2v1h1v-1h1v1h1v-1h1v1h1v-1h1v1h1v-1h1v1h3v-1h3v2h1v-2h3v1h6v-1h2v1h1v-1h3v1h1v-1h2v1h1v-1h1v1h2v-1h1v2h1v-2h1v1h5v-1h1v-1h1v1h6v1h4v-1h1v1h1v-1h1v1h3v-1h2v1h3v-1h3v1h5v-1h1v1h4v-1h1v1h1v-1h1v1h11v1h1v-2h1v2h1v-1h2v-1h1v-1h4v1h3v1h1v-2h1v2h1v-1h1v2h1v-1h2v-1h1v2h1v-1h4v-1h1v1h1v-1h2v1h3v-1h2v1h2v-1h1v1h8v-1h1v1h1v-1h1v1h2v-1h1v1h2v1h1v-1h2v1h1v-1h1v-1h2v1h1v-2h1v1h2v-1h1v1h1v-1h3v2h1v-1h2v1h4v-1h1v1h1v-1h1v1h4v-2h1v1h1v1h3v-1h1v-1h1v2h3v-1h1v1h1v-2h1v2h1v-1h1v1h4v-1h1v1h7v-1h1v-1h3v1h3v1h5v-1h1v1h3v-1h1v1h1v-1h1v1h1v-1h1v1h1v1h1v-1h1v1h1v-1h1v-1h3v1h1v-1h4v-1h1v2h1v-3h1v1h1v-1h1v2h1v-1h3v2h1v-1h3v-2h1v2h2v1h2v-2h1v2h1v-2h1v1h3v1h1v-1h2v1h1v-1h3v1h1v-1h1v1h1v-1h2v2h1v-1h2v-1h2v-1h1v1h1v-1h1v1h1v1h1v-1h2v1h2v-1h1v1h1v-1h1v1h1v-1h3v1h2v-1h1v1h1v1h1v-1h2v-1h1v1h3v-1h1v1h2v-1h2v1h3v-1h1v1h1v-1h1v1h4v-1h1v1h3v-1h1v1h2v-1h1v1h2v-1h1v1h1v-1h1v1h5v-1h1v1h2v-2h1v1h3v1h9v-1h1v1h2v-1h1v1h4v-1h1v1h3v1h1v-1h1v1h1v-1h4v1h1v-1h1v1h1v-1h6v1h1v-1h1v1h2v-2h1v1h4v-1h2v-1h1v1h1v1h3v-1h1v1h1v1h1v-2h1v2h1v-2h3v1h1v3h-2v1h-6v-1h-1v1h-2v-1h-1v2h-2v-1h-1v2h-1v-2h-1v-1h-1v1h-1v-1h-1v1h-8v2h-1v-2h-6v-1h-2v2h-1v-1h-1v-1h-1v1h-1v-1h-3v1h-1v-1h-1v1h-3v-1h-1v1h-3v1h-1v-1h-1v-1h-1v1h-2v-1h-1v2h-1v-1h-1v-1h-1v1h-1v1h-1v-1h-4v-1h-1v1h-1v-1h-1v1h-1v-1h-1v1h-1v-1h-1v1h-5v-1h-3v2h-3v-2h-1v1h-1v-1h-2v1h-7v1h-1v-1h-3v-1h-1v1h-1v-1h-1v1h-1v-1h-1v1h-2v2h-1v-1h-1v-2h-1v2h-1v-2h-1v1h-1v-1h-1v1h-2v1h-1v-1h-4v-1h-1v1h-2v2h-1v-1h-1v1h-2v-1h-2v-1h-4v1h-1v-1h-2v-1h-1v1h-4v-1h-1v2h-1v1h-1v-1h-1v-1h-5v1h-4v-1h-1v2h-1v-2h-2v1h-1v-2h-1v3h-1v-1h-3v1h-1v-1h-1v1h-1v-1h-2v-1h-1v1h-1v1h-1v-2h-1v1h-1v-1h-5v-1h-1v1h-2v-1h-2v3h-1v-3h-1v1h-3v1h-1v-2h-2v1h-2v1h-1v-1h-3v1h-2v1h-1v-1h-1v-1h-1v-1h-1v1h-2v1h-1v-1h-1v1h-1v-1h-2v-1h-1v1h-2v1h-1v-1h-4v1h-1v-1h-1v-1h-1v1h-2v-1h-1v1h-5v-1h-1v1h-1v-1h-1v1h-1v-1h-1v1h-1v-1h-1v1h-5v1h-1v-1h-1v1h-1v1h-4v-1h-1v-1h-4v-1h-1v1h-1v-1h-1v1h-2v-1h-1v2h-1v-2h-1v1h-3v-1h-1v1h-6v1h-1v1h-1v-3h-1v2h-1v-1h-1v1h-1v-1h-1v1h-1v-1h-5v-1h-1v1h-4v-1h-1v1h-2v-1h-2v1h-1v-1h-2v1h-2v3h-1v-3h-1v-1h-1v1h-1v2h-1v-2h-1v1h-4v-1h-5v-1h-3v1h-4v1h-1v-1h-2v-1h-1v1h-4v1h-1v-2h-1v2h-1v-1h-3v-1h-1v4h-2v-3h-4v1h-2v-1h-1v1h-1v-1h-1v1h-1v-1h-1v1h-2v-1h-1v1h-1v-1h-4v1h-1v-1h-6v1h-1v-1h-1v-1h-4v1h-5v1h-1v-2h-1v1h-1v-1h-1v2h-1v-1h-4v-1h-2v1h-1v-1h-1v1h-4v1h-1v-1h-3v-1h-1v1h-6v1h-1v-1h-5v1h-1v-1h-1v1h-1v-1h-4v1h-2v-1h-3v1h-1v-1h-7v1h-1v-1h-4v-1h-1v1h-2v1h-1v-1h-1v-1h-1v1h-6v-1h-1v1h-4v-1h-3v1h-2v-1h-1v1h-1v1h-1v-1h-2v-1h-2v1h-1v-1h-3v1h-1v1h-1v-2h-1v1h-6v-1h-2v1h-3v1h-1v-1h-7v1h-1v-1h-1v-1h-1v1h-2v1h-1v-1h-5v-1h-2v1h-3v-1h-2v1h-1v-1h-5v1h-1v-1h-4v1h-1v-1h-2v1h-1v-1h-2v1h-1v-1h-1v1h-1v-1h-1v1h-3v-1h-2v1h-1v-1h-2v1h-2v-1h-1v2h-1v-1h-3v-1h-1v1h-2v-1h-1v1h-2v-1h-2v1h-1v1h-2v-1h-1v1h-1v-1h-2v1h-2v-1h-5v1h-2v-1h-4v-1h-1v2h-1v-2h-1v1h-2v1h-1v-1h-3v1h-4v-1h-2v-1h-1v1h-2v-1h-2v1h-7v-1h-1v1h-2v1h-1v-1h-3v1h-1v-1h-1v-1h-1v1h-2v-1h-1v1h-4v2h-1v-2h-3v1h-1v-1h-1v1h-4v1h-3v-2h-1v1h-2v-1h-7v2h-1v-1h-1v-1h-1v-1h-1v3h-1v-2h-4v-1h-2v1h-3v-1h-1v1h-3v-1h-1v2h-1v-1h-2v2h-1v-3h-1v1h-6v1h-4v-1h-4v-1h-2v1h-1v-1h-1v1h-1v-1h-2v1h-1v-1h-1v1h-3v1h-1v-2h-1v1h-1v1h-1v-1h-1v-1h-1v2h-1v-1h-12v1h-1v-2h-1v1h-9v-1h-1v2h-2v-1h-1v-1h-1v1h-1v-1h-3v1h-2v-1h-1v1h-1v-1h-2v1h-1v1h-1v-2h-2v1h-1v-1h-3v1h-2v-1h-1v1h-3v-1h-2v1h-1v-1h-1v1h-13v-1h-1v1h-1v1h-1v1h-1v-2h-1v1h-1v-1h-2v-1h-1v2h-1v-1h-5v1h-1v-1h-1v-1h-1v1h-1v-1h-2v1h-2v-1h-1v1h-2v1h-1v-1h-4v-1h-1v1h-4v-1h-1v1h-9v-1h-2v1h-1v1h-1v-1h-1v-1h-1v1h-1v1h-1v-1h-4v1h-1v1h-1v-2h-2v1h-1v-1h-1v1h-1v1h-1v-2h-4v1h-3v-1h-3v1h-1v-1h-5v1h-3v-1h-4v1h-1v-1h-3v2h-1v-2h-4v-1h-1v1h-4v-1h-4v1h-2v-1h-1v1h-11v-1h-1v1h-2v1h-1v3h-1v-3h-2v-1h-5v1h-1v1h-1v-1h-1v1h-1v1h-1v-1h-3v1h-1v1h-1v-2h-2v-1h-1v-2h-1v1h-3v-1h-1v1h-5v-1h-1v1h-2v1h-1v-2h-6v1h-4v-1h-2v1h-1v-1h-2v1h-2v-1h-2v1h-1v-1h-1v1h-1v-1h-1v1h-6v1h-2v-1h-6v-1h-1v1h-3v-1h-1v1h-3v1h-1v-1h-5v-1h-1v1h-4v-1h-1v1h-1v-1h-1v1h-3v-1h-1v1h-1v-1h-1v1h-1v1h-2v-1h-3v2h-1v-2h-1v-1h-2v1h-1v-1h-2v1h-5v1h-1v-1h-5v-1h-2v1h-1v-1h-1v1h-1v1h-1v-1h-1v2h-1v-1h-1v-1h-7v-1h-1v1h-5v1h-1v-1h-2v1h-1v-1h-2v1h-2v1h-1v-1h-2v-1h-4v1h-1v-1h-1v3h-1v-3h-6v-1h-2v1h-1v1h-2v-1h-2v2h-3v1h-1v-2h-1v2h-2v-1h-1v1h-1v-3h-1v-1h-1v1h-5v1h-2v-1h-6v1h-1v-1h-1v1h-1v-1h-1v1h-1v2h-1v-2h-1v-1h-4v1h-1v1h-1v-2h-4v1h-1v1h-1v-2h-6v1h-5v-1h-2zM277 577h4v-1h1v-1h2v2h1v-1h1v-1h2v1h1v1h1v-1h5v1h1v-1h1v1h1v-1h2v-1h1v2h6v-1h1v2h1v-2h2v2h1v-1h2v1h1v-1h3v-1h1v1h5v-1h1v1h2v-1h1v1h2v-1h1v1h1v-1h2v1h2v-1h1v2h1v-1h1v1h1v-1h2v1h2v-1h3v-2h1v2h3v1h1v-2h2v-1h1v1h3v-2h1v1h1v1h1v1h1v-1h1v1h1v-1h2v1h1v-1h1v1h1v-1h2v1h1v-1h1v1h1v-1h4v1h2v1h1v-2h1v1h1v1h1v-1h1v-1h5v1h1v-1h1v-1h1v1h1v1h1v-1h2v1h1v-1h1v1h4v-1h1v1h2v-1h4v1h1v-1h1v1h1v-1h1v1h3v1h1v-1h2v-1h2v-3h1v3h3v1h3v1h1v-1h1v1h1v-1h1v-1h1v1h1v-1h1v1h9v-2h1v2h1v-3h1v3h2v-1h1v1h2v1h1v-2h1v1h3v1h1v-1h1v-1h2v1h1v-1h1v1h2v-2h1v-1h1v3h1v-2h1v2h3v1h1v-1h1v-1h1v1h5v1h1v-1h6v-1h1v2h1v-1h7v1h1v-2h1v1h2v1h2v-1h3v-4h1v4h2v1h1v-1h5v1h1v-1h2v-1h1v1h2v1h1v-1h11v1h1v-1h6v1h1v-2h1v1h5v-1h1v1h1v1h1v-1h5v1h2v-1h4v1h1v-1h6v1h1v-1h2v-1h2v1h2v1h1v-2h1v1h7v-1h1v1h5v-2h1v2h1v-1h3v1h1v-1h1v-1h3v-1h1v2h1v-1h2v1h3v1h1v-1h1v-2h1v2h1v-1h3v-5h1v4h2v1h2v1h1v1h4v1h1v-1h2v1h1v-2h4v1h5v-1h1v1h1v-1h1v1h2v1h1v-1h3v-1h2v1h2v1h1v-2h1v-1h1v1h3v1h1v1h1v-1h1v-1h1v1h2v-1h1v1h1v-1h5v1h1v-1h2v1h1v-1h2v1h1v-1h2v1h2v-1h2v1h1v1h1v-1h1v-1h1v1h3v-2h1v2h6v1h1v-1h3v1h3v-1h9v1h1v-1h2v1h1v-1h3v1h1v-1h2v1h1v-2h1v1h1v-1h1v1h1v-2h1v2h2v-2h1v2h1v1h1v-1h9v1h1v-1h3v1h1v-1h1v1h1v-2h1v1h1v-1h1v1h5v1h1v-1h1v1h1v-1h9v1h1v-1h4v1h1v-2h1v-1h1v2h1v-1h1v1h6v-1h1v1h1v1h1v-2h1v1h2v1h1v-1h1v-1h1v1h1v-1h1v1h5v-1h1v-1h1v1h1v1h6v-1h2v1h1v-1h3v1h3v-1h4v1h3v-1h1v1h2v-1h1v1h1v-1h1v1h4v1h1v-1h3v1h1v-1h3v-1h1v1h2v-1h1v1h3v-1h1v1h1v1h1v-2h2v2h1v-1h2v-1h1v1h1v-3h2v-1h1v3h1v-2h1v-1h1v2h1v1h1v-2h1v1h3v-1h1v3h2v-1h2v1h1v-1h1v1h1v-1h5v1h1v-1h1v1h3v-1h1v1h2v-2h1v1h1v1h1v1h2v-1h5v-1h1v1h1v-1h2v1h3v-2h1v1h1v1h2v1h1v-1h1v1h1v-1h2v-1h1v1h2v-1h1v1h1v1h1v-1h5v-1h2v1h8v1h1v-2h1v1h1v-1h1v1h4v-1h1v-1h1v-1h1v2h2v1h1v-1h2v-1h1v1h1v-3h1v4h1v-1h2v1h1v-1h1v1h2v-1h1v1h1v1h1v-1h1v1h1v-2h1v1h2v1h1v-1h2v1h1v-1h1v1h1v-1h3v1h1v-1h2v1h1v-1h3v1h2v-1h4v1h1v-1h8v-1h1v1h5v-1h1v2h1v-3h2v1h2v-1h1v2h9v1h1v-2h1v1h6v1h1v-1h1v1h1v-1h2v1h1v-1h2v-1h1v1h1v1h1v-1h1v-1h2v1h6v1h2v-1h4v-1h4v-1h1v1h3v-2h1v1h1v-1h1v1h1v1h2v-1h1v1h2v-1h1v-1h1v2h4v1h1v-1h1v-1h3v2h1v-1h2v-1h1v1h1v1h2v-1h1v1h4v-1h1v1h2v1h1v-2h1v1h12v-1h1v1h1v1h1v-1h1v-1h1v1h4v-2h1v2h1v-1h2v1h4v-1h1v1h2v-1h1v1h4v-2h1v1h2v-1h2v1h1v-2h1v2h1v-1h1v1h1v-1h2v1h1v1h2v-1h1v1h2v1h1v-2h2v1h6v-1h1v1h1v-1h1v2h1v-1h2v1h1v-1h1v1h1v-1h5v-1h1v2h2v-1h3v1h2v-1h1v1h1v-1h1v1h2v-1h6v-1h1v-1h1v1h4v-1h1v2h1v-3h1v2h1v-1h1v1h1v1h2v-1h2v1h2v-1h1v1h6v1h1v-1h1v1h1v-2h1v1h4v1h1v-1h1v1h1v-1h1v1h1v-2h1v2h2v-1h6v1h2v-1h2v-1h1v1h3v1h1v-1h2v-1h1v1h7v-1h1v1h2v1h1v-1h1v-1h3v2h1v-1h2v-1h1v1h2v-1h1v1h1v-1h1v1h2v-1h3v-1h1v1h4v-1h1v2h2v-1h1v1h1v-1h1v1h3v-2h1v2h1v-1h1v1h1v-1h1v-1h1v1h2v-2h1v4h1v-1h1v-1h1v1h5v-1h2v1h4v-1h1v1h5v1h1v-1h1v-1h1v1h1v-1h1v1h3v1h1v-1h1v-1h2v2h1v-2h1v1h2v-1h2v1h1v-1h2v1h9v-1h1v1h1v-1h1v1h1v-1h1v1h6v-1h1v1h2v-1h3v1h1v-1h1v1h6v-2h1v1h1v-2h1v1h1v2h1v-1h1v-1h1v2h2v-1h1v1h1v-1h1v5h-1v1h-2v2h-1v-3h-1v1h-5v-1h-1v1h-1v-1h-1v1h-2v-1h-2v1h-2v-1h-1v2h-1v-1h-2v-1h-4v1h-1v-1h-2v1h-2v1h-1v-2h-1v1h-2v-1h-1v1h-2v-1h-1v1h-3v-1h-2v1h-1v-1h-1v1h-1v-1h-2v1h-1v-1h-3v1h-2v-1h-2v1h-1v-1h-1v1h-3v-1h-3v-1h-1v1h-2v1h-1v1h-1v-2h-2v1h-3v-1h-3v1h-2v-1h-1v1h-2v-1h-1v1h-1v-1h-2v1h-1v-1h-1v2h-1v-1h-1v-1h-1v2h-1v-1h-1v1h-1v-2h-1v-1h-1v2h-1v1h-1v-1h-3v-1h-1v2h-1v-1h-1v1h-4v-1h-3v-1h-2v1h-2v-1h-1v1h-2v-1h-1v1h-3v-1h-1v1h-1v-1h-5v1h-1v-1h-1v2h-1v-2h-1v1h-2v-1h-7v1h-2v1h-1v-1h-1v-1h-2v1h-1v-2h-1v1h-7v1h-1v-1h-6v-1h-1v1h-1v2h-1v-2h-1v1h-2v-1h-1v1h-1v-1h-5v1h-1v-1h-3v1h-1v1h-1v-2h-1v2h-1v-2h-1v2h-1v-1h-1v1h-1v-3h-1v3h-1v-1h-2v1h-1v-1h-3v-2h-1v1h-2v-1h-1v1h-3v-1h-1v1h-9v-1h-1v1h-4v1h-1v-2h-1v1h-4v1h-1v-1h-4v1h-1v-1h-6v1h-1v-1h-4v-1h-1v2h-1v-1h-1v2h-1v1h-1v-1h-2v1h-1v-1h-1v-1h-1v2h-1v-1h-3v-1h-3v-1h-3v1h-2v1h-1v-2h-2v1h-1v-1h-2v1h-1v-1h-3v1h-1v-1h-2v1h-1v-1h-4v1h-1v-1h-1v3h-1v-2h-1v2h-1v-2h-2v-2h-1v1h-1v1h-1v-1h-1v1h-2v-1h-3v-1h-1v1h-2v1h-2v1h-1v-2h-1v1h-1v-1h-1v1h-2v-1h-1v1h-1v-1h-1v1h-5v-1h-1v1h-4v1h-1v-1h-3v3h-1v-3h-1v1h-2v-1h-1v2h-1v-1h-1v1h-1v1h-1v-3h-2v-1h-1v-1h-1v2h-1v-1h-1v1h-1v-1h-1v1h-1v-1h-21v1h-3v-1h-2v1h-1v-1h-1v-1h-1v1h-1v1h-2v-1h-3v1h-1v-1h-1v2h-2v-2h-1v2h-1v-1h-3v-1h-4v-1h-1v2h-1v-1h-1v1h-1v-1h-1v1h-1v-1h-2v-1h-1v1h-2v1h-1v-1h-1v-1h-1v1h-1v-1h-2v1h-12v-1h-1v1h-5v-1h-1v1h-4v-1h-1v2h-6v1h-1v-1h-1v-1h-1v1h-4v1h-1v-1h-1v1h-3v-1h-2v1h-1v-1h-1v-1h-1v1h-5v-1h-2v3h-1v-2h-1v-1h-3v1h-1v-1h-1v1h-1v-1h-1v1h-1v-1h-1v-1h-1v1h-4v1h-1v-2h-1v1h-2v-1h-1v1h-2v1h-1v1h-1v-1h-1v1h-1v-2h-1v1h-1v1h-2v-2h-3v-1h-1v1h-3v1h-1v-1h-2v1h-2v-1h-1v1h-1v-1h-5v1h-2v-1h-2v1h-1v-1h-1v1h-2v-1h-2v1h-2v1h-1v-1h-1v2h-1v-1h-1v2h-1v-2h-1v1h-2v1h-1v-1h-1v2h-1v-1h-1v-3h-6v-1h-1v1h-3v-2h-1v1h-3v1h-2v-2h-1v1h-1v1h-2v-1h-9v1h-1v-1h-1v-1h-1v1h-5v-1h-2v1h-2v1h-1v-1h-3v2h-1v-1h-3v-1h-1v1h-1v-1h-2v1h-4v-1h-4v1h-1v-1h-3v-1h-1v2h-1v-1h-1v1h-1v-1h-1v1h-1v-1h-2v1h-1v-1h-6v1h-1v-1h-1v2h-1v-2h-2v2h-1v-2h-1v1h-1v-1h-5v-1h-1v1h-4v1h-1v-1h-12v-1h-1v1h-4v1h-2v-1h-4v1h-1v-1h-1v1h-1v-1h-1v1h-1v-1h-1v1h-2v-1h-2v-1h-1v2h-1v-1h-9v-1h-1v1h-2v-1h-1v1h-11v1h-1v-1h-1v-1h-1v2h-1v-1h-3v1h-3v-1h-6v1h-2v-1h-1v1h-1v-1h-2v1h-1v-1h-1v3h-1v-3h-1v1h-1v-1h-7v1h-1v-1h-1v-1h-1v2h-8v-1h-1v1h-1v-1h-1v1h-3v-1h-2v1h-1v-1h-2v-1h-1v1h-4v1h-1v-1h-1v1h-4v-1h-3v1h-1v-1h-2v2h-2v-1h-1v-1h-7v1h-1v-1h-1v1h-4v1h-1v-1h-1v2h-1v-2h-2v2h-1v-2h-4v1h-1v-1h-3v2h-1v-1h-3v-2h-1v2h-1v1h-1v-1h-1v1h-1v-1h-1v-1h-1v-1h-1v1h-3v-1h-1v3h-1v-2h-2v-1h-7v1h-1v-1h-2v-1h-1v2h-2v-1h-3v1h-1v-1h-3v1h-1v-1h-6v-1h-1v1h-8v1h-1v-1h-3v1h-1v-1h-6v1h-1v-1h-3v1h-1v1h-1v-1h-1v-2h-1v2h-1v-1h-2v1h-1v-1h-5v1h-1v-1h-3v1h-1v-1h-2v1h-1v-1h-1v1h-1v1h-2v-1h-1v-1h-1v1h-1v-1h-7v1h-1v-1h-13v1h-1v-1h-3v1h-2v-2h-1v1h-4v1h-1v-1h-1v1h-1v1h-1v-1h-5v-1h-4v1h-1v1h-1v-2h-1v1h-1v-1h-1v2h-1v-2h-2v1h-1v-2h-1v2h-2v-1h-3v1h-3v-1h-2v2h-1v-2h-11v-1h-1v2h-6v-1h-6v1h-6v-1h-1v1h-1v-1h-1v1h-1v-1h-1v1h-2v-1h-1v1h-1v-1h-2v1h-3v-1h-1v2h-1v-1h-1v1h-2v-1h-1v-1h-3v-1h-1v1h-1v1h-8v-1h-1v1h-2v1h-1v-1h-1v1h-1v-1h-5v-1h-1v1h-1v1h-1v-1h-1v1h-1v1h-1v-2h-2v1h-1v-1h-1v2h-1v-2h-1v-1h-3v1h-1v-2h-1v1h-1v1h-1v-2h-1v1h-5v1h-3v-1h-2v1h-1v-1h-2v1h-1v-1h-1v1h-3v-2h-2v1h-1v2h-1v-1h-1v-1h-1v1h-1v-2h-1v2h-2v-1h-3v1h-1v-1h-1v1h-1v1h-1v-2h-3v-1h-1v1h-1v1h-1v-1h-3v1h-1v-1h-3v1h-1v1h-1v-1h-4v1h-2v1h-1v-2h-3v2h-1v-2h-2v-1h-4zM277 607h1v1h1v-1h3v-1h2v1h6v1h1v-1h2v-1h1v2h3v-1h4v1h1v-1h1v1h3v-1h1v1h4v-1h2v1h7v-1h1v-1h1v1h1v1h3v-1h1v1h2v-1h2v-1h1v2h3v-1h2v1h2v-1h4v-2h1v1h1v1h5v-1h1v2h1v-1h2v1h1v-1h6v1h1v-1h1v1h2v-1h2v1h2v-1h1v1h2v-1h7v-1h1v1h2v1h2v-1h1v1h1v-1h3v1h2v-1h3v-1h1v1h1v-1h2v1h1v1h1v-3h1v3h1v-1h1v1h1v-1h1v-2h1v2h1v-1h2v-1h1v1h1v-1h1v1h1v-1h1v1h1v2h1v-2h1v1h1v-2h1v2h1v-1h3v2h2v-1h1v1h1v-1h6v-1h1v1h3v-1h1v1h5v-2h1v2h5v-1h1v2h1v-1h3v1h1v-1h3v1h1v-2h1v1h1v1h1v-1h1v1h1v-1h1v1h1v-1h2v1h1v-1h5v1h1v-1h1v-2h1v1h1v1h2v1h1v-2h1v1h4v1h2v-1h2v-1h1v2h1v-2h1v1h1v1h1v-2h1v1h3v1h1v-1h3v1h1v-1h2v1h2v-1h2v1h1v-1h1v1h1v-1h1v1h1v-1h2v1h2v-1h1v1h2v-1h1v1h1v-1h1v1h3v-1h1v1h3v-1h2v1h4v-2h1v1h1v-1h1v1h3v1h2v-1h1v1h1v-1h6v1h1v-1h2v1h1v-1h14v-1h1v-1h2v1h2v1h1v-1h1v-1h1v2h1v-1h3v1h3v-1h1v-2h1v1h1v2h1v1h1v-1h1v1h1v-1h4v-2h1v2h1v1h2v-1h5v-1h1v2h1v-1h1v-1h1v1h2v1h2v-1h2v-1h1v2h1v-1h2v-2h1v1h2v1h1v1h1v-1h3v-1h1v1h1v-1h1v1h5v1h1v-3h1v2h9v1h1v-2h2v2h1v-1h3v1h1v-1h5v-2h1v1h1v-1h1v1h1v-1h1v2h1v-1h3v-1h1v-1h1v3h1v-1h2v2h1v-1h3v1h1v-1h5v-1h4v1h2v-1h1v1h1v1h1v-1h1v1h1v-1h1v1h2v-1h2v1h2v-2h1v1h2v1h1v-1h1v-1h2v1h2v-1h1v2h1v-1h1v1h2v-1h1v1h1v-1h2v1h1v-1h2v1h2v-1h2v1h1v-1h1v1h1v-1h4v1h2v-1h1v1h2v-1h1v1h2v-1h1v1h1v-1h1v1h1v-1h5v-1h4v2h1v-1h4v1h1v-1h1v1h1v-1h1v1h1v-1h4v1h1v-1h3v1h1v-1h2v1h1v-1h2v1h1v-1h1v-1h1v2h1v-1h2v1h1v-1h2v-2h2v1h1v-2h1v2h3v-1h1v2h2v1h3v-1h2v1h1v-1h1v1h1v-1h4v1h1v-1h4v1h1v-1h3v1h1v-1h2v-1h1v2h2v-1h1v1h1v-1h6v-1h1v1h1v-1h1v1h2v-1h2v2h2v-1h1v-1h2v1h3v-1h1v1h1v1h1v-1h1v-1h1v2h1v-1h2v-1h2v2h1v-1h1v1h1v-1h1v-1h1v2h1v-1h1v1h2v-1h4v1h1v-1h3v1h1v-1h2v1h1v-2h3v1h1v1h1v-1h4v-1h1v1h1v1h1v-2h1v2h1v-1h1v1h1v-2h1v1h2v-3h1v2h1v1h4v-1h3v1h2v-1h1v1h2v1h1v-1h6v1h1v-1h5v1h2v-1h1v-1h1v1h2v1h1v-2h1v1h2v-1h4v-1h1v1h1v-2h1v3h1v-1h1v1h1v1h1v-3h1v2h2v1h1v-1h1v1h1v-2h1v1h3v-1h1v1h1v1h1v-2h1v1h1v1h1v-2h2v1h1v-1h1v1h1v-2h1v-1h1v2h1v1h1v-1h2v1h1v1h1v-2h1v1h3v1h3v-1h6v1h1v-1h2v1h1v-1h1v1h2v-1h1v-1h1v2h6v-1h1v1h1v-1h1v1h4v-1h1v1h2v-1h3v1h3v-1h1v1h2v-1h2v-1h1v1h2v1h1v-1h1v1h1v-1h3v-1h3v1h1v-2h1v1h2v1h2v1h1v-1h11v1h1v-1h1v1h1v-1h1v1h1v-2h1v2h2v-1h5v-1h1v1h5v1h1v-1h1v-1h1v1h4v1h1v-1h1v1h1v-1h2v1h1v-1h4v1h1v-1h4v1h1v-2h1v1h2v-1h1v2h1v-1h1v-1h1v1h2v-1h1v1h2v1h1v-2h1v1h3v1h1v-1h1v-1h1v-1h1v2h1v-1h2v1h2v-2h2v2h1v-1h1v1h3v-1h1v1h3v-1h1v2h1v-1h2v1h2v-1h11v1h1v-1h1v1h1v-1h1v-1h1v1h2v1h1v-1h4v1h1v-1h8v1h2v-1h2v1h1v-1h1v-1h1v1h1v1h2v-2h1v2h1v-1h1v-1h1v1h1v1h1v-1h1v1h1v-1h2v1h1v-1h5v1h1v-1h1v1h4v-1h2v1h1v-1h2v-1h1v1h1v-1h1v1h1v-1h1v2h1v-1h2v1h2v-1h9v1h1v-1h1v1h1v-1h1v1h2v-1h6v1h1v-1h3v-3h1v1h5v1h6v1h2v-1h1v1h1v1h3v-1h3v1h1v-1h1v1h4v-1h3v1h1v-1h3v1h1v-1h2v1h1v-1h1v1h1v-1h1v-1h1v1h1v1h1v-1h3v-1h1v1h2v-1h1v-1h1v3h1v-2h1v1h2v-1h2v1h3v-1h1v1h9v1h1v-2h1v1h1v1h1v-2h1v1h3v-1h1v-1h1v2h6v-1h2v1h1v-1h1v1h5v-1h1v1h2v1h1v-2h1v1h2v1h1v-1h2v1h1v-1h1v-1h1v1h2v-2h1v1h1v1h1v-1h2v1h12v-1h1v1h1v1h1v-1h1v-1h1v2h1v-3h1v2h3v-1h1v1h2v-1h1v1h5v-1h1v1h4v-1h2v2h2v-2h1v5h-1v1h-1v-1h-1v1h-1v-1h-1v2h-1v-1h-1v-1h-3v1h-1v1h-1v-1h-1v-1h-1v1h-3v1h-1v-1h-1v-1h-1v1h-1v1h-1v-1h-2v-1h-3v2h-1v-1h-4v-1h-1v1h-5v-1h-2v1h-2v1h-2v-1h-1v1h-1v-2h-2v1h-2v-1h-1v1h-3v-1h-1v1h-1v-1h-1v1h-14v-1h-1v1h-3v-1h-1v2h-1v-1h-2v1h-1v-2h-1v2h-2v-1h-2v-1h-2v2h-1v-1h-2v-2h-1v2h-6v-1h-1v1h-1v-1h-1v1h-4v-1h-1v2h-1v-1h-1v-1h-5v1h-1v-1h-1v-1h-1v1h-1v1h-1v-1h-2v1h-1v-1h-1v1h-2v-1h-2v1h-1v-1h-1v1h-1v-1h-3v1h-1v-1h-1v1h-1v-1h-1v1h-1v-1h-6v1h-4v1h-4v1h-2v1h-1v-2h-1v-1h-1v2h-1v-1h-1v-1h-1v-1h-2v1h-2v-2h-1v1h-1v1h-2v-1h-2v1h-1v-1h-1v1h-1v-1h-2v1h-1v-1h-1v-1h-1v2h-1v-1h-3v1h-1v-1h-3v1h-1v-1h-2v2h-1v-1h-2v1h-1v-1h-2v1h-1v-1h-1v-1h-4v1h-2v-1h-2v1h-1v-1h-1v1h-1v-1h-1v1h-6v-1h-1v1h-1v1h-1v-1h-5v-1h-1v1h-1v-1h-1v1h-5v1h-2v-2h-2v1h-1v1h-1v-1h-2v-1h-1v1h-1v-1h-1v-1h-1v1h-1v1h-2v-1h-2v1h-4v-1h-1v1h-1v-1h-3v1h-1v-1h-1v1h-2v-1h-1v1h-3v-1h-1v1h-2v1h-1v-1h-2v3h-1v-3h-2v-1h-1v1h-1v-1h-1v1h-3v-1h-1v1h-2v1h-1v-1h-1v2h-1v-1h-1v-2h-1v2h-2v-1h-2v1h-1v-1h-4v-1h-1v2h-1v-2h-1v1h-1v-1h-2v1h-1v-1h-2v1h-2v-1h-1v1h-5v-1h-1v1h-1v1h-1v-2h-2v1h-3v1h-1v-1h-4v-1h-2v1h-2v-1h-1v1h-2v-1h-2v1h-1v-1h-1v2h-1v-1h-1v-1h-1v2h-1v-2h-2v1h-2v-1h-2v1h-1v-1h-1v1h-1v-1h-1v1h-2v-1h-2v2h-1v-2h-1v1h-2v-1h-2v1h-4v1h-2v-1h-2v1h-2v-1h-4v-1h-1v1h-1v-2h-1v1h-1v1h-1v-1h-2v1h-1v-1h-3v1h-1v-1h-3v1h-1v-1h-1v1h-3v-1h-6v1h-1v-1h-1v1h-2v-1h-1v1h-1v-1h-7v1h-1v1h-1v-1h-2v-1h-3v1h-2v-1h-2v1h-2v-1h-2v1h-1v-1h-1v2h-1v-1h-1v1h-2v1h-2v-1h-3v-2h-1v1h-2v-1h-1v1h-5v-1h-1v1h-1v-1h-1v1h-1v-1h-1v1h-4v-1h-1v1h-2v1h-1v2h-1v-1h-1v-2h-1v1h-1v-1h-1v1h-1v-1h-4v-1h-1v1h-1v-1h-2v1h-3v-1h-1v1h-1v-1h-2v1h-1v-1h-1v2h-1v-2h-1v1h-3v1h-1v-1h-4v-1h-1v1h-3v-1h-1v1h-1v2h-1v-2h-3v1h-2v-1h-2v1h-1v-1h-3v-1h-2v2h-1v-1h-1v1h-1v-1h-1v-1h-1v1h-1v1h-1v-1h-2v-1h-1v1h-2v-1h-1v1h-3v1h-1v-1h-1v-1h-1v1h-1v-1h-1v1h-3v1h-1v-2h-2v1h-3v1h-1v-2h-1v1h-9v-1h-1v1h-4v-1h-2v1h-7v-1h-1v1h-1v-1h-1v1h-3v-1h-3v1h-1v-1h-1v1h-4v-1h-2v1h-2v-1h-1v1h-1v1h-1v-2h-2v1h-2v-1h-4v-1h-1v1h-1v1h-3v2h-1v-2h-2v-1h-1v3h-1v-1h-1v2h-1v-2h-1v1h-1v-2h-6v-1h-6v1h-1v-1h-1v1h-1v-1h-1v1h-1v-1h-3v1h-3v-1h-1v1h-1v-1h-1v2h-1v-2h-1v-1h-1v2h-4v1h-1v-1h-1v1h-2v-1h-1v-1h-5v1h-1v-1h-3v1h-2v-1h-1v1h-2v-1h-1v1h-2v-2h-1v1h-6v1h-2v-1h-2v1h-2v-1h-3v1h-2v-1h-1v-1h-1v1h-5v-1h-1v2h-6v-1h-1v1h-1v-1h-1v1h-4v-1h-1v1h-1v1h-2v-1h-1v1h-3v-1h-5v-1h-2v2h-1v-2h-1v1h-6v1h-4v-1h-1v1h-1v-1h-1v2h-1v1h-1v-2h-2v-1h-5v-1h-1v1h-1v-1h-1v1h-10v1h-2v-1h-6v-1h-1v1h-3v2h-1v-2h-1v-1h-1v1h-4v-1h-2v1h-1v1h-1v-1h-5v-1h-1v1h-4v-1h-2v2h-1v-1h-5v-1h-1v1h-2v-1h-3v1h-1v-1h-3v1h-2v1h-1v1h-1v-2h-2v-1h-1v1h-1v1h-5v1h-1v-1h-1v-2h-1v3h-1v-1h-2v-1h-2v1h-2v-1h-1v-1h-2v1h-1v-1h-2v2h-1v-1h-1v-1h-1v1h-1v-1h-1v1h-1v-1h-2v1h-2v-1h-1v1h-1v-1h-1v1h-3v-1h-3v2h-1v-1h-1v-1h-1v2h-2v-2h-3v1h-2v-1h-4v1h-1v-1h-2v-1h-1v1h-8v1h-1v-1h-1v1h-1v-1h-1v1h-4v-1h-1v2h-1v-1h-1v-1h-1v1h-3v-1h-2v1h-1v-1h-3v1h-5v1h-1v-1h-1v1h-1v-2h-1v1h-2v-1h-1v1h-9v-1h-1v1h-1v-1h-1v1h-5v-1h-1v1h-2v-1h-1v1h-1v-1h-7v1h-3v-1h-3v1h-1v-1h-1v1h-2v-1h-2v1h-2v-1h-2v1h-2v1h-1v-1h-2v-1h-1v1h-6v1h-1v-2h-1v1h-1v-1h-1v3h-1v-2h-1v1h-1v-1h-2v2h-1v-2h-1v1h-7v1h-1v-1h-1v-1h-1v1h-1v-2h-1v1h-1v1h-1v-1h-1v-1h-1v1h-1v-1h-1v1h-1v-1h-1v2h-2v-2h-1v1h-1v-1h-2v1h-3v1h-2v-1h-6v-1h-1v1h-1v-1h-1v1h-1v-1h-1v1h-2v-1h-1v1h-1v-1h-2v1h-2v-1h-3v2h-1v-1h-4v1h-1v-2h-1v1h-4v-1h-2v1h-2v-1h-2v1h-2v-1h-1v1h-5v-1h-1v1h-2v-1h-1v3h-1v-3h-3v1h-1v-1h-2v1h-1v-1h-3v1h-1v-1h-1v1h-3v-1h-8v-1h-1v1h-1v1h-1v-1h-1v1h-1v-1h-1v1h-1v-1h-4v1h-1v-1h-1v1h-1v-1h-3v-1h-1v2h-1v-2h-1v1h-2v1h-7v-1h-1v1h-4zM277 637h4v1h1v-2h1v2h1v-1h2v1h1v-1h1v1h3v-1h1v-1h1v1h1v1h1v-1h1v1h3v-1h1v1h3v-1h1v1h3v-1h3v1h1v-1h1v1h3v-1h1v1h2v-1h2v1h1v-1h2v1h1v-1h1v1h1v-1h3v1h1v-3h1v2h4v1h1v-1h1v1h1v-1h3v1h2v-2h1v2h1v-1h1v1h3v-1h1v1h4v-1h2v1h1v-1h3v1h2v-1h1v1h6v1h1v-1h3v-1h1v-1h1v1h1v-1h1v1h2v1h2v-1h1v1h6v-1h1v1h2v-1h1v1h1v-1h1v1h4v-1h1v1h2v-1h2v1h1v-1h3v1h2v-3h1v2h2v1h3v-1h1v1h1v-1h1v1h10v-2h1v2h3v-3h1v2h1v1h2v-1h1v1h2v-1h1v1h1v-1h2v1h2v-1h3v-2h2v-1h1v-1h1v3h1v-1h1v-1h1v-3h1v5h1v-2h1v3h3v-1h1v1h2v1h1v-2h1v1h1v1h1v-3h1v2h4v-1h1v1h6v1h1v-2h1v1h2v1h2v-1h1v1h1v-1h2v1h2v-1h1v1h1v-1h1v-1h1v2h1v-1h2v1h1v-1h2v1h1v-1h2v-1h1v2h4v-1h1v1h1v-1h2v1h4v1h1v-1h1v-1h2v1h1v-1h1v1h2v-1h3v1h1v-1h3v1h1v-1h2v-1h1v2h1v-1h2v1h2v-1h1v-2h1v3h1v-1h1v2h1v-2h1v1h3v-1h2v1h3v-1h1v1h1v-1h1v-1h1v1h2v-1h1v2h1v-2h1v2h1v-1h1v1h1v-1h1v1h1v-1h1v1h1v-1h2v1h1v-2h1v1h3v1h14v-1h2v1h2v-1h1v-2h1v1h1v1h1v-1h4v-1h2v1h1v-1h1v2h1v-1h1v1h2v-1h1v1h2v1h1v-1h1v1h1v-1h1v1h1v-1h1v1h1v1h2v-1h4v-1h1v1h3v-1h1v1h4v-1h1v-1h2v1h1v1h6v-1h1v1h4v-1h1v1h1v-1h2v1h1v-1h2v1h1v-1h1v-1h1v1h1v-3h1v2h2v1h2v-1h1v-1h1v2h2v1h2v-1h1v1h1v-1h4v-2h1v1h2v-1h1v2h2v1h2v-2h1v1h5v1h1v-1h1v1h2v-1h1v1h1v-3h1v1h1v-1h1v1h1v2h2v-1h3v1h1v-2h1v2h1v-1h2v1h2v-1h1v1h1v-1h3v2h1v-1h2v-1h3v1h1v-1h7v-1h1v1h1v-1h1v1h1v-1h1v2h1v-1h3v1h1v-1h1v1h1v-1h1v-1h1v1h3v1h1v-1h2v-1h2v1h9v1h2v-1h2v1h2v-1h3v1h3v-1h1v1h3v-1h2v1h2v-1h1v1h2v-1h2v1h2v-1h3v1h1v-1h1v1h2v-2h1v1h1v1h3v-1h1v1h2v-1h1v1h1v-1h2v1h1v-1h2v1h2v-1h1v1h3v-1h3v1h1v-1h2v1h1v-1h2v1h1v-1h1v-1h1v2h2v-1h2v1h4v-1h1v1h1v-1h1v1h4v-1h1v1h1v-1h1v1h1v-1h2v1h1v-1h1v1h4v-1h1v1h2v-1h1v-1h1v1h2v1h5v-1h1v1h2v-1h2v1h1v-2h1v2h2v-2h1v2h1v-1h1v1h1v-1h2v-1h1v1h3v-2h1v3h2v-1h1v1h2v-1h3v1h2v-1h1v1h4v-1h1v-1h1v1h1v-1h1v2h1v-1h1v1h1v-2h2v1h2v-1h1v1h1v-2h1v2h1v-2h1v1h1v1h1v-1h1v1h1v1h3v-1h2v1h1v-1h1v1h2v-1h2v1h3v-1h7v-1h1v1h3v-2h1v2h6v1h1v-1h3v1h1v-2h2v1h5v1h1v-2h1v1h1v1h3v-1h1v2h1v-1h3v-1h1v1h2v-1h2v1h2v-1h1v1h1v-1h3v1h2v-1h6v-1h4v1h2v1h3v-1h4v1h2v-1h2v2h1v-1h1v-1h1v1h2v-1h2v1h1v-1h1v-1h2v2h1v-1h1v1h1v1h1v-2h1v-1h1v2h4v-1h4v1h1v-1h1v1h3v-1h1v1h11v-1h1v1h1v-1h1v1h1v-1h2v1h3v-1h1v1h5v-2h1v3h1v-2h1v1h2v-2h1v2h2v-1h1v-1h1v2h1v-1h1v1h1v-1h1v1h2v-3h1v2h3v1h2v-1h1v1h4v-1h1v1h1v-1h3v1h2v-1h1v1h1v-1h1v1h1v-1h3v1h1v-1h3v1h1v-1h1v1h3v1h1v-1h1v-1h2v1h1v-1h3v1h1v-1h1v1h8v-1h2v1h2v-1h1v1h1v-1h2v1h1v-2h2v1h9v1h2v-1h1v-1h1v1h4v1h1v-1h5v-1h2v-1h1v2h2v1h1v-1h2v1h1v-1h4v1h1v-1h3v1h1v-2h2v1h1v-1h1v1h1v1h2v-1h2v-1h1v1h4v-3h1v3h1v-1h1v1h1v-2h1v-1h1v2h1v-1h1v1h1v-1h1v1h1v1h1v-1h1v1h1v-1h1v2h1v-2h1v1h2v1h1v-1h4v-2h1v1h1v1h2v1h2v-1h1v1h1v-1h1v-1h1v2h2v-1h1v1h1v-1h1v1h2v-1h2v1h7v-1h1v1h5v-1h2v1h1v1h1v-1h1v-1h1v1h1v1h1v-1h4v-1h1v-1h1v3h1v-4h1v1h1v-1h1v2h1v-1h1v1h1v-1h1v-1h1v1h4v-1h1v1h4v-1h1v1h1v1h1v1h1v-1h2v1h5v-1h1v1h1v-1h1v1h2v-1h3v1h6v-1h1v1h3v1h1v-1h8v-1h2v1h7v-1h1v1h2v-1h1v1h7v-1h3v1h1v-1h1v1h3v-1h2v-1h1v1h3v-1h2v2h3v-2h2v1h1v1h3v-1h1v1h1v-1h6v1h1v-2h1v1h2v1h1v-1h1v-1h1v1h1v-1h1v1h3v4h-1v1h-1v2h-1v-2h-1v1h-2v-1h-1v1h-1v-1h-1v1h-1v-1h-1v-1h-1v2h-1v-1h-2v-1h-1v2h-1v-1h-1v1h-1v-1h-1v1h-2v-1h-1v1h-1v-1h-1v1h-2v-2h-1v1h-4v-1h-1v2h-1v-1h-3v1h-1v-1h-1v-1h-1v1h-2v2h-1v-1h-2v-1h-4v1h-2v-1h-1v-1h-1v1h-5v-1h-3v1h-1v-1h-2v1h-3v-1h-1v1h-2v-1h-1v1h-1v-1h-2v2h-1v-2h-1v1h-4v-1h-2v1h-1v2h-1v-3h-1v1h-2v1h-1v-2h-1v1h-1v-1h-1v1h-3v1h-1v-1h-2v1h-3v-1h-1v2h-2v-1h-5v1h-2v-1h-1v-1h-1v3h-1v-2h-1v2h-1v-2h-1v2h-2v-3h-1v1h-1v-1h-6v-1h-2v1h-3v-1h-2v1h-3v-1h-1v1h-2v-1h-3v1h-1v-1h-1v1h-4v-1h-2v1h-1v1h-1v-1h-2v-1h-2v1h-3v-1h-1v1h-3v-1h-1v3h-1v-1h-3v-1h-1v1h-1v-1h-1v1h-1v-2h-1v1h-1v-1h-1v1h-2v3h-1v-2h-2v-1h-1v2h-1v-1h-1v1h-2v1h-1v-3h-1v3h-1v-2h-1v2h-1v-1h-2v-1h-3v-1h-2v1h-1v-1h-1v-1h-1v1h-1v1h-2v1h-1v-2h-1v-1h-2v2h-1v-1h-2v-1h-1v2h-1v-1h-6v1h-1v-1h-2v1h-2v-1h-1v1h-1v-2h-1v3h-1v-2h-1v-1h-1v3h-1v-2h-2v1h-1v-2h-1v4h-1v-2h-2v-2h-1v1h-1v1h-1v-1h-1v1h-2v-1h-2v2h-1v-2h-1v1h-1v-1h-7v1h-1v-1h-2v-1h-1v1h-5v-1h-1v1h-1v1h-1v-1h-2v1h-1v-2h-1v1h-1v-1h-2v1h-2v-1h-2v1h-1v-1h-1v2h-1v-1h-6v1h-1v-1h-2v-1h-2v1h-1v-1h-1v1h-1v-1h-1v1h-1v-1h-2v1h-3v-1h-1v1h-4v-1h-1v1h-2v-1h-1v2h-1v-1h-2v1h-1v-2h-2v1h-4v-1h-3v1h-2v-1h-2v1h-3v-1h-1v1h-1v2h-1v-3h-5v1h-2v-1h-2v1h-1v-1h-2v1h-1v-1h-3v1h-1v-1h-1v1h-6v-1h-2v1h-1v1h-1v-1h-1v-1h-1v1h-1v1h-1v-1h-1v1h-1v-1h-2v1h-1v-1h-2v-1h-1v1h-1v-1h-1v2h-1v1h-1v-2h-5v-1h-1v1h-1v-1h-1v1h-1v-1h-2v2h-1v-1h-3v1h-2v-1h-1v2h-2v-1h-2v1h-1v-2h-1v1h-2v-1h-2v-1h-1v1h-6v1h-1v-2h-2v1h-1v1h-1v-2h-1v1h-2v-1h-1v1h-4v1h-1v-2h-1v2h-1v-1h-3v1h-1v2h-1v-3h-1v1h-2v-1h-6v1h-1v-1h-6v1h-1v-1h-1v1h-1v-2h-1v2h-1v-1h-1v1h-1v-1h-1v1h-1v-1h-1v-1h-1v1h-1v-1h-1v2h-1v-1h-1v-1h-1v1h-1v1h-1v-1h-1v1h-1v-1h-2v-1h-1v1h-2v1h-2v-1h-1v4h-1v-1h-1v-1h-2v-1h-1v2h-1v-1h-1v-3h-1v1h-6v3h-1v-3h-1v1h-1v-2h-1v1h-1v-1h-1v1h-4v1h-1v-1h-1v1h-1v-1h-2v2h-2v-2h-4v-1h-1v1h-1v1h-1v-1h-1v1h-1v-2h-1v1h-1v-1h-1v1h-4v-1h-2v1h-2v-1h-1v1h-2v1h-1v-1h-2v-1h-1v1h-6v-1h-1v1h-2v-1h-5v1h-1v-1h-2v1h-1v-1h-1v1h-4v-1h-1v1h-1v-1h-4v1h-1v-1h-2v1h-1v-1h-1v1h-2v1h-1v-2h-1v1h-2v-1h-2v2h-1v-2h-1v1h-2v-1h-1v3h-1v-2h-4v-1h-2v1h-3v-1h-1v1h-1v-1h-1v1h-1v1h-1v-1h-3v-1h-1v1h-5v-1h-1v1h-2v-1h-1v1h-1v1h-1v-1h-1v-1h-2v1h-1v-1h-1v1h-3v-1h-1v1h-2v-1h-1v1h-5v-1h-1v1h-3v1h-2v-2h-1v2h-1v-1h-1v1h-1v-1h-1v-1h-1v1h-2v1h-1v-1h-2v2h-1v-2h-2v1h-1v-1h-2v1h-2v-1h-1v-1h-1v3h-1v-1h-1v-1h-1v1h-1v-1h-1v1h-2v-1h-2v1h-1v-2h-1v1h-1v2h-1v-1h-1v-1h-1v1h-1v-1h-4v-1h-1v1h-4v2h-1v-2h-6v1h-1v-1h-2v1h-1v-1h-5v2h-3v-1h-1v-2h-1v1h-5v2h-1v-1h-1v-1h-4v-1h-1v2h-1v-2h-1v2h-4v-1h-3v-1h-1v2h-1v-2h-1v1h-2v3h-1v-3h-2v1h-1v-1h-2v2h-3v-2h-1v2h-1v-1h-2v-2h-1v1h-1v1h-1v-2h-1v1h-2v-1h-1v1h-1v-1h-2v1h-1v-1h-1v1h-1v-1h-1v1h-1v-1h-1v1h-1v-1h-1v1h-1v1h-3v-2h-3v1h-1v-1h-1v1h-1v-1h-1v1h-1v-1h-2v1h-1v-1h-1v1h-4v-1h-3v1h-1v-1h-1v1h-4v1h-1v-2h-1v2h-2v-1h-1v1h-1v1h-3v-1h-1v1h-1v-2h-6v-1h-1v1h-3v-1h-1v1h-5v-1h-2v1h-3v-1h-1v1h-1v1h-1v-1h-5v-1h-1v2h-1v-1h-9v-1h-1v1h-6v-1h-2v2h-4v-2h-1v1h-3v1h-1v-1h-1v1h-1v-1h-1v1h-2v-1h-8v1h-1v-1h-2v-1h-2v2h-1v-1h-6v1h-1v-1h-1v1h-1v-1h-4v-1h-2v1h-2v-1h-1v2h-1v-1h-1v1h-1v-1h-3v-1h-1v1h-2v1h-2v1h-1v-1h-1v-1h-5v1h-2v-1h-4v1h-5v-1h-1v1h-2v-1h-6v1h-1v-2h-1v1h-1v-1h-1v2h-1v-1h-1v1h-2v-1h-1v2h-1v-1h-1v2h-1v-2h-1v1h-1v-1h-4v-1h-1v3h-1v-1h-2v-1h-1v-2h-1v2h-2v-1h-6v-1h-1v1h-6v-1h-1v1h-4v-1h-2v1h-4v-1h-1v2h-1v-1h-1v-1h-2v1h-4v1h-1v-1h-4v1h-1v-1h-2v1h-1v-1h-2v-1h-1v1h-1v2h-1v-2h-1v-1h-1v1h-2v-1h-1v1h-1v-1h-2v1h-1v-1h-1v1h-2v-1h-1v2h-1v-2h-4v1h-4v-1h-2v1h-5v-1h-1v1h-4v-1h-2v2h-2v-2h-1v1h-17v-1h-1v1h-2v-1h-1v1h-4v-1h-1v2h-1v-1h-5v1h-2v-1h-10v-1h-1v1h-1v-1h-2v2h-1v-1h-6v-1h-1v1h-3v-1h-2v1h-5v1h-1v-2h-1v1h-8v1h-1v-1h-2v-1h-1zM277 667h1v1h6v1h1v-1h2v-1h1v1h4v1h1v-2h2v1h9v-2h1v1h1v-1h1v1h1v1h5v-1h1v2h1v-1h4v1h2v-1h3v-1h1v1h2v1h1v-1h1v1h1v-1h1v1h1v-1h1v1h1v-1h2v1h1v-1h1v1h1v-1h1v1h1v-1h6v1h1v-1h3v-2h1v1h3v2h1v-1h4v-1h2v2h1v-1h12v-2h1v2h2v1h1v-1h1v-1h1v-1h1v3h1v-1h2v1h1v-1h2v-1h1v1h3v1h1v-1h2v-2h1v2h6v-1h1v1h5v-4h1v4h1v-2h1v3h1v-1h5v-1h2v1h1v-1h1v2h1v-2h1v-1h1v1h1v-1h1v2h1v-2h1v2h1v-1h1v2h2v-2h2v1h2v-1h1v1h1v-1h1v-2h1v2h1v1h1v-1h1v1h1v-1h4v1h3v-1h1v1h1v-1h2v1h2v-1h1v2h1v-1h1v1h1v-1h5v1h1v-1h1v-1h2v-1h1v2h1v-2h1v1h1v-1h1v-1h1v1h1v1h1v-2h1v2h3v1h4v-1h1v1h8v-1h2v1h2v-1h1v1h1v-1h1v1h3v-1h2v1h1v1h1v-1h2v-1h1v1h2v1h1v-1h3v-1h2v1h1v-1h1v1h10v1h1v-1h2v1h1v-1h3v1h1v-1h2v1h1v-1h3v1h1v-1h1v1h1v-1h3v1h1v-1h2v1h2v-1h12v1h1v-1h5v-1h2v1h1v-1h1v1h4v-1h1v1h3v-1h1v1h3v-1h1v1h2v-1h1v1h5v-1h1v2h2v-1h13v1h1v-1h10v-1h1v1h7v1h2v-1h5v-1h2v-1h1v1h1v-1h1v1h1v-1h2v-1h1v1h1v1h1v-1h1v1h1v-2h1v1h1v1h1v-1h1v1h1v-1h2v1h1v1h1v1h1v-2h1v1h1v-1h2v2h1v-1h1v-2h1v2h3v-1h1v1h2v-1h1v1h4v-1h1v1h1v1h1v-1h1v-1h1v1h3v-1h2v2h1v-2h1v1h4v-1h1v1h2v-1h1v1h1v-1h2v-2h1v3h1v-1h1v2h1v-1h1v1h1v-2h1v2h1v-1h1v-1h2v1h4v-1h1v1h2v-1h1v1h4v-1h2v1h1v1h1v-1h1v1h1v-1h5v1h1v-1h1v-1h1v1h2v-1h1v1h1v-1h2v-1h2v3h2v-2h1v1h11v1h2v-2h1v1h2v-1h1v1h9v-1h2v-1h1v1h1v1h9v1h1v-1h2v1h1v-2h1v1h3v1h1v-1h2v1h1v-1h2v1h1v-1h3v-1h1v2h1v-1h4v1h1v-1h2v-1h1v1h5v-1h1v1h1v-1h1v1h1v1h1v-1h5v1h1v-1h1v-1h1v1h7v-1h1v1h3v-1h1v1h1v-1h1v1h5v-1h1v1h1v1h1v-1h1v-1h1v1h2v-1h3v1h2v-1h1v1h13v-1h1v1h1v1h1v-1h10v1h1v-2h1v2h2v-1h3v-1h2v1h1v1h1v-2h1v1h1v1h1v-1h3v-1h1v1h2v-1h3v1h3v-1h2v1h2v-1h3v1h5v-1h1v-1h1v1h1v1h9v-1h1v1h4v-1h2v2h1v-1h1v1h1v-1h4v-1h1v1h3v1h1v-1h1v1h1v-1h4v-1h1v2h1v-2h1v1h2v-1h1v2h1v-1h3v-1h1v1h7v1h1v-1h3v1h1v-1h4v1h2v-1h1v-1h3v1h1v-1h2v1h1v-1h1v1h1v1h2v-1h1v1h1v-1h1v-1h1v1h9v-1h1v1h2v1h1v-2h8v1h3v1h1v-1h4v1h1v-1h5v-1h1v1h3v-1h1v2h1v-2h1v1h3v1h2v-2h1v1h5v-2h1v2h6v-1h1v1h2v-1h4v1h5v-1h2v1h1v-3h1v1h2v-1h1v1h1v-1h2v3h2v-1h1v1h1v1h1v-2h1v1h6v-1h2v1h4v-2h1v2h2v-3h1v2h5v1h1v-2h1v2h4v-2h1v2h1v-1h1v1h1v-1h1v2h1v-1h2v-1h1v1h3v-1h4v-1h1v2h1v-3h1v2h6v1h5v-1h2v1h1v-2h1v2h2v-1h3v1h5v-1h1v1h8v-1h2v2h1v-2h2v1h1v-1h1v2h2v-1h1v-1h1v2h1v-3h1v1h1v1h1v-2h1v2h1v-1h3v1h1v-1h1v1h1v1h1v-3h2v3h2v-1h2v-1h1v2h1v-1h4v-1h1v1h1v1h1v-1h6v1h1v-2h1v2h1v-1h5v1h2v-1h6v1h1v-1h2v1h1v-1h1v1h1v-1h2v-1h1v1h9v1h2v-1h1v1h1v-1h2v-1h1v1h2v-1h1v1h13v1h1v-1h7v1h1v-1h9v1h2v-1h2v1h2v-1h4v-1h1v1h4v1h1v-2h1v1h1v-1h1v-1h1v2h4v-1h1v1h2v-1h2v1h2v-1h2v1h1v-1h3v1h1v-1h3v1h2v-2h1v1h1v1h2v-1h1v1h3v-1h3v1h3v-1h2v1h4v1h1v-2h1v1h9v-1h2v1h1v-1h1v1h1v-1h1v-1h2v1h2v1h1v-1h3v1h1v-1h4v-1h1v2h1v-1h1v1h1v5h-2v-1h-1v1h-1v-1h-1v1h-1v-1h-4v1h-1v-1h-1v1h-2v-1h-1v1h-2v1h-1v-2h-1v-1h-1v1h-7v-1h-1v1h-3v1h-3v-1h-3v-1h-1v2h-1v-1h-2v1h-1v-1h-2v1h-3v-1h-2v1h-1v-1h-3v1h-1v-1h-2v1h-3v1h-1v-1h-1v-1h-1v1h-1v-1h-4v1h-1v-1h-5v1h-1v-1h-3v1h-1v-1h-2v-1h-1v2h-1v-1h-4v1h-1v-2h-1v1h-2v-1h-2v2h-1v-1h-7v1h-1v-2h-1v1h-5v1h-1v-1h-6v-1h-1v1h-4v-1h-1v1h-2v1h-1v-1h-2v1h-1v-1h-3v1h-1v-1h-7v-1h-1v1h-4v1h-1v-1h-2v-1h-1v1h-2v-1h-3v2h-2v-1h-2v-1h-1v1h-2v1h-1v-1h-2v-1h-1v1h-1v-1h-1v1h-4v1h-1v-1h-6v-1h-1v1h-6v-1h-2v1h-2v1h-1v-1h-1v2h-1v-2h-2v1h-2v-1h-1v1h-2v-1h-3v1h-2v-2h-1v2h-2v1h-1v-1h-1v1h-1v-2h-2v1h-1v-1h-3v1h-4v-1h-4v1h-1v-1h-11v1h-2v-1h-5v1h-1v-1h-2v1h-2v-1h-2v1h-2v3h-1v-3h-2v2h-1v-2h-1v2h-1v-1h-1v1h-1v-1h-1v-2h-1v1h-1v-1h-1v1h-2v1h-1v-2h-1v3h-1v-3h-2v1h-1v-1h-2v1h-1v-1h-1v1h-4v-1h-1v1h-1v-1h-2v1h-1v-1h-2v1h-1v-1h-1v1h-1v-1h-3v1h-1v-2h-1v1h-8v-1h-1v1h-1v1h-1v-1h-1v2h-2v-1h-2v1h-1v-1h-4v-1h-2v-1h-1v1h-2v1h-1v-1h-1v1h-1v-1h-2v-1h-1v1h-10v1h-1v-2h-1v1h-1v-1h-1v1h-2v1h-1v-1h-2v-1h-1v1h-6v1h-1v-1h-4v1h-2v-2h-1v1h-8v1h-1v-1h-1v1h-4v-1h-1v2h-2v-1h-1v-1h-1v-1h-2v1h-3v-1h-2v1h-1v-1h-1v1h-6v1h-2v1h-1v-1h-1v-1h-5v-1h-1v2h-1v-2h-1v1h-1v-1h-1v1h-1v1h-1v-1h-7v1h-1v-1h-1v1h-1v-2h-1v1h-1v-1h-1v1h-3v1h-1v-1h-1v1h-1v-1h-3v1h-1v-1h-2v1h-1v-1h-4v1h-1v-1h-4v1h-1v-1h-2v-1h-1v1h-3v1h-1v2h-1v-1h-1v-1h-2v-1h-2v-1h-1v1h-2v1h-1v-1h-6v1h-5v-2h-1v1h-2v1h-5v-1h-1v1h-2v-1h-1v1h-1v-1h-2v1h-1v-1h-2v-1h-1v2h-1v-1h-3v1h-2v-1h-1v-1h-1v2h-1v-1h-2v-1h-1v1h-2v1h-3v-2h-1v1h-1v1h-1v-2h-2v2h-1v-1h-1v1h-1v-1h-2v1h-1v-1h-1v1h-1v-1h-4v1h-1v-1h-1v1h-1v-2h-2v1h-1v1h-1v-1h-2v1h-1v-2h-1v1h-2v1h-1v-1h-6v1h-1v-1h-2v1h-1v-1h-1v1h-1v-1h-1v1h-1v-1h-3v1h-1v-1h-3v1h-1v-1h-6v-1h-1v2h-1v-1h-2v1h-1v-1h-3v1h-1v-1h-3v-1h-1v1h-2v-1h-1v1h-5v-1h-1v1h-2v-1h-2v1h-1v-1h-1v1h-5v-1h-1v1h-3v-1h-1v2h-1v-1h-6v-1h-1v1h-6v2h-1v-1h-2v-2h-1v1h-1v1h-1v-1h-1v1h-1v-1h-6v-1h-1v1h-5v-1h-1v1h-1v1h-1v-2h-1v1h-1v-1h-1v1h-1v-1h-1v1h-3v1h-4v1h-1v-2h-2v1h-1v-1h-2v1h-1v-2h-1v1h-1v-1h-1v1h-1v1h-1v-1h-1v1h-1v-1h-1v1h-1v-1h-4v1h-3v-1h-1v1h-2v-1h-1v1h-1v-1h-1v1h-1v-2h-1v1h-1v1h-3v-1h-1v1h-1v-2h-1v1h-1v2h-1v-2h-2v1h-1v-2h-1v1h-1v3h-1v-3h-2v1h-1v-1h-11v1h-1v-1h-2v1h-1v-2h-1v1h-6v1h-3v-1h-1v1h-1v-1h-1v-1h-1v2h-1v2h-1v-3h-1v1h-1v-2h-1v2h-2v-1h-3v1h-1v1h-2v-1h-1v1h-2v-2h-1v2h-1v1h-2v-2h-1v1h-1v-1h-2v-1h-1v2h-1v-3h-1v1h-1v1h-2v-1h-4v1h-1v-1h-1v2h-1v-2h-2v-1h-1v1h-2v-1h-1v2h-1v-1h-4v1h-1v-1h-2v-1h-2v1h-12v-1h-1v1h-2v-1h-1v1h-1v-1h-1v1h-2v1h-1v-1h-2v-1h-1v1h-3v-1h-1v2h-1v-1h-2v1h-1v-1h-1v-1h-1v1h-3v1h-2v-1h-10v-1h-1v1h-5v1h-1v-1h-1v-1h-1v1h-1v-1h-2v1h-3v-1h-4v1h-4v-1h-2v1h-1v-1h-1v1h-1v-1h-1v1h-4v-1h-1v1h-6v-1h-1v1h-1v1h-1v-1h-3v1h-1v-1h-3v-1h-1v1h-2v1h-1v-2h-1v2h-1v-1h-1v1h-1v-1h-1v2h-1v-2h-2v2h-1v-1h-2v-1h-1v1h-1v-1h-7v1h-1v-1h-3v-1h-1v1h-4v1h-1v-1h-2v1h-2v2h-1v-2h-2v1h-1v1h-1v-2h-1v1h-2v1h-1v-1h-1v-2h-5v1h-1v-1h-1v1h-2v-1h-2v1h-1v-1h-1v1h-1v-1h-4v1h-2v-1h-1v1h-1v-1h-1v1h-6v-1h-4v1h-1v-1h-2v3h-1v-2h-2v-2h-1v2h-1v-1h-2v1h-3v2h-1v-4h-1v1h-3v1h-2v-1h-4v-1h-1v1h-1v2h-1v-1h-1v-1h-1v1h-1v-1h-1v-1h-1v1h-4v1h-1v-1h-10v-1h-1v1h-1v1h-1v-1h-1v1h-1v-1h-1v-1h-2v2h-1v-1h-9v1h-1v-1h-1v1h-1v-1h-3v-1h-1v3h-1v-1h-1v-1h-3v-1h-1v1h-1v-1h-4v2h-1v-1h-1v2h-1v-2h-2v-1h-1v1h-1v-1h-1v1h-1v-1h-1v1h-7v-1h-1v2h-1v-2h-3v2h-1v-1h-5v-1h-1v1h-1v1h-1v-2h-1v1h-2v-1h-1v1h-2v1h-1v-1h-2v1h-1v-1h-5v1h-2v-1h-1v1h-3v-1h-1v-1h-1v1h-2v-1h-1v1h-5v1h-2v-2h-1v1h-3v-1h-1v1h-6v1h-1v-1h-1zM277 698h7v1h2v-1h2v-1h1v1h2v-1h2v1h2v-1h1v1h3v1h1v-2h2v1h6v-1h1v-2h1v3h3v-1h2v1h3v-1h1v1h1v1h2v-1h3v-1h1v1h6v1h1v-1h1v1h1v-2h1v2h1v-1h1v1h1v-1h1v1h1v-1h1v-2h1v2h1v1h1v-1h2v1h3v-1h2v1h2v-1h4v1h1v-1h1v-1h1v1h11v1h1v-3h1v2h1v-1h1v1h2v1h1v-1h3v1h1v-3h1v3h1v-1h4v1h2v-1h2v1h1v-1h4v1h1v-1h1v1h2v-1h2v1h1v-1h1v1h2v-1h3v1h1v-2h1v-1h2v1h1v-2h1v3h1v-1h1v-1h1v2h1v-1h2v1h1v-1h2v-3h1v4h7v1h1v-1h2v-1h2v1h1v1h1v-2h1v2h1v-1h10v-1h1v1h2v-2h1v2h4v1h1v-1h1v-1h1v1h5v-2h1v1h3v1h1v-2h1v1h1v1h1v-2h1v1h1v-1h2v1h1v-1h2v2h1v-1h1v1h1v1h1v-1h2v-1h1v1h1v1h1v-1h9v-1h1v1h1v-2h1v2h3v-1h3v-1h1v2h1v-1h1v1h3v-1h2v1h1v-1h3v1h1v-1h2v1h1v1h1v-1h1v-3h1v3h1v-1h1v1h1v-1h1v-1h1v2h1v-1h3v1h1v-1h4v1h2v-1h2v1h2v-1h1v1h2v-1h1v1h1v1h1v-1h3v1h2v-1h2v-1h1v-1h2v1h1v-1h1v1h3v-2h1v2h1v2h1v-2h1v-2h1v2h2v1h1v-2h1v1h4v1h3v-1h2v2h1v-1h1v1h1v-1h2v-1h1v2h1v-1h1v1h1v-1h5v1h1v-1h1v1h1v-1h1v-1h1v2h2v-1h1v1h1v-1h1v1h1v-1h2v1h6v-1h2v1h1v-1h1v-1h1v1h1v-1h1v1h2v1h1v-1h1v1h1v-1h1v1h2v-1h9v1h2v-1h1v1h1v-1h1v1h1v-1h2v-1h1v1h2v-1h2v-1h1v1h2v1h1v-1h2v-1h1v1h1v-1h1v2h1v-1h1v1h3v-1h1v1h6v1h1v-1h2v1h1v-1h1v1h1v-1h5v1h1v-2h1v2h2v-1h3v-2h1v3h2v-2h1v1h2v1h1v-3h1v2h1v-2h1v2h8v-1h1v1h2v1h1v-2h1v2h1v-1h2v-1h2v1h2v-1h1v2h1v-1h5v1h1v-1h1v1h1v-1h2v-1h1v2h2v-1h2v1h1v-1h6v-1h1v1h1v-2h1v1h2v-1h1v1h1v-2h1v1h1v1h3v1h2v-1h1v1h1v1h1v-1h2v1h1v-2h1v2h1v-1h2v-1h1v-1h1v2h1v-1h1v1h1v-1h1v-1h2v2h1v-1h1v1h1v-1h2v1h1v-1h1v2h1v-1h4v-1h1v1h1v-1h1v1h2v1h1v-1h1v-1h1v2h1v-1h3v1h1v-1h6v1h3v-1h1v1h4v-1h4v1h1v-1h1v1h1v-1h3v1h2v-1h2v1h1v-1h5v1h1v-1h1v1h1v-1h1v-1h2v1h4v1h1v-1h2v1h1v-1h2v-1h1v1h8v1h2v-1h3v1h3v-1h2v1h1v-1h2v-1h1v2h2v-1h5v1h1v-1h1v1h1v-1h1v1h3v-1h2v1h2v-1h2v-1h1v-1h1v1h1v-1h1v3h1v-1h2v-1h1v1h1v-2h5v-1h2v1h3v1h1v-1h1v1h1v1h1v-1h1v-2h1v3h1v-1h1v1h2v-1h1v1h1v-1h1v1h1v-1h1v2h1v-1h4v-1h1v1h2v-1h2v1h7v1h1v-2h1v1h1v1h1v-1h1v-1h1v1h1v-1h1v1h2v-1h1v1h1v-2h1v1h1v1h6v-1h1v1h3v-1h1v1h2v-1h2v1h1v-1h1v1h4v-1h1v1h5v-1h3v1h1v-2h1v-1h1v2h2v1h2v-1h2v1h4v1h2v-1h4v1h1v-1h8v1h1v-1h8v1h2v-1h1v-1h2v-1h1v2h5v-1h1v1h1v1h1v-1h1v1h1v-1h1v1h1v-1h1v1h1v-1h1v-2h1v2h1v-1h1v1h4v1h1v-1h2v1h1v-1h2v-1h1v1h2v1h2v-1h5v-1h1v1h1v-2h1v1h1v-3h1v4h1v-1h1v-2h1v2h2v-1h1v2h1v-1h1v1h6v1h1v-1h4v-2h1v1h1v2h1v-1h4v1h1v-1h1v1h1v-1h6v-1h1v1h3v-1h1v2h1v-1h3v1h1v-2h1v-2h1v4h1v-1h1v1h1v-1h3v-1h1v1h1v1h1v-1h3v-1h1v1h1v-1h1v1h2v-1h1v1h1v1h1v-2h3v1h3v1h1v-1h1v-2h1v2h2v1h1v-1h2v1h1v-2h4v1h4v1h1v-2h1v2h1v-1h1v1h1v-1h1v1h1v-1h5v1h1v-1h1v-1h1v1h1v-1h1v1h4v-1h1v1h3v-1h2v1h1v-1h1v-1h3v1h1v2h1v-2h2v1h2v-1h1v1h8v-1h1v1h4v1h1v-1h2v1h1v-1h3v-1h1v1h5v-1h1v1h2v1h2v-2h1v2h1v-1h2v1h3v-1h3v1h1v-1h5v1h1v-1h1v1h1v-2h1v1h1v-1h1v1h4v1h1v-1h5v-1h1v2h1v-1h2v1h1v-1h4v1h1v-1h1v1h2v-1h1v1h1v-1h1v1h1v-1h4v1h2v-1h5v-1h3v2h1v-1h1v1h2v-1h3v1h1v-1h3v1h2v-1h4v1h1v-2h1v2h2v-1h1v1h1v-1h2v1h1v-2h1v2h1v-1h5v1h1v-1h1v1h1v-1h1v-2h1v3h1v-1h4v-1h2v2h2v-1h2v-1h1v1h3v1h1v-1h2v-1h4v1h4v1h4v-1h1v1h1v-1h5v-2h1v2h3v-1h1v-1h3v1h1v1h2v-1h3v1h1v-2h2v2h1v-1h2v-1h1v7h-2v2h-1v-1h-6v1h-2v-2h-2v1h-2v1h-1v-1h-1v-1h-6v-1h-3v1h-1v-1h-2v1h-1v-1h-2v1h-2v-1h-3v1h-1v1h-2v-1h-1v-1h-2v-1h-1v1h-4v1h-1v-2h-1v2h-4v1h-1v-2h-1v1h-1v-1h-1v2h-1v-2h-1v1h-1v-1h-1v3h-1v-3h-1v1h-3v-1h-2v1h-1v1h-1v-1h-1v-1h-3v1h-2v-1h-12v1h-1v-1h-3v1h-1v-1h-2v-1h-1v3h-1v-2h-1v1h-2v-1h-2v1h-1v-1h-10v1h-2v2h-1v-2h-2v-1h-2v1h-2v-1h-1v1h-1v-1h-1v1h-1v-1h-1v1h-1v-1h-2v-1h-1v1h-1v1h-2v-1h-1v2h-1v-2h-1v1h-1v-1h-1v1h-5v-1h-2v1h-2v-1h-6v1h-1v-1h-1v1h-1v1h-1v-1h-3v-1h-1v1h-1v-1h-3v1h-1v1h-1v-1h-1v-1h-5v1h-4v-1h-2v1h-1v1h-1v-1h-1v-1h-3v1h-7v1h-2v-1h-1v2h-1v-1h-1v1h-1v-1h-1v-1h-1v1h-2v-1h-2v1h-1v-1h-3v-1h-1v2h-1v-1h-2v-1h-1v1h-4v1h-1v-2h-1v1h-3v-1h-2v1h-2v-1h-2v1h-1v-1h-1v1h-4v-1h-1v1h-1v-1h-1v3h-1v-3h-1v1h-1v-1h-3v1h-1v-1h-2v1h-6v-1h-3v1h-1v-1h-1v1h-1v-2h-1v2h-3v-1h-1v1h-4v-1h-1v1h-3v-1h-2v-1h-1v2h-1v-1h-1v1h-1v-1h-6v-1h-1v2h-1v-1h-7v1h-1v-1h-3v1h-2v-1h-1v1h-1v-1h-2v1h-1v-1h-2v1h-2v-2h-1v1h-1v2h-1v-1h-1v1h-2v-1h-1v2h-1v-1h-5v-1h-2v-1h-1v1h-1v-1h-3v1h-4v-1h-1v1h-2v-1h-1v1h-3v-1h-1v1h-1v-1h-1v1h-5v-1h-2v1h-1v-1h-1v1h-1v-1h-3v1h-1v-1h-3v1h-2v1h-1v-1h-2v-1h-3v1h-1v-1h-2v1h-1v-1h-5v1h-3v1h-1v-2h-2v1h-1v-1h-1v1h-1v-1h-2v1h-1v-1h-1v1h-1v-1h-1v1h-2v-1h-1v2h-1v-1h-3v-1h-1v1h-3v-1h-1v1h-1v-1h-3v2h-1v-2h-1v1h-1v1h-2v1h-1v-2h-4v-1h-1v2h-1v-2h-1v1h-1v1h-1v-1h-3v-1h-1v1h-2v-1h-1v1h-2v-1h-2v1h-1v-1h-1v1h-4v-1h-2v1h-4v-1h-1v1h-1v-1h-1v1h-2v1h-1v-1h-1v1h-1v-1h-3v-1h-1v1h-5v-1h-1v1h-2v1h-2v-2h-1v1h-2v-1h-1v1h-1v-1h-1v1h-1v1h-1v-1h-2v2h-1v-1h-3v-1h-1v1h-1v1h-1v-1h-6v-2h-1v2h-1v-1h-2v1h-2v1h-1v-2h-2v-1h-5v1h-2v-1h-12v1h-1v-1h-5v1h-1v-1h-2v1h-2v-2h-1v1h-5v1h-1v-1h-1v1h-2v-1h-2v1h-2v-1h-3v1h-2v-1h-1v1h-1v-1h-1v2h-1v-1h-2v1h-1v-1h-1v-1h-11v2h-1v-3h-1v1h-2v1h-2v-1h-4v1h-3v-1h-2v1h-1v-1h-4v1h-1v-1h-3v1h-2v-1h-1v1h-5v-1h-2v1h-1v1h-2v1h-1v-1h-1v-2h-1v3h-1v-2h-2v-1h-1v1h-1v-1h-3v1h-1v1h-1v-1h-1v1h-2v1h-1v-1h-2v-2h-1v1h-3v1h-1v-2h-1v1h-2v-1h-2v2h-1v-1h-2v1h-1v-1h-3v2h-1v-2h-1v1h-1v-1h-1v1h-2v-1h-2v-1h-3v1h-2v-1h-2v1h-4v1h-1v-1h-2v1h-1v-2h-1v1h-1v1h-1v-1h-3v-1h-1v1h-4v-1h-1v1h-2v-1h-1v1h-6v1h-1v-1h-3v1h-1v-1h-4v1h-1v2h-1v-3h-2v-1h-1v1h-1v-1h-2v1h-1v-1h-1v1h-1v-1h-1v1h-1v-1h-13v1h-1v-1h-3v1h-1v-1h-1v1h-8v1h-2v-1h-2v1h-2v-1h-1v1h-1v-1h-4v-1h-2v2h-1v-1h-1v-1h-2v1h-4v-1h-2v2h-1v-1h-1v-1h-1v1h-1v-1h-5v1h-1v-1h-4v1h-1v1h-1v-1h-1v-1h-1v-1h-1v2h-1v-2h-1v3h-1v-3h-1v1h-3v1h-1v-1h-4v1h-1v-1h-2v2h-1v-2h-1v1h-2v-1h-2v2h-1v-1h-2v-1h-2v1h-1v-1h-1v1h-1v-1h-3v1h-1v-1h-1v2h-1v-1h-1v-1h-1v1h-3v-1h-1v1h-1v1h-3v-1h-1v-1h-1v2h-3v2h-1v-1h-1v-2h-1v3h-1v-2h-1v-1h-2v2h-2v-2h-3v1h-1v-1h-4v-1h-2v1h-2v-1h-2v2h-1v-1h-1v-1h-1v2h-1v-1h-1v1h-2v1h-1v-1h-1v-1h-1v1h-3v-1h-2v1h-2v-1h-1v-1h-1v2h-1v-2h-1v1h-1v1h-1v-1h-2v-1h-1v1h-1v1h-1v-1h-2v1h-1v-2h-1v1h-1v1h-1v-1h-1v-1h-1v3h-1v-2h-4v-1h-3v2h-1v-1h-1v-1h-1v1h-4v-1h-1v1h-3v1h-1v1h-1v-3h-2v1h-1v1h-1v-1h-1v-1h-1v1h-3v2h-1v-1h-2v-1h-1v1h-1v-1h-2v2h-2v-1h-1v-1h-1v1h-1v1h-1v-2h-1v1h-1v1h-1v-1h-1v-2h-4v1h-4v-1h-1v1h-1v-1h-2v1h-1v-1h-1v1h-2v-1h-2v1h-2v-1h-1v1h-4v-1h-1v3h-1v-2h-3v-1h-4v1h-1v-1h-7v1h-1v1h-1v-1h-2v-1h-1v2h-1v-1h-2v2h-1v-1h-4v-1h-2v-1h-2v1h-2v-1h-2v-1h-1v1h-7v1h-2v1h-2v-1h-1v-1h-4v1h-2v1h-1v-2h-1v1h-2v-1h-1v1h-2v-1h-1v1h-1v-1h-5v1h-2v-1h-1v1h-1v-1h-2v1h-1v-1h-2v1h-1v-1h-2v1h-1v-1h-6v1h-1v-1h-1v-1h-1v1h-1v-1h-1v1h-5v1h-2v-1h-1v1h-3v-1h-2v1h-1v-1h-1v2h-1v-2h-1v1h-1v-1h-1v1h-2v-1h-1v1h-2v-1h-1v2h-1v-1h-1v-1h-2v1h-1v-1h-1v1h-2v-1h-1v1h-1v-1h-2v1h-2v-1h-2v1h-3v-1h-1v1h-6v-1h-1v2h-1v-1h-2v-1h-2v1h-1v1h-1v-1h-1v-1h-1v1h-3v1h-1v-2h-1v1h-4v1h-1v-1h-1zM277 727h1v2h1v-1h1v-1h2v1h1v1h4v-1h2v1h1v-1h1v1h1v-1h2v1h2v-1h1v1h1v-1h1v1h1v-1h6v1h2v-1h1v1h1v-1h1v1h1v-1h2v-1h1v1h1v-2h1v2h4v-1h2v2h1v-1h3v1h1v-1h1v1h1v-1h2v1h1v-1h2v1h1v-1h3v1h1v-1h2v1h1v-1h1v2h1v-1h1v-1h1v1h1v-1h3v1h3v-1h1v1h2v-1h2v1h3v-1h1v1h6v-1h4v1h4v-1h1v1h1v-1h1v2h1v-1h1v-1h1v-1h1v1h3v1h3v-1h1v-1h1v1h1v1h1v-2h1v1h2v-1h1v-1h1v1h1v-1h1v1h6v-2h1v3h1v1h1v-1h1v1h4v-1h3v1h2v-1h1v1h4v-1h1v1h4v-1h1v1h6v-1h3v-1h1v1h5v-1h2v-1h1v1h1v-1h4v1h2v-2h1v2h1v1h1v1h1v-1h3v-1h1v2h2v-1h2v1h2v-1h6v1h1v-1h1v1h1v-1h1v1h1v-1h1v1h1v-1h1v1h1v1h1v-1h1v-2h1v1h3v1h1v-1h1v1h3v-1h2v-1h1v1h4v1h3v-1h5v1h1v-2h1v1h3v1h1v-1h1v1h1v-2h1v1h1v1h1v-1h1v-1h1v1h3v-1h1v1h2v1h1v-1h1v-1h1v2h1v-1h3v-2h1v3h1v-1h2v1h1v-2h1v2h1v-1h3v1h1v-1h3v-1h1v1h1v-2h1v2h2v1h1v-1h1v1h3v-1h1v1h5v-1h2v1h3v-1h1v-1h1v2h8v-1h2v1h1v-1h2v-1h2v1h3v1h1v-1h2v1h1v-1h2v1h5v-2h1v1h1v1h3v-1h2v1h1v-1h1v1h2v-2h1v1h1v1h2v-1h1v1h1v1h1v-1h2v-1h1v1h3v-1h2v1h2v-1h1v1h3v-1h1v1h3v-1h4v1h3v-1h1v1h1v-1h5v1h1v-1h1v1h1v-1h1v-1h1v2h1v-1h4v-1h1v1h8v1h2v-1h4v-1h3v1h1v1h1v-1h2v1h1v-1h1v1h1v-1h1v1h1v-1h1v1h1v-1h2v1h1v-1h4v1h2v-1h1v1h2v-1h1v1h1v-1h2v1h1v-1h2v1h1v-1h7v1h1v-3h1v3h1v-1h3v1h1v-1h3v1h1v-1h2v-1h1v1h2v1h1v-2h2v1h1v1h1v-1h1v-1h1v1h3v-1h2v1h2v-1h1v2h1v-1h2v1h1v-2h1v2h2v-1h9v1h1v-1h2v1h3v-2h1v2h1v-1h1v1h2v-1h1v1h1v-1h2v1h1v-1h1v1h1v-1h3v1h1v-1h2v1h1v-1h2v1h1v-1h8v-2h1v3h1v-1h1v-2h1v2h1v1h1v-1h5v1h3v-1h1v1h1v-2h1v1h2v-1h1v1h1v-1h1v1h2v-1h4v-1h1v1h2v1h1v-2h1v1h1v1h5v2h1v-2h1v1h1v-1h1v2h1v-1h2v-2h1v1h1v-1h1v2h7v-1h1v1h2v-1h1v1h1v-1h1v1h1v-1h9v-1h1v1h1v1h2v-2h1v2h1v-1h1v1h2v-2h1v2h2v-1h1v1h1v-1h2v1h2v-1h1v1h1v-1h6v1h2v-1h1v1h1v-2h1v2h1v-1h1v1h1v-1h1v-1h2v1h5v1h2v-1h3v-2h1v3h1v-2h1v2h1v-1h3v-1h4v1h2v1h2v-1h1v-1h1v1h4v-1h1v1h1v1h1v-1h13v-1h1v1h2v-2h1v3h2v-3h1v2h5v1h1v-1h2v1h2v-1h2v1h1v-1h5v1h1v-1h3v1h1v-1h1v1h1v-1h2v1h2v-2h1v2h1v-1h3v1h1v-1h1v-1h1v1h3v-1h1v2h1v-1h1v1h1v-1h4v1h1v-1h1v1h1v-2h2v2h1v-1h5v1h1v-1h4v1h1v-1h2v1h3v-1h2v1h2v-1h1v1h1v-1h2v1h1v-1h3v-1h1v-2h1v2h1v1h1v1h1v-1h1v1h7v-1h1v1h3v-1h4v-1h1v2h1v-1h3v1h4v-1h2v1h1v-1h1v1h1v-1h1v1h2v-2h1v2h1v-1h2v1h1v1h1v-1h2v-1h6v1h1v-1h1v1h2v-2h1v2h2v-1h1v2h1v-1h3v-2h1v2h11v-1h1v1h2v-2h2v1h2v1h2v-1h1v1h1v-1h2v1h3v-1h4v-2h1v3h4v-1h3v-1h1v1h2v-1h1v1h2v1h1v-1h2v1h1v-1h1v-1h1v1h2v1h1v-1h6v1h1v-1h2v1h1v-1h3v1h1v-1h1v1h1v-1h1v1h1v-1h1v1h2v-1h2v1h1v-1h1v1h3v-1h1v1h1v-2h1v1h3v1h1v-1h1v-1h1v2h1v-1h1v-1h1v1h1v1h2v-1h7v-1h1v1h1v-1h1v1h1v-1h1v1h3v1h1v-1h3v-1h1v1h2v-1h2v-2h2v4h1v-3h1v-2h1v3h2v1h1v-1h2v1h1v-1h1v2h1v-1h2v1h1v-1h3v1h5v-1h2v1h1v-1h2v1h1v-1h2v1h1v-1h1v1h2v-1h2v1h1v-1h2v-1h1v1h1v-3h1v4h1v-1h1v1h2v-2h1v1h1v1h1v1h1v-1h1v-1h1v1h5v-1h1v-1h1v1h1v-1h5v-1h1v1h1v-1h1v1h1v1h4v1h4v-1h1v1h14v-1h2v1h5v-1h1v1h6v-1h1v1h3v-2h1v2h1v-1h1v1h1v-1h1v1h1v-1h1v-1h1v1h2v-2h1v1h1v1h3v1h1v-1h1v1h1v-1h1v1h1v-1h4v1h4v-1h1v1h2v-1h1v1h1v-1h1v1h4v-1h1v1h2v-1h3v1h1v-1h2v1h4v-1h1v1h2v-1h2v1h1v4h-1v-1h-3v2h-1v-2h-1v1h-6v1h-1v-2h-1v1h-2v-1h-1v1h-5v-1h-1v1h-1v-1h-1v1h-3v-1h-1v1h-1v1h-1v-1h-5v1h-1v-1h-1v1h-1v-1h-4v-1h-1v1h-1v-1h-2v2h-2v-1h-2v-1h-2v1h-1v-1h-2v1h-1v-1h-1v2h-1v-2h-2v1h-2v-1h-1v1h-1v-1h-1v1h-1v-1h-4v1h-1v-1h-2v1h-1v-1h-2v1h-1v-1h-1v1h-1v-1h-2v1h-3v-1h-1v1h-1v-1h-1v1h-1v-1h-2v1h-5v1h-2v-2h-1v1h-2v1h-2v1h-1v-1h-3v-1h-1v1h-2v-1h-1v-1h-1v2h-1v-1h-2v1h-1v-1h-1v-1h-3v1h-4v1h-2v1h-1v-2h-1v1h-1v-1h-1v-1h-1v1h-2v-1h-1v1h-3v-1h-1v1h-1v-1h-1v1h-1v1h-1v-2h-1v1h-1v-1h-1v1h-1v-1h-2v1h-3v-1h-1v1h-2v-1h-3v3h-1v-3h-1v1h-1v2h-6v-1h-2v1h-1v-1h-4v-1h-3v1h-2v-2h-1v1h-4v-1h-2v1h-2v1h-2v-1h-10v1h-1v-1h-1v1h-1v-1h-1v2h-1v-2h-2v2h-1v-1h-1v-2h-1v1h-5v-1h-1v1h-1v-1h-1v1h-2v-1h-1v1h-1v-1h-1v1h-1v1h-1v-1h-6v-1h-1v1h-1v2h-1v-2h-9v1h-1v-1h-1v-1h-3v1h-3v2h-1v-3h-1v1h-1v-1h-1v1h-3v-1h-1v1h-3v-1h-1v1h-1v-1h-1v1h-1v-1h-2v1h-3v-1h-1v2h-1v-2h-2v1h-1v1h-1v-1h-2v-1h-2v1h-1v-1h-2v3h-1v-3h-1v1h-1v-1h-2v1h-2v-1h-6v1h-6v-1h-3v1h-17v-1h-1v2h-1v-1h-1v-1h-1v1h-2v1h-1v-2h-1v1h-1v-1h-1v1h-4v-1h-1v1h-3v-1h-2v1h-2v-1h-1v1h-1v-1h-2v1h-1v-1h-1v1h-2v1h-2v-1h-2v-1h-1v2h-1v-1h-2v-1h-1v2h-1v-1h-1v-1h-1v1h-4v-1h-1v1h-1v-1h-1v1h-3v-1h-2v2h-1v-2h-2v1h-1v-1h-1v1h-1v1h-1v-2h-1v2h-1v-1h-2v-1h-1v2h-2v-2h-1v1h-7v1h-1v-2h-1v3h-1v-2h-11v2h-1v-2h-4v1h-1v-2h-1v1h-3v-1h-1v1h-1v-1h-1v1h-6v-1h-1v1h-6v1h-1v-1h-2v2h-1v-2h-1v1h-1v-1h-2v-1h-1v2h-2v-1h-1v-1h-1v1h-1v1h-3v-1h-2v1h-1v-1h-4v-1h-1v1h-3v-1h-1v1h-1v1h-1v-1h-1v1h-1v1h-1v-1h-2v-2h-1v1h-3v1h-1v-1h-1v-1h-1v1h-3v-1h-2v1h-5v2h-1v-2h-2v-1h-1v1h-3v-1h-2v1h-1v-1h-1v1h-3v-1h-2v2h-1v-1h-1v-1h-1v1h-1v-1h-1v1h-3v-1h-1v1h-6v-1h-1v2h-1v-1h-4v1h-2v-1h-1v-1h-1v2h-1v-1h-7v-1h-3v1h-3v-1h-1v1h-1v-1h-1v1h-1v-1h-2v1h-1v-1h-1v1h-1v-1h-1v1h-2v-1h-1v1h-2v-1h-1v1h-1v1h-3v-1h-3v1h-1v-1h-1v1h-2v1h-3v-1h-1v1h-1v-1h-3v-1h-1v-1h-1v2h-2v-1h-3v-1h-1v1h-5v-1h-1v2h-1v-1h-2v1h-2v-1h-1v1h-2v-1h-1v-1h-1v1h-7v-1h-1v2h-1v-2h-1v1h-1v-1h-1v1h-4v-1h-2v1h-4v-1h-1v1h-5v1h-1v-1h-2v2h-1v-2h-4v1h-1v-1h-5v1h-1v-1h-4v1h-7v-1h-1v1h-1v-1h-2v1h-2v-2h-1v2h-1v-1h-1v-1h-1v1h-3v1h-1v1h-1v-1h-2v-1h-1v1h-1v-1h-1v-1h-1v2h-2v-1h-10v1h-1v-1h-1v-1h-1v1h-3v-1h-1v1h-1v-1h-1v1h-3v-1h-1v1h-3v-1h-2v1h-2v-1h-1v1h-4v1h-1v-1h-2v-1h-1v2h-1v1h-1v-2h-4v-1h-1v1h-2v1h-1v-2h-1v1h-1v-1h-1v1h-4v-1h-1v1h-6v-1h-1v3h-1v-2h-1v1h-1v-2h-2v1h-2v-1h-1v1h-1v-1h-1v1h-1v-1h-1v1h-2v-1h-3v1h-2v-1h-1v1h-2v-1h-3v2h-1v-1h-1v-1h-1v1h-4v-1h-5v1h-2v-1h-3v1h-6v-1h-1v2h-1v-2h-1v1h-1v1h-1v-1h-2v-1h-1v1h-2v-1h-2v1h-2v-1h-1v3h-1v-2h-2v1h-1v-1h-1v2h-1v-1h-1v-1h-2v-1h-1v1h-7v-1h-3v2h-1v-1h-3v-1h-1v1h-8v-1h-2v1h-4v1h-1v-1h-1v-1h-1v1h-2v2h-1v-2h-8v1h-2v-1h-3v-1h-2v2h-1v-1h-1v-1h-1v2h-1v-2h-2v2h-1v-1h-3v1h-1v-1h-2v2h-1v-2h-2v1h-1v-1h-8v1h-1v-1h-3v1h-1v-1h-1v-1h-2v1h-1v1h-1v-1h-2v-1h-1v1h-1v-1h-1v1h-3v-1h-1v1h-1v-1h-2v2h-1v-1h-3v-1h-2v1h-1v1h-1v-2h-1v2h-1v-2h-1v1h-1v1h-1v-2h-1v1h-1v-1h-1v2h-1v-2h-1v2h-2v-1h-1v1h-1v-1h-1v1h-1v-2h-1v1h-1v-1h-1v3h-1v-2h-2v2h-1v3h-1v-3h-2v-1h-1v1h-1v1h-1v-3h-1v2h-1v-2h-2v1h-1v-1h-1v1h-1v1h-1v-1h-1v-2h-1v1h-2v-1h-2v1h-1v-1h-2v1h-3v-1h-4v1h-1v-1h-1v1h-1v-1h-1v1h-3v-1h-2v1h-1v-1h-1v1h-2v-1h-1v1h-3v1h-1v-1h-2v1h-2v1h-1v-1h-1v1h-1v-1h-2v-1h-5v-1h-2v1h-4v-1h-1v1h-3v-1h-1v1h-5v-1h-1v1h-1v-1h-2v1h-2v-1h-3v1h-1v-1h-1v1h-2v-1h-2v1h-1v-1h-1v1h-2v-1h-1v1h-3v-1h-5v1h-1v-1h-1v1h-2v-1h-1v1h-10v1h-1v-1h-1v-1h-1v2h-1v-2h-1v1h-12v-1h-1v1h-1v-1h-1v2h-2v-1h-1v1h-1v-1h-1v-1h-1v1h-6v2h-1v-2h-1v-1h-1v1h-1v-1h-1v2h-1v-1h-1v1h-1v-2h-1v1h-2v-1h-1v1h-3v-1h-1v1h-1v1h-2v1h-1v-2h-1v1h-1v-1h-3zM277 759h3v-1h4v1h1v-1h1v1h2v-1h3v-1h1v1h1v1h3v-1h2v1h4v-1h2v-1h1v1h2v2h1v-1h1v-1h2v1h1v-1h1v1h5v1h1v-1h1v-1h1v1h3v1h1v-1h1v-1h1v2h1v-1h3v-2h1v2h4v-1h1v1h2v-1h1v1h1v-1h1v1h1v-2h3v-1h1v1h1v1h2v-1h3v1h3v1h4v-1h1v2h1v-1h3v-1h2v2h1v-1h5v1h1v-1h9v1h2v-1h2v1h1v-1h1v1h4v-1h1v-1h3v1h7v1h2v-2h1v1h2v-1h1v1h5v1h1v-1h4v-1h1v1h1v-1h1v1h2v-1h1v1h1v-1h1v1h1v-1h1v1h6v-1h1v1h2v1h1v-1h5v-1h1v1h1v-2h1v2h1v-1h1v1h4v-1h1v1h5v-1h2v1h7v-1h2v1h1v-1h3v-1h2v1h1v-1h1v-1h1v1h1v1h1v-1h1v1h1v1h1v-1h1v1h1v-1h1v1h4v-1h3v-1h2v1h1v2h1v-2h4v1h3v-2h1v1h1v1h1v-1h3v1h1v1h1v-1h1v-2h2v1h1v2h1v-3h1v1h1v-1h1v1h2v-1h3v-1h1v1h3v-1h2v3h1v-2h1v2h2v1h1v-1h3v-1h1v1h2v-1h1v2h1v-2h1v2h1v-1h1v-1h2v1h4v-1h1v1h2v-1h1v1h4v-1h2v1h3v-1h1v1h2v-1h1v1h10v1h2v-1h6v1h1v-1h6v1h1v-2h2v-1h1v1h1v1h5v1h1v-1h1v1h1v-1h1v-1h1v1h3v1h1v-2h2v1h1v-1h1v1h4v1h2v-1h1v-1h1v1h1v-2h1v2h2v-1h1v1h2v1h1v-1h5v-1h1v1h3v-1h1v1h6v1h1v-1h5v1h1v-1h3v1h1v-1h3v1h2v-1h2v-1h1v1h1v-1h2v1h1v-1h1v1h7v-1h2v2h1v-1h7v-1h3v1h1v-1h1v1h2v-1h1v1h1v-1h2v1h1v-1h2v-1h2v1h2v1h6v-1h2v1h1v-1h1v1h1v-1h1v1h3v-1h1v2h2v-2h1v1h1v-1h1v1h1v-1h1v1h1v-1h1v1h2v-1h1v1h1v-1h1v1h2v-1h1v1h7v-1h1v1h1v-1h1v-2h1v1h2v1h1v-2h1v1h3v1h3v-1h1v1h1v1h1v-1h1v-1h2v1h1v1h1v-1h1v1h1v-1h2v1h3v1h1v-2h1v1h3v-1h1v1h4v-1h1v1h2v1h1v-1h2v1h1v-1h5v-1h2v1h2v-2h1v3h1v-1h8v1h1v-1h11v1h1v-1h3v-1h2v1h1v-1h1v1h3v-1h1v1h13v1h1v-2h1v1h2v1h1v-1h1v-1h2v1h1v1h1v-1h19v1h1v-1h2v1h1v-1h1v1h1v-1h1v1h1v-1h2v-2h1v1h1v1h3v1h1v-1h6v-1h2v-2h1v3h2v-1h1v1h1v-1h1v1h2v-2h1v1h3v1h5v-1h1v1h3v-1h3v1h1v-1h1v1h6v1h1v-1h1v-1h1v1h1v-1h1v1h1v1h1v-2h1v1h1v-1h1v1h1v1h1v-2h1v1h1v-1h2v-1h2v1h1v1h1v-1h1v2h1v-2h2v1h2v-3h1v3h2v-1h1v1h3v-1h1v2h1v-1h1v-1h1v1h3v-1h2v1h3v-1h1v1h2v-1h2v1h2v-1h1v1h1v-1h2v2h1v-1h4v1h1v-1h1v1h1v-1h1v-1h1v1h11v-1h1v1h15v1h1v-1h10v-1h2v1h1v1h2v-1h1v-1h1v1h2v-1h1v2h1v-1h3v-1h3v1h3v1h1v-1h7v1h2v-1h2v1h1v-1h1v1h1v-1h1v1h1v-1h7v1h1v-1h1v1h1v-1h1v1h2v-1h1v1h1v-1h7v1h1v-2h1v1h1v1h1v-1h4v-1h1v2h1v-1h1v-1h1v-1h2v1h1v1h2v-1h1v1h1v-1h1v-1h1v2h1v-1h1v1h3v-1h1v1h1v1h1v-1h1v-1h2v1h2v-1h1v1h6v-1h1v1h1v-1h1v1h3v1h2v-1h2v-1h1v1h2v-1h1v1h3v1h1v-1h1v-1h2v1h3v-1h2v1h6v-2h1v2h3v-1h1v1h2v-2h1v1h2v1h1v-1h1v1h1v-1h3v1h1v-1h5v1h3v-1h1v1h1v-1h1v-1h1v1h4v-1h1v1h3v-1h1v1h1v1h3v-1h1v1h2v-1h1v1h4v-1h1v1h2v-1h4v2h1v-2h1v-3h1v3h3v1h1v-1h2v-2h1v1h1v2h1v-2h1v1h1v1h6v-1h2v1h3v-2h1v1h1v1h1v-1h2v1h2v-1h1v1h1v-1h1v1h2v-1h2v-1h1v2h4v-1h2v-1h1v1h1v1h1v1h1v-1h7v1h1v-1h3v-1h1v1h1v1h2v-1h4v1h1v-1h3v1h1v-1h6v-1h1v1h1v-1h1v1h1v-1h1v1h1v-1h1v1h5v1h1v-2h1v1h6v1h1v-1h4v-1h2v1h1v-2h1v2h1v-2h1v2h4v-1h1v1h2v-1h1v2h1v-1h2v1h1v-1h3v-1h1v-1h1v2h1v1h1v-3h1v2h5v-1h1v1h1v-1h1v1h5v-1h1v1h2v-1h1v-1h1v2h2v-1h3v1h3v-1h1v1h1v-1h2v1h1v-1h1v1h2v-1h2v1h1v-1h2v1h1v4h-1v1h-1v-1h-1v1h-1v-1h-4v1h-1v-1h-4v1h-1v-1h-1v1h-2v-1h-1v2h-1v-2h-2v-1h-1v1h-1v1h-1v-1h-7v-1h-1v1h-3v-1h-1v2h-1v-1h-1v-1h-2v1h-4v1h-2v-1h-2v-1h-1v1h-1v-1h-1v1h-5v-1h-1v1h-1v1h-1v-2h-1v2h-1v-1h-3v1h-1v-1h-4v-1h-1v1h-2v1h-1v-1h-5v-1h-1v1h-2v-1h-1v1h-2v-1h-1v1h-2v2h-1v-2h-1v1h-1v-1h-1v-1h-1v1h-1v-1h-2v1h-6v-1h-1v1h-1v-1h-5v1h-3v-1h-3v1h-2v-1h-1v1h-1v-1h-1v1h-1v1h-1v-1h-3v1h-1v-1h-1v1h-1v-1h-3v-1h-1v1h-1v2h-1v-2h-2v-1h-1v1h-1v1h-4v-1h-3v1h-1v-1h-3v1h-1v-2h-1v1h-4v1h-1v-1h-1v1h-3v-1h-2v1h-1v1h-3v-1h-1v-1h-2v1h-1v1h-1v-1h-1v-1h-1v1h-2v-1h-3v-1h-1v1h-3v1h-1v-1h-1v-1h-1v1h-4v1h-2v-1h-1v1h-3v1h-1v-1h-1v5h-1v-5h-3v-1h-2v1h-1v-1h-2v1h-1v-1h-2v-1h-1v1h-1v-1h-1v1h-6v1h-1v-1h-1v2h-1v-2h-1v1h-1v1h-1v-2h-1v1h-1v-1h-1v1h-1v-1h-1v1h-1v-1h-2v1h-1v-1h-1v-1h-1v1h-1v-1h-1v1h-3v2h-1v-3h-1v1h-7v1h-1v-1h-5v-1h-2v1h-1v1h-1v1h-1v-2h-2v1h-1v-2h-1v1h-5v1h-1v-1h-3v1h-1v-2h-1v2h-1v-1h-4v1h-1v-1h-5v1h-2v-1h-1v1h-3v-1h-1v-1h-1v1h-2v1h-1v-1h-2v-1h-1v1h-7v-1h-2v1h-2v-1h-2v1h-2v-1h-1v1h-4v1h-1v-2h-1v1h-2v-1h-1v1h-1v-1h-5v1h-1v-1h-1v1h-5v-1h-1v1h-1v1h-1v-1h-1v1h-1v1h-1v-1h-2v-1h-2v-1h-1v1h-2v1h-1v-1h-6v1h-1v-1h-1v-1h-2v1h-2v1h-1v-1h-1v1h-1v-1h-10v1h-1v-1h-6v-1h-2v1h-8v1h-1v-1h-1v1h-1v-1h-2v1h-1v-1h-1v1h-1v-2h-1v1h-1v1h-1v-1h-4v1h-2v-1h-1v1h-1v-1h-1v2h-1v-2h-1v1h-1v-1h-2v1h-2v-1h-1v1h-4v-2h-1v1h-1v1h-1v-1h-1v1h-1v-1h-1v1h-1v-1h-1v1h-3v1h-2v-2h-3v1h-1v-1h-1v1h-2v-1h-2v1h-2v-1h-3v-1h-1v1h-4v1h-1v-1h-5v1h-1v1h-1v-1h-1v-1h-1v1h-3v-1h-8v1h-1v-1h-1v1h-2v-1h-2v1h-1v-1h-4v1h-1v-1h-2v1h-2v-1h-1v1h-2v-1h-1v1h-3v-1h-3v-1h-1v1h-13v-1h-1v1h-1v-1h-1v1h-1v-1h-1v1h-1v-1h-1v1h-7v-1h-1v1h-1v-1h-1v1h-9v-1h-2v1h-7v-1h-1v1h-2v-1h-1v1h-2v-1h-2v2h-1v-1h-3v1h-1v-1h-2v-1h-1v1h-1v-1h-1v1h-4v-1h-1v1h-3v-1h-1v1h-5v-1h-1v1h-2v-1h-1v1h-2v-1h-1v1h-3v-1h-2v1h-5v-1h-3v1h-4v-1h-1v1h-5v1h-1v1h-1v-2h-1v1h-1v-1h-3v1h-1v-1h-3v-1h-1v1h-2v1h-4v-1h-2v1h-1v-1h-1v1h-2v1h-2v2h-1v-2h-4v1h-1v-1h-1v-2h-1v-1h-1v1h-2v2h-1v-1h-2v-1h-2v-1h-1v1h-1v-1h-2v1h-1v1h-1v-1h-2v2h-1v-1h-1v-1h-3v-1h-1v2h-1v-1h-6v1h-1v1h-1v-3h-1v1h-1v1h-1v-1h-2v1h-1v-1h-3v1h-1v-1h-1v1h-1v1h-1v-1h-1v1h-1v-1h-1v-1h-1v1h-3v-1h-1v1h-1v-2h-1v1h-1v1h-2v2h-1v-2h-1v-2h-1v1h-1v1h-1v-1h-1v-1h-1v1h-1v1h-1v-1h-2v1h-1v-2h-1v1h-3v-1h-1v1h-1v-1h-1v2h-1v-1h-1v1h-1v-1h-1v1h-2v-1h-7v-1h-1v2h-1v-1h-6v1h-1v-1h-1v1h-2v-1h-1v1h-1v-1h-7v1h-1v-1h-3v-1h-1v1h-9v1h-2v-1h-5v-1h-1v1h-1v-1h-1v1h-6v-1h-1v2h-2v-1h-3v-1h-1v1h-3v-1h-1v1h-7v-1h-1v1h-6v-1h-1v1h-3v-1h-1v1h-2v1h-1v-1h-1v-1h-1v1h-5v1h-1v-1h-1v-1h-2v1h-2v-1h-2v1h-3v2h-1v-2h-2v2h-1v-2h-6v1h-1v-1h-1v1h-2v-1h-4v1h-1v-1h-2v1h-1v-1h-3v-1h-1v3h-1v1h-1v-3h-1v2h-1v-1h-1v1h-1v-1h-1v2h-1v-3h-1v2h-1v-2h-2v4h-1v-2h-1v-2h-1v1h-1v1h-1v-1h-2v1h-1v-1h-2v-1h-1v-1h-1v1h-5v-1h-1v2h-2v-1h-1v1h-1v-2h-1v2h-3v-1h-1v1h-1v-1h-1v2h-1v-2h-1v1h-1v-1h-1v1h-2v-1h-2v1h-2v1h-1v-1h-1v-1h-1v1h-1v-1h-1v2h-2v-1h-1v1h-2v-1h-2v1h-1v-1h-2v-2h-1v1h-2v-1h-2v1h-2v1h-1v-1h-1v1h-1v-1h-1v-1h-1v1h-1v-1h-1v1h-3v-1h-1v2h-1v-1h-3v1h-1v-1h-1v1h-1v-1h-1v1h-1v-1h-2v-1h-2v1h-1v1h-1v-1h-1v1h-2v1h-1v-3h-2v1h-2v-1h-1v1h-2v-1h-1v2h-3v-1h-3v1h-1v-1h-2v-1h-1v1h-1v2h-1v-2h-3v-1h-1v1h-3v-1h-1v1h-1v-1h-1v1h-1v-1h-1v1h-3v1h-1v-1h-2v-1h-1v1h-1v-1h-1v1h-3v-1h-3v1h-1v-1h-2v1h-6v-1h-1v3h-1v-2h-1v1h-1v-1h-3v-1h-1v1h-3v1h-1v-1h-1v-1h-1v1h-7v1h-1v-1h-1v1h-1v-1h-1v1h-1v-1h-1v1h-3v1h-1v1h-2v-2h-1v-1h-1v1h-4v-1h-1v2h-1v-2h-3v1h-1v-2h-2v1h-3v-1h-1v2h-1v-1h-1v-1h-1v1h-2v-1h-1v1h-4v1h-1v-1h-4v1h-2v1h-1v-2h-3v2h-1v-1h-2v-1h-3v1h-1v-1h-2v1h-1v-1h-2v-1h-1v1h-1v1h-1v-1h-3v1h-1v-1h-7v1h-2zM277 789h1v-1h1v-1h1v2h1v-1h2v1h1v1h2v-1h3v-1h2v1h3v-1h2v2h1v-1h6v-1h1v1h2v-2h1v2h1v-1h1v2h1v-1h1v-1h2v1h1v-1h5v1h1v-2h1v3h1v-1h1v-1h1v1h1v-1h1v2h1v-1h3v1h1v-1h3v1h1v-1h1v1h3v-1h3v1h1v-1h1v1h1v-1h3v1h2v-1h2v-1h1v1h2v-1h1v2h1v-1h1v1h1v-1h2v1h1v-1h6v1h2v-1h1v1h1v-1h2v-1h1v1h1v1h1v-1h3v-1h1v-1h2v1h2v1h2v1h1v-1h1v-1h1v1h2v1h1v-1h7v1h1v-2h1v1h1v1h1v-1h3v1h1v-1h1v1h1v-1h1v1h2v-1h1v1h2v-1h3v1h1v-1h1v1h1v-1h2v1h3v-1h1v1h2v-1h1v1h1v-2h1v1h1v1h1v-2h1v1h4v-1h2v-1h4v1h1v-1h1v1h1v-1h1v1h1v1h4v-1h1v1h1v-1h1v1h1v-1h1v1h1v-1h3v1h1v-1h1v1h1v-1h2v1h6v1h1v-1h5v-1h1v1h3v-1h2v1h3v1h1v-1h3v-1h1v1h1v-2h1v2h1v-1h2v1h2v-1h2v-1h1v1h2v1h2v-1h1v1h3v-1h2v1h2v-1h3v1h1v1h1v-3h1v2h1v-1h1v-1h1v2h3v-1h1v1h1v-1h1v1h1v-1h3v1h1v-1h1v1h2v-1h2v2h1v-1h7v-1h2v1h4v1h1v-1h3v1h1v-1h1v1h3v-1h3v-1h1v1h3v1h1v-1h1v1h2v-1h2v-1h1v1h1v1h1v-1h2v-1h1v1h1v1h1v-1h3v-1h1v1h1v1h1v-1h1v1h1v-1h2v1h5v-1h5v1h1v-1h4v1h2v-1h1v1h1v-1h4v1h2v-1h2v1h2v-1h5v1h2v-1h1v1h1v-1h3v1h3v-1h4v1h1v-1h3v1h1v-1h1v1h2v-2h1v1h4v-1h1v1h1v-1h1v1h2v-1h1v1h2v1h1v-1h2v1h1v-1h1v-1h1v2h2v-1h3v1h3v-2h1v1h6v-1h1v2h1v-1h1v-1h1v1h3v1h1v-1h2v1h1v-1h2v-1h1v1h4v1h1v-2h1v1h1v-1h1v2h1v-1h1v-1h1v1h1v-1h1v1h1v-1h1v-1h1v2h1v-1h1v2h1v-1h2v-1h4v1h3v-1h1v1h3v-1h1v2h1v-1h1v-1h1v1h2v-1h1v1h1v1h1v-1h2v-1h1v2h1v-1h1v1h1v-2h1v1h5v-1h1v1h2v-1h1v1h3v1h1v-1h12v-1h1v2h1v-1h12v1h1v-2h1v1h2v-1h2v1h1v-1h1v2h1v-1h1v-1h1v1h1v-1h1v1h2v1h1v-2h2v1h7v-1h1v-1h1v1h1v1h9v1h3v-1h1v-1h1v1h1v1h2v-1h1v1h1v-1h5v1h1v-1h2v1h2v-1h1v1h1v-1h1v1h1v-1h1v1h1v-1h5v1h1v-1h1v1h1v-1h10v-1h1v1h2v-2h1v2h11v1h1v-1h13v1h1v-1h2v1h1v-1h2v1h1v-1h1v1h1v-1h1v1h1v-2h1v2h1v-2h1v2h1v-2h1v1h1v1h2v-3h1v2h2v1h1v-1h1v-1h1v2h1v-1h2v-1h1v1h3v-1h1v1h5v-1h3v1h3v-2h1v2h1v-1h1v1h2v1h1v-2h3v-1h1v3h2v-1h4v1h1v-2h1v1h1v-2h1v2h1v-1h1v2h1v-1h2v-1h1v1h7v-2h3v1h3v-2h1v1h1v-1h1v1h1v2h1v-2h1v2h1v-1h1v1h1v-1h1v1h1v-1h1v1h1v-1h4v1h3v-1h1v1h1v-1h1v1h1v1h1v-1h2v-1h1v1h4v-1h1v1h1v-1h1v1h3v1h1v-1h1v-1h1v1h8v1h1v-1h1v1h1v-1h8v1h1v-1h3v1h2v-1h2v1h1v-1h8v1h1v-3h1v2h3v1h1v-1h7v1h1v-1h4v1h1v-1h2v1h2v-2h1v1h1v1h1v-1h3v1h1v-1h4v1h1v-1h8v1h1v-1h1v1h1v-1h1v1h1v-1h5v1h1v-1h1v1h1v-1h1v1h1v-1h1v1h1v-1h2v1h2v-1h3v1h1v-1h1v1h1v-1h1v-1h1v2h1v-1h1v-1h1v1h5v1h1v-1h1v-1h4v1h2v-1h2v1h1v-1h1v1h1v-1h1v1h1v-1h1v1h7v-1h1v1h3v-1h1v1h3v-3h1v4h1v-2h1v1h9v1h2v-1h1v-1h1v1h1v-1h1v1h2v1h2v-2h1v1h1v-1h1v1h1v-1h1v1h2v1h1v-1h1v-1h1v1h1v-1h1v1h1v-1h2v1h2v-1h1v-1h1v2h1v-1h1v1h1v-1h2v1h1v-1h1v1h1v-1h2v1h1v-1h1v1h1v-1h3v1h2v-1h1v1h2v1h1v-1h4v-1h1v2h1v-1h1v-1h2v1h1v-1h1v1h3v1h1v-1h7v1h1v-1h1v1h1v-2h1v1h1v-2h1v2h2v1h1v-1h1v-1h1v2h2v-1h1v1h1v-1h1v1h1v-1h1v-1h1v1h5v1h1v-1h5v-2h1v2h7v1h1v-1h1v1h1v-1h2v1h1v-1h3v-3h1v3h2v1h1v-1h2v1h2v-1h1v1h1v-1h2v1h1v-1h1v1h1v-1h1v1h2v-1h1v1h3v-1h8v1h1v-1h3v1h1v-1h1v1h1v-1h2v1h1v-1h1v1h1v-1h1v1h1v-1h6v-1h1v1h3v1h1v-1h5v-1h1v1h2v-1h1v1h1v1h1v-1h5v1h1v-1h3v1h1v-1h1v1h1v-1h2v1h1v-1h1v1h1v-1h3v1h1v-1h6v-2h1v2h4v1h1v-2h2v1h1v5h-2v-1h-6v1h-1v-1h-3v1h-2v-1h-5v1h-1v-1h-1v1h-1v-1h-3v1h-3v-1h-1v1h-1v-1h-3v1h-1v-1h-3v1h-5v-1h-1v1h-4v-1h-2v1h-1v-1h-1v1h-3v-2h-1v1h-5v1h-1v-1h-1v2h-1v-2h-3v1h-1v-1h-2v1h-1v-1h-1v1h-2v-2h-1v1h-4v-1h-2v1h-4v1h-1v-1h-4v1h-3v-2h-1v1h-2v1h-1v-1h-2v-1h-2v2h-5v-1h-1v-1h-1v1h-1v1h-6v-1h-1v1h-4v-1h-2v1h-2v-1h-2v1h-1v-1h-3v1h-1v-1h-3v1h-2v-1h-1v1h-2v-1h-7v1h-1v-1h-5v1h-3v-1h-4v1h-1v-1h-3v1h-2v-1h-4v1h-1v-1h-3v1h-4v1h-1v-1h-3v-1h-5v1h-5v1h-1v-2h-1v1h-2v1h-1v-2h-2v1h-1v-1h-2v1h-1v1h-2v-1h-3v-1h-1v1h-1v-1h-1v1h-6v-1h-2v1h-2v-1h-2v1h-1v-1h-1v1h-2v-1h-4v1h-4v-1h-1v1h-4v-1h-1v1h-2v-1h-4v1h-1v-1h-1v1h-3v-1h-1v1h-1v-2h-1v1h-2v1h-1v-1h-5v1h-1v-1h-3v1h-1v1h-1v-1h-1v-1h-2v1h-1v-1h-4v1h-1v-1h-1v1h-2v-1h-1v1h-1v-1h-6v1h-2v-1h-2v2h-1v-1h-1v-1h-13v-1h-1v1h-4v-1h-1v1h-2v1h-2v-1h-1v1h-1v-1h-2v1h-2v-1h-1v1h-1v-1h-3v1h-2v-1h-1v2h-1v-1h-1v-1h-1v1h-1v-1h-2v1h-1v-1h-1v1h-1v-1h-2v1h-1v-1h-1v1h-1v-1h-2v1h-1v-1h-1v1h-1v-1h-6v1h-1v-1h-1v-1h-1v1h-11v1h-1v-1h-1v1h-1v-1h-4v1h-1v-1h-1v1h-1v-1h-2v-1h-1v1h-1v1h-3v-1h-1v2h-1v-1h-1v-1h-1v1h-6v-1h-1v1h-1v-1h-1v1h-2v-1h-3v1h-2v-1h-4v1h-2v1h-1v-2h-4v2h-1v-1h-1v1h-1v-2h-1v1h-1v2h-2v-1h-1v-1h-6v-1h-3v1h-1v-1h-2v1h-1v-1h-1v1h-2v-1h-1v2h-1v-1h-1v-1h-1v1h-4v-1h-1v1h-1v1h-1v-1h-7v-1h-1v1h-2v-1h-1v1h-2v1h-1v-1h-2v-1h-1v-1h-1v2h-1v-1h-1v1h-1v1h-1v-1h-6v-1h-2v2h-3v-3h-1v2h-1v-1h-2v1h-2v-1h-4v-1h-1v1h-9v-1h-1v1h-1v1h-1v-1h-3v-1h-1v1h-1v-1h-1v1h-7v1h-2v-1h-3v1h-1v-1h-1v1h-1v-1h-4v1h-1v-1h-2v1h-1v-1h-5v1h-1v-1h-3v1h-1v-1h-9v2h-1v-2h-5v-1h-2v1h-5v-1h-1v2h-1v-1h-3v1h-1v-1h-2v1h-1v-1h-2v1h-1v-2h-1v2h-1v-1h-3v1h-1v1h-1v-1h-3v-1h-5v1h-1v-1h-2v1h-1v-1h-1v1h-3v-1h-1v1h-3v-1h-2v2h-2v-3h-1v1h-1v1h-2v-1h-1v1h-1v-1h-1v1h-1v-1h-1v2h-1v-2h-1v1h-2v-1h-2v1h-1v-1h-3v2h-1v-2h-1v1h-1v-1h-1v1h-2v-2h-1v2h-3v-1h-1v1h-1v-1h-1v2h-1v-2h-1v1h-1v-1h-4v1h-1v-1h-2v1h-1v1h-1v-2h-1v1h-1v-1h-1v1h-1v-1h-1v1h-1v-1h-1v1h-3v-1h-1v2h-1v-2h-1v1h-11v-1h-1v-1h-1v3h-1v-1h-1v2h-1v-1h-1v1h-1v-1h-1v-1h-6v-1h-3v1h-3v-1h-4v1h-1v-1h-1v1h-2v-1h-2v1h-1v1h-1v-2h-1v1h-1v-1h-2v1h-1v-1h-3v1h-1v-1h-2v1h-1v-1h-3v-1h-1v1h-1v1h-1v-1h-1v1h-2v-1h-1v1h-1v-1h-1v1h-1v-1h-1v1h-1v-1h-2v1h-5v-1h-1v1h-2v-1h-3v1h-2v-1h-1v1h-1v-1h-11v1h-1v-1h-2v-1h-2v1h-1v-1h-1v1h-6v-1h-1v1h-6v1h-2v-1h-1v-1h-1v1h-2v1h-1v-1h-1v2h-1v-1h-1v-1h-2v1h-1v-1h-1v1h-5v-1h-2v1h-2v-1h-3v1h-1v-1h-5v1h-1v-1h-2v1h-1v-1h-1v1h-1v-1h-5v1h-1v-1h-3v1h-1v-1h-1v-1h-1v1h-3v1h-1v-1h-5v1h-1v-1h-4v1h-2v-1h-1v1h-2v-1h-2v1h-1v1h-1v-1h-2v-1h-1v1h-3v-2h-1v2h-1v1h-1v-2h-1v1h-1v-1h-1v1h-5v1h-1v-1h-2v1h-1v1h-1v-2h-1v1h-1v-1h-2v-1h-1v1h-4v-1h-3v-1h-1v1h-2v2h-4v-1h-3v-1h-3v1h-3v-1h-2v1h-2v-1h-2v1h-1v-1h-1v1h-1v-1h-1v1h-3v-1h-4v1h-1v-1h-6v1h-3v-1h-1v1h-2v-1h-1v1h-1v-1h-3v1h-1v-1h-1v1h-4v1h-1v-1h-1v1h-2v1h-1v-1h-2v-2h-1v2h-1v-1h-2v1h-1v-1h-1v-1h-1v1h-1v-1h-5v1h-1v-1h-1v2h-1v-2h-2v-1h-1v1h-2v1h-1v-1h-9v1h-2v-1h-8v-1h-1v1h-3v1h-3v-1h-8v1h-1v-1h-2v1h-3v1h-1v-1h-1v-1h-1v1h-1v-1h-8v1h-1v-1h-7v1h-2v-2h-1v1h-6v1h-1v-1h-4v1h-1v-1h-1v1h-1v-2h-1v2h-1v-1h-2v1h-1v-1h-3v1h-1v-1h-2v1h-3v-2h-1v1h-2v1h-1v-1h-1v1h-1v-1h-1v1h-2v-1h-2v1h-2v1h-1v-2h-1v2h-1v-2h-1v2h-1v-1h-2v-2h-1v2h-1v-1h-1v1h-3v-2h-1v2h-5v-1h-2v1h-2v-1h-3v1h-1v-1h-1v1h-1v1h-1v-2h-1v1h-1v-1h-1v1h-3v-1h-1v1h-1v2h-1v-2h-2zM277 820h1v-1h1v1h3v-1h1v1h3v-1h1v-1h1v1h2v-1h1v1h3v-2h1v3h4v-1h4v-1h1v1h5v1h1v-1h2v1h1v-1h3v-1h1v1h5v1h1v-1h1v1h1v-1h3v1h1v-1h1v1h1v-1h2v-1h1v1h1v1h1v-1h2v1h2v-2h1v1h2v1h1v-1h2v-1h2v-1h1v2h2v1h1v-1h1v1h1v-1h5v-1h2v1h9v1h1v-1h7v-2h2v2h10v1h1v-1h1v-1h1v1h1v1h2v-1h6v1h2v-1h2v1h1v-1h1v1h1v-1h4v1h1v-1h3v1h3v-1h1v1h1v-1h1v1h6v-1h2v-1h1v1h1v-1h1v-1h1v2h2v-1h1v1h1v1h1v-1h3v1h2v-1h1v1h1v-1h2v-1h3v2h1v-2h1v1h1v1h2v-1h7v1h1v-1h1v1h2v-1h2v1h3v-1h2v1h2v-1h1v1h2v-1h2v1h2v-1h1v1h3v-1h2v1h4v-1h3v1h1v-1h1v1h5v-1h1v1h1v-1h9v1h1v-1h1v1h1v-2h1v1h2v1h1v-1h1v1h1v-1h1v1h1v-1h2v1h1v-1h1v1h1v-2h1v2h1v-1h4v1h2v-1h9v1h2v-1h1v1h3v-1h1v1h3v-1h4v-2h1v2h8v1h1v-2h1v1h4v-1h1v1h1v1h1v-1h8v1h1v-2h2v1h1v1h3v-1h8v1h2v-1h2v-1h1v1h3v1h1v-1h3v-1h1v1h1v1h2v-1h2v1h1v-4h1v3h2v1h2v-1h2v-1h1v1h5v-1h1v1h1v1h1v-1h1v-1h1v1h3v1h2v-1h5v-1h1v1h1v1h1v-1h2v1h1v-2h1v1h2v-1h3v2h1v-1h1v1h3v-1h1v1h1v-2h1v1h1v1h1v-1h3v1h1v-1h1v1h3v-1h1v-1h1v1h1v1h1v-1h1v1h2v-1h1v1h2v-1h1v1h1v-1h2v1h2v-1h3v1h1v-1h4v1h1v-1h1v1h2v-1h2v1h1v-1h3v1h1v-1h1v1h3v-1h2v-1h1v1h2v1h3v-1h1v1h3v-4h1v3h1v1h2v-1h2v-1h1v1h2v1h1v-1h1v-1h1v1h1v-1h1v1h2v1h2v-1h1v1h1v-1h1v1h1v-1h1v1h1v-1h2v1h1v-1h1v1h2v-1h2v1h2v-1h2v1h1v-1h5v1h1v-1h4v1h2v-1h4v1h1v-1h2v1h1v-1h1v-2h1v2h1v1h1v-1h8v-1h1v1h2v-1h2v1h3v-1h1v1h4v-1h1v1h1v1h1v-1h1v-1h1v1h1v1h1v-1h2v1h2v-1h1v1h1v-1h1v1h2v-1h1v1h1v-1h8v1h1v-2h1v1h1v1h2v-2h1v1h1v1h1v-3h1v2h2v-2h1v3h1v-1h3v-1h1v1h4v1h1v-1h2v-1h2v1h1v-1h1v1h7v1h1v-1h1v1h2v-1h2v1h1v-1h3v1h2v-1h2v1h2v-1h2v1h1v-1h1v1h2v-1h1v1h2v-1h4v1h6v-2h1v1h1v1h3v-1h3v1h2v-1h6v1h3v-1h2v1h1v-1h1v1h1v-1h2v1h1v-1h1v1h2v-1h4v1h1v-1h2v1h1v-1h1v1h2v-1h4v1h1v-1h1v1h5v-1h1v1h1v-1h1v1h1v-1h1v1h2v-1h1v1h5v-1h2v1h1v-1h2v1h1v-1h2v-1h3v1h3v1h1v-2h1v1h4v1h1v-2h1v1h6v-1h2v1h2v-1h2v1h1v-1h1v2h1v-1h3v-2h1v2h3v-1h2v1h1v-1h2v2h1v-1h3v-1h1v1h1v1h1v-1h2v-1h1v1h3v-1h1v2h2v-1h9v1h2v-2h1v1h1v1h3v-1h1v-1h1v1h6v-1h1v1h1v-1h1v1h1v-1h1v1h1v-1h1v1h1v-1h1v2h1v-1h1v1h1v-1h3v-1h2v1h1v-1h1v1h9v1h2v-1h1v-2h1v2h1v-1h4v1h1v1h1v-1h1v1h1v-1h3v1h2v-1h1v1h1v-1h3v1h1v-2h1v2h1v-1h1v1h1v-1h2v1h2v-1h6v1h1v-1h2v1h1v-1h1v1h1v-1h4v-2h1v1h1v1h4v1h1v-1h3v1h2v-3h1v2h2v1h1v-1h2v1h1v-1h1v1h5v-1h1v1h2v-1h1v1h5v-1h1v1h1v-1h1v1h3v-1h1v1h5v-1h2v1h1v-1h1v1h2v-1h2v1h1v-2h1v2h1v-2h1v1h1v1h1v-1h2v-1h1v1h1v-1h1v1h2v-1h2v2h1v-2h1v-3h1v4h3v1h2v-1h2v1h2v-1h2v1h1v-1h1v1h1v-1h1v1h3v-1h2v1h1v-1h1v1h3v-1h3v1h3v-1h1v1h1v-1h5v-1h1v-2h1v2h3v2h2v-2h1v1h2v1h2v-1h7v-1h3v1h2v1h1v-1h1v-1h2v2h1v-1h3v-1h1v2h1v-1h6v1h3v-1h1v-1h1v1h4v1h1v-1h2v-1h2v2h1v-2h1v1h3v1h2v-1h1v1h1v-1h1v1h1v-1h3v1h1v-1h1v1h1v-1h1v1h1v-1h1v-1h2v-1h2v1h1v1h7v-2h1v-1h1v-1h1v2h3v-1h1v1h1v2h1v-1h1v2h1v-1h1v-2h1v3h1v-1h1v1h1v-1h5v1h1v-1h8v1h1v-1h2v1h2v-1h1v1h1v-2h1v1h2v1h3v-1h1v1h1v-1h1v1h2v-1h1v1h3v-1h2v1h1v-1h2v1h1v-1h1v1h1v-1h2v1h2v-1h3v6h-1v-2h-4v1h-2v-1h-3v1h-1v-1h-3v1h-2v-1h-5v1h-1v-1h-1v1h-2v-1h-1v1h-1v-1h-1v2h-1v-2h-4v1h-1v-1h-2v1h-1v-1h-2v1h-2v-1h-1v1h-1v1h-1v-1h-1v-1h-1v1h-1v-1h-1v1h-7v1h-1v1h-1v-1h-1v1h-1v-1h-1v1h-1v-1h-1v1h-1v-3h-2v1h-1v2h-2v-1h-4v-2h-1v3h-2v-1h-1v-1h-1v1h-1v-1h-4v-1h-1v1h-2v-1h-2v1h-1v-1h-4v3h-1v-2h-2v-1h-1v1h-6v-1h-2v1h-4v-1h-1v3h-1v-2h-4v-1h-1v1h-8v-1h-1v1h-3v1h-1v-1h-2v1h-1v-1h-2v-1h-1v1h-3v-1h-1v2h-1v-1h-5v1h-1v-2h-1v2h-1v-1h-1v2h-1v-2h-1v1h-1v-1h-3v-1h-3v1h-2v1h-1v-1h-2v1h-1v-2h-1v1h-1v-1h-2v1h-1v-1h-1v1h-2v2h-1v-2h-3v2h-1v-2h-1v-1h-1v1h-2v-1h-2v2h-1v-2h-1v1h-4v1h-1v-1h-1v-1h-1v2h-1v-1h-1v1h-1v1h-1v-2h-2v1h-1v-1h-1v1h-1v-2h-1v1h-1v-1h-1v1h-1v-1h-1v1h-2v-1h-1v1h-2v-1h-2v2h-1v-1h-1v-1h-2v1h-1v-1h-4v1h-1v-1h-4v1h-1v-1h-1v1h-1v-1h-5v1h-1v-1h-2v1h-1v-1h-3v1h-3v-1h-2v1h-1v-1h-2v1h-7v-1h-2v1h-1v1h-1v2h-1v-1h-1v-2h-2v-1h-1v1h-1v-1h-1v2h-1v-2h-1v1h-1v-1h-1v1h-2v-1h-1v1h-1v-1h-1v1h-2v-1h-1v1h-5v-1h-1v1h-1v-1h-4v1h-2v-1h-1v2h-1v-1h-2v-1h-2v1h-2v-1h-1v2h-1v-1h-3v1h-2v-1h-7v-1h-1v1h-2v1h-1v-2h-1v1h-8v1h-1v-2h-1v1h-3v-1h-1v1h-2v1h-1v-1h-1v-1h-1v1h-6v1h-2v-2h-3v1h-4v1h-1v-1h-1v1h-1v-2h-1v1h-1v-1h-2v1h-2v-1h-1v1h-4v-1h-1v3h-1v-2h-1v1h-1v-1h-1v1h-1v1h-1v-2h-1v1h-3v1h-2v-2h-1v1h-1v-1h-5v3h-1v-3h-1v-1h-1v2h-1v-1h-1v1h-2v-2h-1v2h-1v-1h-9v1h-1v-1h-6v-1h-1v3h-1v-2h-1v1h-4v-1h-2v-1h-1v1h-2v-1h-1v1h-1v-1h-1v1h-1v-1h-2v1h-1v-1h-4v1h-1v-1h-2v1h-1v-1h-1v1h-2v-1h-1v1h-1v-1h-1v1h-6v-1h-1v1h-1v-1h-1v1h-1v-1h-1v1h-1v-1h-4v1h-4v-1h-1v1h-2v-1h-2v1h-2v1h-1v1h-1v-2h-2v-1h-1v1h-1v-1h-1v1h-1v-1h-1v1h-1v-1h-1v1h-1v-1h-3v1h-2v-1h-2v1h-1v-1h-3v1h-1v-1h-2v1h-4v1h-1v-2h-1v1h-1v-1h-1v1h-1v-1h-6v1h-3v-1h-1v1h-3v-1h-1v1h-4v1h-2v-2h-3v1h-6v1h-3v-1h-1v-1h-1v1h-3v-1h-1v1h-3v-1h-1v1h-5v1h-1v-1h-1v-1h-1v1h-3v-1h-2v1h-1v1h-1v-1h-1v-1h-2v1h-5v-1h-1v1h-2v-1h-1v1h-7v1h-1v-1h-1v-1h-1v1h-4v1h-1v-1h-1v-1h-1v1h-1v1h-1v-1h-1v-1h-1v1h-3v1h-1v-1h-6v1h-1v-1h-1v1h-2v-1h-2v-1h-1v1h-1v1h-1v-1h-1v-1h-1v1h-14v-1h-1v1h-5v-1h-3v1h-3v-1h-3v1h-1v-1h-6v1h-5v-1h-1v1h-2v-1h-2v1h-1v-1h-6v1h-3v1h-1v-2h-2v1h-1v-1h-2v1h-2v-1h-1v1h-1v-1h-2v1h-2v-1h-1v1h-5v-1h-1v1h-1v1h-1v-2h-1v2h-1v-2h-1v1h-1v-1h-3v1h-1v-1h-1v1h-1v-1h-2v1h-1v-1h-5v1h-1v-1h-1v1h-2v-1h-3v1h-1v-1h-1v1h-1v-1h-2v1h-2v-1h-2v1h-1v-1h-1v1h-1v-1h-1v1h-4v1h-1v-1h-1v1h-1v-1h-9v-1h-1v1h-1v1h-1v-1h-4v1h-1v-1h-2v1h-2v-1h-3v-1h-1v1h-2v-1h-2v1h-1v-1h-1v1h-6v-1h-1v1h-4v-1h-4v1h-4v-1h-2v1h-2v1h-1v-1h-2v-1h-1v2h-1v-1h-3v1h-1v-1h-2v1h-1v-1h-2v1h-3v-2h-2v1h-3v1h-1v-1h-3v1h-1v-1h-1v1h-2v-1h-4v-1h-1v1h-1v1h-1v-1h-1v1h-1v-1h-1v-1h-1v2h-1v-1h-1v-1h-1v1h-2v-1h-1v1h-4v-1h-3v1h-3v-1h-2v1h-10v-1h-1v1h-1v1h-2v-2h-1v1h-2v-1h-1v1h-2v-1h-1v1h-1v1h-1v-1h-3v-1h-3v1h-8v-1h-1v1h-1v-1h-1v1h-1v-1h-2v1h-3v-1h-2v1h-1v-1h-7v1h-1v-1h-4v1h-1v-1h-2v1h-1v-1h-4v1h-1v-1h-1v1h-1v-1h-3v1h-1v-1h-3v1h-1v-1h-1v1h-1v-1h-2v1h-1v-1h-1v1h-2v-1h-1v1h-1v-1h-2v1h-3v1h-3v-1h-2v-1h-2v1h-3v-1h-1v1h-1v-1h-1v1h-1v1h-1v-2h-2v3h-2v-1h-1v-1h-2v-1h-1v1h-7v-1h-1v1h-1v-1h-1v1h-1v1h-1v-1h-1v-1h-1v1h-3v-1h-2v1h-3v-1h-1v1h-6v-1h-2v1h-3v-1h-1v3h-1v-3h-1v1h-1v-1h-1v1h-1v1h-1v-1h-1v1h-1v-1h-1v-1h-1v2h-1v-1h-2v1h-1v-1h-1v-1h-3v1h-1v-1h-1v1h-4v-1h-1v1h-2v-1h-1v2h-1v-1h-1v-1h-1v2h-1v-1h-1v-1h-1v1h-1v1h-3v-2h-1v1h-3v-1h-1v1h-2v1h-2v-1h-6v-1h-1v1h-1v-1h-4v2h-1v-1h-1v-1h-1v1h-4v-1h-2v1h-6v-1h-1v1h-2v-1h-2v1h-2v-1h-1v2h-1v-2h-1v1h-2v-1h-1v1h-1v-1h-1v1h-3v-1h-1v2h-2v-1h-6v-1h-1v1h-1v1h-4v-1h-1v-1h-2v1h-2v-1h-4v1h-1zM277 849h2v1h3v-1h2v1h2v-1h1v1h2v-1h1v1h2v-1h1v-1h1v1h3v1h2v-2h1v1h4v1h2v-1h1v1h3v-1h2v1h1v-1h2v1h1v-1h2v1h1v-1h1v1h1v-1h1v1h2v-1h1v1h4v-1h1v2h1v-1h2v-1h3v1h8v-2h1v1h1v1h1v-1h3v1h2v-1h2v1h1v-1h3v1h1v-1h1v2h1v-4h1v1h1v2h2v-1h4v-1h1v1h1v1h3v-1h2v1h2v-1h1v1h1v-2h1v1h1v1h1v1h1v-1h1v-1h1v-1h1v1h3v1h1v-1h4v1h2v-1h1v1h7v-1h1v1h2v-1h5v2h1v-1h1v-1h1v1h1v-1h3v1h1v-1h1v1h2v-1h2v1h2v-1h1v-1h1v1h5v1h1v-1h2v1h2v-1h1v1h6v-1h2v1h2v-1h1v1h1v-1h1v1h4v-2h1v3h1v-1h1v-1h2v1h9v1h1v-2h1v2h1v-1h5v-1h1v1h14v-1h1v-1h1v1h1v-2h1v3h3v-1h1v1h1v-1h3v1h1v-1h4v1h2v-1h1v1h1v-1h2v1h6v-1h2v1h2v-1h1v1h2v1h1v-2h1v1h1v-1h2v1h1v-1h1v1h1v-1h1v1h1v-1h3v1h1v-1h1v1h6v-1h1v1h1v-1h2v1h1v-1h1v1h1v-1h2v1h1v-1h1v1h1v-1h1v1h1v-1h1v1h1v-2h1v1h2v1h2v-2h1v1h5v-1h1v1h1v1h3v-2h1v1h4v-1h1v2h1v-1h2v1h1v-2h1v1h2v1h3v-1h1v1h3v-1h2v1h2v-1h1v1h1v-2h1v3h1v-2h1v1h3v1h1v-2h1v1h1v-1h3v1h1v-3h1v3h3v-1h1v2h1v-3h1v1h2v1h1v-2h1v-1h1v1h1v2h1v-2h2v1h2v-4h1v4h2v-2h1v1h2v2h1v-1h2v1h2v1h1v-2h1v-1h1v1h1v-1h1v2h1v-1h2v2h2v-1h1v-1h3v1h5v-2h1v2h1v-1h1v1h3v-1h1v1h6v-1h1v1h1v-1h1v1h3v-1h1v-1h1v1h3v1h1v-1h1v1h7v1h1v-1h2v-1h2v1h2v-1h1v1h1v-1h3v2h1v-1h1v-1h1v1h1v-1h1v1h1v-1h3v-2h1v1h1v1h1v-1h1v1h1v-1h2v-4h1v5h1v1h1v-3h1v2h2v1h1v1h1v-1h4v-2h1v2h2v1h1v-1h6v-1h3v1h1v-1h3v1h1v-1h1v1h2v-1h1v1h1v-1h1v2h2v-1h1v-1h1v1h1v-1h1v1h2v-1h2v1h2v-1h2v1h1v-1h2v-2h1v1h1v1h2v1h2v-1h1v1h3v-1h3v1h1v-1h1v1h1v-1h3v1h1v-1h1v1h1v-1h3v1h1v-2h1v1h1v1h1v-1h1v-1h1v1h1v1h1v-1h3v-1h1v2h1v-1h1v2h1v-2h1v1h1v-1h1v1h2v-3h1v2h4v1h1v-1h1v1h2v-1h5v-1h1v1h2v-1h2v1h4v1h2v-1h2v-1h1v2h1v-1h1v1h2v-1h4v1h1v1h1v-1h4v-1h1v1h2v-1h1v1h1v-1h1v1h2v-1h2v1h5v-1h1v1h1v-2h1v2h5v-1h1v1h4v-1h1v1h1v-1h2v1h1v-1h3v1h1v1h1v-1h1v-1h2v1h4v-1h3v1h4v-1h2v1h5v-1h3v1h5v1h1v-1h3v-1h1v2h1v-2h1v1h5v1h1v-1h7v1h1v-1h1v-2h1v2h5v-1h1v1h1v-3h1v2h2v1h2v-1h2v1h4v-1h1v1h1v-1h2v1h2v-1h3v-1h1v1h1v1h1v-1h3v-1h1v1h1v1h2v-1h1v1h1v-1h1v1h1v-1h1v1h1v-1h2v1h2v-1h1v1h1v-1h2v1h3v-1h3v-1h3v1h2v-1h2v2h2v-1h1v1h1v-1h3v1h4v-1h1v1h1v-1h2v-2h1v2h2v1h1v-1h1v1h2v-1h1v1h1v-1h2v1h1v-1h1v1h2v-1h1v-2h1v2h2v-1h1v2h1v-1h1v1h1v-2h1v-1h1v2h3v1h2v-2h1v1h1v1h3v-2h1v2h5v-2h1v2h2v-1h1v-1h1v2h1v-1h1v1h2v-1h2v1h4v1h1v-1h1v-1h1v1h2v-2h1v2h1v-1h2v1h3v-1h5v1h2v1h1v-2h1v1h3v-2h1v1h2v1h1v-1h1v1h1v-1h3v1h3v-1h1v-1h1v1h1v1h1v-1h1v1h1v-1h1v1h1v-1h2v1h7v-1h1v1h2v-1h2v1h10v-1h1v1h7v-2h1v2h2v1h1v-1h2v1h1v-1h5v-1h1v1h1v1h1v-1h4v-2h1v1h1v1h1v-1h1v1h2v-1h2v1h1v-1h1v1h1v-1h6v1h2v-1h1v1h2v-1h2v1h3v-1h1v1h1v-1h2v1h2v-1h1v1h2v-1h2v1h5v-1h1v2h1v-1h1v-1h1v2h1v-1h1v-1h1v1h1v-1h3v1h1v-1h4v1h1v-2h1v1h3v-1h1v1h3v1h2v-1h2v-1h1v1h1v-1h1v-1h1v1h1v-1h1v1h1v-1h2v2h3v1h1v-1h4v-1h2v1h1v-1h4v2h1v-1h1v-2h2v2h1v1h1v-1h3v1h2v-1h1v1h1v-1h1v1h3v-1h2v2h1v-2h1v1h2v-1h1v2h1v-2h2v1h2v-1h1v1h1v-1h1v1h2v-1h5v1h4v-1h2v1h1v-2h1v1h1v1h5v-1h2v1h8v-1h1v1h1v-1h1v1h7v-1h1v2h1v-2h2v2h2v-1h1v-1h1v1h1v1h1v-2h1v1h6v1h1v-1h10v-1h2v1h1v1h1v-1h8v-1h1v5h-6v-1h-1v1h-2v-1h-2v1h-3v-1h-1v2h-1v-1h-5v-1h-1v1h-1v-1h-1v1h-2v1h-1v-2h-1v1h-3v-1h-2v2h-2v-1h-5v-1h-2v1h-2v-1h-1v1h-1v1h-1v-1h-1v-1h-1v1h-1v1h-1v-1h-2v1h-2v-1h-1v-1h-1v1h-7v1h-1v-1h-3v1h-1v-1h-10v1h-2v-1h-5v-1h-1v1h-1v1h-1v-1h-1v-1h-2v1h-1v-1h-1v1h-3v1h-1v-1h-1v-1h-1v2h-3v-2h-1v1h-1v1h-1v-1h-2v1h-1v2h-1v-2h-1v-1h-1v1h-1v1h-1v-1h-2v1h-3v-1h-1v3h-1v-2h-1v-2h-5v1h-2v1h-1v1h-1v-1h-1v-1h-2v1h-2v-2h-1v1h-1v-2h-1v2h-1v-1h-2v1h-2v-1h-1v1h-1v-1h-1v2h-1v-2h-4v1h-1v-1h-5v1h-1v-1h-2v-1h-1v2h-2v-1h-2v-1h-1v1h-4v-1h-1v1h-7v1h-1v-1h-1v-1h-1v1h-2v1h-1v-1h-3v1h-1v-2h-1v1h-4v2h-1v-1h-2v-1h-3v1h-1v-1h-2v-1h-1v1h-5v2h-1v-1h-1v-1h-2v-1h-1v1h-2v1h-1v-2h-2v2h-1v-1h-1v-1h-1v1h-1v-1h-2v1h-2v-1h-1v1h-1v-1h-2v1h-2v-1h-1v1h-1v-1h-1v1h-4v-1h-1v1h-1v-1h-1v1h-3v-1h-2v1h-1v-1h-1v1h-3v1h-1v-2h-1v1h-18v1h-1v-1h-1v-1h-1v1h-3v-1h-1v2h-1v-2h-2v2h-2v-1h-1v1h-1v-1h-4v-1h-1v1h-4v-1h-3v1h-2v-1h-1v1h-5v-1h-1v1h-3v1h-1v-1h-2v1h-1v-1h-1v-1h-1v1h-3v2h-1v-3h-2v1h-8v1h-1v1h-1v-2h-2v1h-1v1h-1v-2h-1v1h-2v-1h-4v1h-1v1h-1v-1h-4v-1h-3v1h-1v-1h-2v1h-1v-1h-1v1h-2v-1h-5v-1h-1v1h-1v-1h-1v1h-2v1h-1v-1h-1v1h-1v-2h-1v1h-2v1h-3v1h-1v-1h-2v-1h-2v1h-1v-1h-1v-1h-1v1h-2v1h-2v-1h-1v-1h-1v1h-6v1h-1v-1h-3v1h-1v-2h-1v1h-2v1h-1v-2h-1v1h-5v1h-2v-1h-5v-1h-1v2h-1v-1h-2v-1h-2v1h-5v-1h-1v1h-2v-1h-1v1h-3v-1h-1v1h-1v-1h-2v1h-1v-1h-1v1h-1v-1h-1v1h-3v1h-1v-2h-1v1h-1v-1h-1v1h-3v-1h-1v1h-3v-1h-1v1h-7v-1h-1v1h-1v-1h-1v1h-1v-1h-1v1h-2v-1h-2v1h-1v-1h-1v1h-2v-1h-1v1h-1v1h-1v-1h-2v2h-1v-2h-1v1h-1v-1h-1v-1h-1v1h-5v-1h-2v1h-10v-1h-2v2h-1v-1h-1v-1h-3v1h-1v-1h-2v1h-3v-1h-1v1h-6v-1h-2v1h-1v-1h-1v1h-2v1h-1v-2h-1v1h-6v2h-1v-1h-2v-1h-3v1h-1v-1h-2v1h-1v1h-2v2h-1v-2h-2v-2h-1v2h-1v-2h-1v-1h-1v1h-1v1h-1v-1h-4v1h-1v-1h-1v2h-1v-1h-1v-1h-2v-1h-1v2h-1v-1h-5v-1h-2v1h-1v1h-1v-1h-1v1h-3v-1h-5v1h-1v-1h-6v1h-1v-1h-2v1h-1v-1h-3v2h-1v-2h-3v1h-1v-2h-1v1h-1v1h-2v-1h-1v1h-2v-1h-3v1h-3v1h-1v-2h-2v-1h-1v1h-3v1h-1v-1h-1v1h-1v-1h-15v-1h-7v1h-7v-1h-1v2h-2v-1h-2v2h-2v-1h-1v1h-3v-2h-1v2h-1v-1h-3v-1h-1v-1h-1v1h-1v-1h-1v1h-1v1h-1v-1h-3v1h-2v-1h-1v-1h-1v1h-1v-1h-3v1h-1v1h-1v-1h-4v-1h-2v2h-1v-1h-1v1h-3v-1h-4v-1h-1v1h-5v-1h-2v1h-4v-1h-2v1h-4v-1h-1v1h-3v-1h-1v2h-1v-1h-1v2h-1v-2h-1v-1h-2v1h-1v1h-3v-1h-1v1h-1v-1h-2v1h-2v-2h-1v2h-2v1h-1v-1h-1v1h-1v-1h-1v1h-1v-1h-1v1h-1v-1h-1v2h-1v-2h-1v-1h-3v1h-1v-1h-2v-1h-1v1h-4v1h-1v-1h-2v-1h-2v1h-3v-1h-1v1h-5v1h-1v-1h-3v-1h-1v2h-3v-1h-1v1h-2v-1h-1v1h-1v-1h-6v1h-2v-1h-1v1h-1v-1h-1v2h-1v-1h-2v-1h-2v-1h-1v1h-1v1h-1v-1h-1v1h-2v-1h-3v1h-1v-1h-1v1h-1v-1h-7v1h-4v1h-1v-2h-8v-1h-1v1h-4v1h-1v1h-1v-2h-1v1h-1v-1h-4v1h-1v-1h-3v-1h-1v1h-1v-1h-3v1h-2v-1h-1v2h-2v-1h-2v-1h-1v1h-5v1h-1v1h-1v-2h-2v-1h-1v1h-4v-1h-1v2h-2v-1h-3v1h-1v3h-1v-2h-1v-2h-4v1h-1v-2h-2v1h-4v-1h-2v1h-2v1h-1v-1h-1v-1h-1v1h-1v-1h-1v1h-3v-1h-6v2h-1v-1h-1v-1h-1v2h-1v-2h-1v1h-3v-1h-1v1h-4v-1h-1v1h-4v-1h-2v1h-1v1h-1v-1h-3v-1h-2v1h-1v1h-4v-2h-1v2h-2v-1h-1v1h-2v-1h-1v-1h-1v1h-1v-1h-1v1h-4v1h-1v-1h-3v1h-1v-2h-1v1h-1v-1h-1v1h-2v-1h-1v1h-15v1h-1v-1h-1v1h-2v-1h-2v-1h-1v2h-1v-2h-1v1h-3v1h-1v-1h-1v-1h-1v1h-2v-1h-1v2h-1v-1h-2v1h-1v-2h-1v1h-4v1h-1v-1h-1v2h-1v-2h-1v1h-1v-1h-1v1h-4v-1h-1v1h-1v-1h-2v-1h-1v1h-1v1h-2v-2h-1v2h-1v-1h-7v1h-1v-2h-1v1h-2v1h-1v-2h-1v1h-5v-1h-1v1h-2v2h-1v-2h-12v-1h-1v1h-1v1h-1v-1h-2v1h-3v-1h-2v1h-1v-1h-4v-1h-1v1h-1v1h-1v-1h-4v-1h-1v1h-6v-1h-1v1h-3v-1h-1v1h-3zM277 879h3v1h1v1h1v-1h2v-1h5v1h2v-1h2v-2h1v2h2v1h2v-1h1v1h1v1h1v-2h2v1h2v-1h1v1h4v-1h1v1h4v-1h2v1h1v1h1v-1h4v1h1v-1h2v1h2v-2h1v2h1v-1h4v1h1v-1h2v1h2v-1h6v1h1v-1h1v1h1v-1h3v-1h1v1h1v-1h1v1h3v-1h1v-1h1v1h1v1h2v-1h1v1h1v1h1v-1h8v-1h2v2h1v-1h8v1h1v-2h3v2h1v-1h2v1h1v-1h5v1h1v-1h5v1h1v-1h7v-1h1v1h2v-1h1v1h4v-1h1v1h4v-1h1v1h2v-1h1v1h1v-1h1v2h1v-1h1v-1h1v1h3v-1h1v1h1v-1h1v-1h1v1h4v1h1v-2h1v1h2v1h2v-1h1v1h1v-1h1v-1h1v2h2v-1h1v1h3v-1h1v1h1v-1h2v1h1v1h1v-1h2v1h1v-1h1v-1h2v1h4v1h1v-2h6v1h1v-2h2v1h1v1h2v1h1v-2h1v1h1v-2h1v1h1v1h1v-1h1v1h1v-1h1v1h3v-1h3v1h1v-1h4v-1h1v2h8v-2h1v3h1v-2h1v1h1v-2h1v1h1v-2h1v1h1v-1h1v1h1v2h1v-2h1v1h5v1h1v1h1v-1h2v1h1v-1h1v1h1v-1h6v1h1v-1h3v1h2v-2h1v2h1v-2h2v1h8v-1h1v1h3v-1h1v1h3v-1h1v1h1v-1h2v1h3v1h1v-2h2v2h1v-1h15v1h1v-1h4v1h1v-1h1v1h2v-1h4v1h1v-1h3v1h2v-1h2v1h2v-1h1v-2h1v2h4v-1h1v1h3v-1h1v1h3v-1h1v2h1v-2h1v1h4v-1h1v1h4v-1h2v2h1v-1h2v1h1v-1h2v-1h1v1h1v-1h1v1h4v-1h1v2h1v-1h2v1h1v-1h2v-1h1v2h1v-1h2v1h1v-1h1v1h1v-1h6v-1h1v2h1v-1h1v-1h4v1h6v-1h3v2h1v-2h2v1h1v-1h2v1h1v-1h1v1h1v-1h1v1h1v-1h1v1h1v-1h6v1h1v-1h3v2h1v-2h1v1h2v-1h1v1h10v-2h1v2h5v-1h1v1h2v-1h2v1h3v-1h2v1h2v-1h1v1h2v-1h2v1h1v-1h1v1h1v-1h3v1h1v-1h1v1h4v-1h4v1h1v-1h2v1h2v-1h3v2h2v-1h1v-2h1v2h2v-2h1v1h2v1h3v-1h1v1h4v1h1v-3h1v2h2v1h2v-2h1v2h1v-1h1v1h2v-1h1v1h1v-1h6v-1h1v1h6v-1h1v2h1v-1h3v1h1v-2h1v1h2v-1h1v1h7v-1h1v1h5v-1h1v1h1v-3h1v3h23v1h1v-2h3v-1h1v1h1v-1h1v1h2v1h2v-1h1v1h4v1h1v-1h2v-1h1v2h1v-1h3v-1h1v1h1v-2h1v1h1v1h4v-1h6v1h1v-1h3v1h1v-2h1v2h1v-1h4v2h1v-2h1v1h1v-1h2v2h1v-2h1v1h1v-1h1v1h2v-2h2v1h1v1h4v1h1v-1h1v-1h1v1h3v-1h2v1h3v-1h2v1h3v-1h1v1h2v-1h1v1h2v-1h1v1h4v-2h1v1h1v-1h1v2h3v-1h2v2h1v-2h2v1h2v-1h1v1h1v-1h1v1h2v1h1v-3h1v1h3v1h1v-1h2v1h4v-2h1v2h2v-1h2v1h1v-1h1v1h3v1h1v-1h3v-1h2v1h3v-1h1v1h5v1h1v-2h1v1h3v-1h1v1h2v-1h1v1h1v-1h1v1h9v-1h2v1h6v1h1v-1h2v-1h2v1h1v-1h1v1h2v1h1v-1h1v-1h1v1h1v-1h1v1h3v1h1v-1h6v1h1v-1h2v1h1v-1h1v1h1v-1h2v1h1v-1h1v1h1v-1h6v1h2v-1h6v-1h1v1h2v1h2v-1h2v-1h1v1h3v1h1v-2h1v1h1v-1h1v1h1v1h1v-2h2v1h1v-1h1v2h1v-1h1v-1h1v1h1v-1h1v1h2v1h2v-2h1v2h1v-1h2v-1h2v1h1v-1h1v1h1v-1h3v1h1v-1h1v1h4v1h1v-1h1v-1h1v1h3v-1h1v1h1v-1h1v1h1v-1h1v1h1v-1h2v1h2v1h1v-2h2v2h1v-2h1v1h1v-1h3v1h2v1h1v-1h5v-1h2v1h1v-1h1v-2h1v2h1v1h1v-1h2v-2h1v1h5v1h5v1h2v-1h4v1h7v-1h2v1h1v-1h1v1h3v1h1v-1h3v-1h1v1h2v-2h1v2h1v1h1v-1h4v-1h1v1h1v-1h2v1h1v-1h1v1h1v-1h2v1h1v-1h1v1h1v-1h2v-2h1v2h1v-1h1v1h1v1h9v1h1v-1h1v-1h3v-1h1v1h1v1h3v1h1v-2h4v1h1v-1h1v2h1v-1h1v1h1v-1h2v1h1v-1h5v1h2v-1h2v1h1v-1h2v1h1v-1h1v1h1v-1h4v1h1v-1h2v1h2v-1h1v-1h1v1h2v-1h1v1h6v-1h1v2h1v-1h1v1h1v-1h3v-1h1v1h3v-1h1v1h1v-1h1v1h5v-1h1v1h1v-1h1v1h6v-1h1v1h4v-1h1v2h1v-1h6v1h1v-1h1v1h1v-1h5v-1h1v1h4v-1h1v2h1v-2h2v1h2v-1h1v-2h1v1h1v-3h1v4h1v2h1v-1h6v-1h4v1h1v-1h2v6h-1v1h-1v-2h-1v-1h-1v3h-1v-1h-2v-1h-1v1h-2v-1h-1v1h-4v-1h-1v1h-2v-1h-3v1h-2v-1h-1v1h-1v-1h-1v2h-1v-2h-2v1h-1v-1h-1v-1h-1v2h-2v-1h-1v1h-1v-1h-2v3h-2v-4h-1v1h-1v1h-1v-1h-2v1h-1v-1h-1v-1h-1v1h-4v1h-1v-1h-1v1h-1v-1h-3v2h-1v-2h-3v1h-1v-1h-2v1h-4v-1h-1v1h-1v-1h-1v1h-4v-1h-1v1h-1v-1h-1v1h-1v-1h-6v1h-2v-1h-1v1h-1v-2h-1v1h-4v2h-1v-2h-2v-1h-1v1h-2v2h-1v-2h-2v-1h-1v1h-7v-1h-1v1h-8v1h-2v-2h-1v1h-4v-1h-1v2h-2v1h-2v-1h-1v1h-1v-2h-1v1h-1v-1h-2v1h-1v-1h-1v1h-9v-1h-1v1h-2v-1h-1v1h-1v-1h-2v1h-1v-1h-5v-1h-1v2h-1v-1h-2v1h-2v-1h-10v1h-1v-1h-7v1h-2v-1h-2v1h-1v-1h-1v1h-2v-1h-1v1h-1v-1h-1v1h-4v-1h-1v1h-3v2h-1v2h-1v-3h-2v-1h-7v2h-1v-2h-5v-1h-3v1h-1v-2h-1v3h-1v-1h-3v-1h-3v1h-1v-1h-2v1h-1v-2h-1v2h-1v-2h-1v2h-1v-1h-4v1h-2v-1h-6v1h-1v-1h-2v1h-1v-1h-2v1h-1v-1h-1v1h-1v-1h-2v-1h-1v2h-2v-1h-2v1h-3v-1h-3v2h-1v-1h-1v-1h-2v1h-2v-1h-1v1h-1v-1h-4v1h-1v-1h-1v-1h-1v1h-4v1h-1v-1h-4v1h-1v-1h-5v1h-1v-1h-1v2h-1v-3h-1v1h-9v-1h-1v1h-1v-1h-1v1h-2v1h-1v-1h-3v-1h-1v1h-2v2h-1v-2h-3v-1h-1v1h-1v1h-1v-1h-5v1h-4v-1h-1v1h-1v-1h-2v1h-1v-1h-2v1h-1v-2h-1v2h-1v-1h-1v1h-1v-2h-1v1h-4v1h-1v-1h-1v2h-1v-2h-3v1h-1v-1h-3v1h-3v-1h-11v1h-1v-1h-2v1h-1v-1h-2v1h-2v-1h-1v1h-1v-1h-1v1h-8v1h-1v-1h-2v-1h-1v1h-6v1h-1v-1h-1v1h-2v-1h-2v-1h-1v1h-3v-1h-1v2h-1v-1h-1v-1h-1v1h-1v1h-1v-1h-2v-1h-1v1h-3v-1h-1v1h-2v-1h-4v1h-1v-1h-1v1h-2v-1h-2v1h-1v-1h-3v1h-1v-1h-1v1h-2v1h-1v-1h-1v1h-1v-1h-1v-1h-4v1h-2v-1h-3v1h-2v-1h-1v1h-2v-1h-1v1h-1v-1h-1v1h-2v1h-2v-1h-1v1h-1v-1h-1v-1h-2v1h-1v-1h-2v1h-1v1h-1v-1h-3v-1h-1v1h-3v-1h-4v1h-1v-1h-8v1h-1v-1h-1v2h-2v-1h-3v-1h-13v1h-1v1h-1v-3h-1v1h-1v1h-2v-2h-1v2h-2v1h-1v-2h-1v2h-1v-1h-1v-1h-5v1h-8v-1h-2v1h-1v-1h-2v1h-2v-2h-1v2h-1v-1h-6v1h-1v-2h-1v1h-2v-1h-1v1h-3v-1h-1v2h-1v-1h-1v-1h-1v1h-2v-1h-1v1h-6v1h-1v-1h-4v1h-1v-2h-1v1h-3v1h-1v-1h-3v1h-1v-1h-1v1h-1v-1h-1v1h-5v-1h-3v1h-1v-1h-1v3h-1v-2h-1v-1h-4v1h-7v-1h-1v1h-3v-2h-1v1h-1v1h-1v-1h-1v1h-1v-1h-1v1h-1v-1h-1v1h-1v-1h-1v1h-1v-1h-1v1h-1v-1h-1v1h-2v1h-1v-2h-1v1h-1v-1h-2v1h-1v-1h-1v1h-1v-1h-1v1h-1v-1h-3v3h-1v-2h-1v-1h-1v1h-2v-1h-1v1h-6v-1h-3v1h-1v-1h-1v1h-3v-1h-3v1h-2v-1h-1v2h-1v-1h-2v-1h-1v1h-3v-1h-1v2h-1v-1h-2v-1h-1v1h-1v-1h-1v-1h-1v1h-1v1h-1v-1h-4v1h-1v-2h-1v2h-1v-2h-1v1h-10v1h-4v-1h-8v1h-1v-1h-4v1h-2v-2h-1v2h-4v-1h-3v1h-4v-1h-3v1h-1v-1h-1v1h-1v-1h-1v1h-2v-1h-4v1h-2v-2h-1v1h-2v1h-2v-1h-1v1h-1v-2h-1v1h-14v-1h-1v1h-9v1h-1v-1h-1v1h-1v-1h-2v1h-1v-1h-1v1h-1v-2h-1v1h-3v1h-3v-1h-1v1h-3v2h-1v-3h-1v1h-1v-1h-3v1h-2v1h-1v-1h-1v1h-1v-2h-1v1h-3v-1h-1v1h-1v-1h-4v1h-1v-1h-1v-1h-1v2h-1v-1h-3v-1h-1v2h-1v-1h-2v1h-1v-2h-1v1h-1v-1h-1v1h-1v1h-1v-1h-1v1h-1v-1h-1v1h-1v1h-1v1h-1v-2h-1v1h-1v1h-1v-1h-1v-2h-1v2h-2v-1h-1v-1h-1v1h-1v-1h-2v1h-5v-2h-1v1h-1v2h-2v-2h-1v1h-2v-1h-2v3h-1v-3h-1v1h-1v-1h-1v3h-1v-2h-2v-1h-1v1h-3v1h-1v-2h-1v1h-2v-1h-1v2h-2v-1h-3v-1h-1v1h-1v-1h-1v1h-2v-1h-5v1h-1v-1h-1v1h-5v-1h-1v1h-1v-1h-1v2h-1v-2h-1v1h-1v2h-1v-2h-1v-1h-1v2h-1v-2h-2v1h-1v-2h-1v2h-1v-1h-5v1h-2v3h-1v-2h-1v-1h-4v-1h-1v1h-2v1h-1v-1h-4v-1h-1v1h-2v-1h-1v1h-2v-1h-2v2h-1v-2h-3v1h-2v-1h-1v1h-1v-1h-12v1h-1v-1h-15v-1h-1v1h-1v1h-1v-1h-4v1h-1v-1h-3v-1h-1v1h-1v1h-1v-1h-7v1h-1v-1h-5v1h-6v-1h-1v1h-2v-1h-3v1h-2v-1h-2v1h-1v-1h-1v1h-1v-1h-16v-1h-1v2h-1v-1h-9v1h-6v-1h-3v1h-1v-1h-2v1h-1v-1h-2v2h-1v-1h-2v-1h-1v1h-5v-1h-1v1h-1v1h-1v-2h-1v1h-1v-1h-1v3h-1v-1h-1v-1h-1v-1h-1zM277 910h2v1h1v-2h1v2h1v-2h1v2h1v-1h2v-1h1v1h1v-1h2v1h1v1h1v-1h1v1h1v-1h1v1h4v-2h1v1h9v1h1v-1h1v1h1v-2h1v2h2v-1h4v-1h1v1h1v1h1v-3h1v2h4v1h1v-1h2v1h2v-1h4v-1h1v1h4v1h1v-2h1v1h4v1h1v-2h4v-1h1v2h1v-1h2v-1h1v1h1v1h2v-1h3v1h1v-1h3v1h5v-1h3v1h3v-1h1v2h2v-1h2v-2h1v1h2v1h1v-1h1v1h6v-1h1v1h2v-3h1v4h1v-2h1v1h1v1h1v-1h3v-1h3v1h3v-1h2v1h2v-3h1v3h1v-1h1v1h1v-1h1v2h1v-2h1v1h4v-1h2v1h6v1h1v-2h1v1h4v1h2v-1h4v1h1v-1h1v1h2v-1h11v1h4v-2h1v1h2v1h1v-1h2v1h1v-1h2v1h1v-1h10v1h1v-1h2v-1h1v1h4v1h1v-1h2v1h1v-1h1v1h1v-1h1v1h1v-1h2v1h1v-1h3v-1h1v2h1v-1h2v1h1v-1h2v1h1v-1h1v-1h1v1h1v1h3v-1h1v1h1v-1h1v1h3v-1h1v1h1v-1h1v1h1v-1h1v-1h1v1h3v1h1v-1h1v1h2v-1h5v1h1v-1h4v-1h1v1h2v-1h1v1h4v-1h2v1h1v1h1v-1h1v-1h1v1h11v-1h1v1h1v-1h1v1h1v1h1v-1h1v1h1v-2h1v1h1v-1h1v1h1v-1h1v1h6v1h1v-1h2v1h1v-1h6v1h2v-2h2v1h5v1h1v-1h2v-1h3v1h1v-1h3v1h2v-1h2v1h1v-1h4v1h1v-1h1v1h1v-1h1v1h2v-1h1v1h3v-1h1v1h1v1h1v-1h2v-2h1v2h1v-2h1v1h2v1h1v1h2v-1h2v-1h1v1h4v1h1v-1h4v1h1v-1h1v-1h1v2h1v-1h2v1h1v-1h3v1h2v-1h3v-1h1v2h1v-1h3v-1h1v2h1v-1h1v-1h1v2h1v-1h2v-2h1v3h1v-1h3v1h1v-1h16v1h1v-1h1v1h2v-1h4v-1h1v2h4v-1h1v1h9v-1h3v1h2v-1h2v1h1v-1h1v1h1v-1h1v1h1v-1h6v-1h1v2h1v-1h1v1h3v-1h3v1h1v-1h3v-1h1v-1h1v3h1v-1h1v-1h1v1h2v1h1v-1h1v-1h1v1h1v-1h2v1h4v1h1v-2h1v1h1v-1h1v1h4v1h1v-1h1v-1h1v1h4v1h1v-1h3v1h2v-2h2v1h1v1h1v-1h1v1h1v-1h8v1h1v-1h4v-1h1v1h3v1h1v-1h1v-1h1v2h1v-3h1v2h3v-2h1v1h3v1h1v-2h1v2h1v-1h1v1h3v-1h1v1h1v-1h1v1h1v-1h1v1h5v1h1v-1h4v-1h1v1h1v-2h1v2h1v-1h1v1h1v-2h1v2h2v1h1v-1h7v1h1v-1h1v1h1v-1h1v-2h1v2h2v-1h2v1h2v1h1v-1h4v-1h2v1h1v-1h2v2h1v-1h3v-2h1v2h6v1h1v-1h2v-1h3v1h3v1h3v-2h1v2h1v-1h6v-1h1v2h1v-1h1v1h1v-1h1v1h1v-1h1v1h3v-1h2v1h1v-1h1v1h2v-2h1v2h1v-1h3v1h1v-1h3v1h1v-1h2v1h1v-1h4v1h3v-1h3v1h3v-1h1v1h1v-1h2v1h1v-1h5v1h1v-1h3v1h1v-1h2v1h2v-1h1v1h1v-1h1v1h1v-1h1v1h1v-1h1v1h1v-3h1v3h2v-1h2v1h2v-1h2v1h2v-1h3v-2h1v3h1v-1h3v1h1v-1h3v-1h1v2h1v-1h2v1h1v-1h8v-1h3v2h1v-1h1v-1h1v1h1v-1h2v1h3v1h1v-2h1v1h1v-1h2v1h2v1h1v-2h1v1h2v-1h1v-1h1v2h4v-1h1v1h5v1h1v-1h2v-1h1v2h2v-1h2v-1h1v1h3v1h1v-2h1v1h4v-1h3v1h4v1h1v-1h4v-1h1v2h1v-1h1v1h1v-2h1v1h4v-1h1v-1h1v1h1v1h5v-1h2v1h3v1h2v-2h1v1h3v-1h1v1h3v-2h1v1h1v2h1v-1h1v-1h1v1h1v1h3v-1h3v1h1v-1h1v1h1v-1h3v1h1v-1h1v1h1v-1h3v1h1v-1h2v1h1v-1h1v1h1v-1h1v1h1v-1h1v1h1v-1h2v1h2v-1h2v-1h3v2h1v-1h1v-1h1v1h3v1h1v-1h1v1h1v-1h2v1h1v-1h3v-1h1v1h1v-1h2v1h1v1h1v-1h3v1h3v-1h1v1h1v-1h8v1h3v-1h2v-1h1v1h2v1h1v-1h1v1h4v-1h2v1h1v-1h2v-1h1v1h1v-1h2v1h3v-1h1v1h8v-1h1v1h2v1h1v-2h1v1h1v-2h1v2h6v1h1v-1h3v-2h1v1h1v1h2v1h1v-2h2v2h1v-1h9v1h1v-1h1v1h1v-1h3v1h1v-1h2v1h1v-1h1v-1h2v2h1v-1h6v-1h1v1h2v1h1v-1h2v-2h1v2h2v1h1v-1h1v-1h1v1h6v-1h1v1h2v-1h1v1h2v1h1v-1h2v-1h1v1h1v-1h1v1h2v1h2v-1h3v-1h1v2h1v-1h5v5h-2v-1h-1v1h-1v1h-1v-1h-1v-1h-1v1h-1v1h-1v-1h-9v1h-1v-1h-1v1h-2v2h-1v-2h-2v-1h-2v1h-1v-2h-1v1h-3v-1h-3v1h-3v1h-1v-1h-1v1h-1v-1h-2v-1h-1v2h-1v-1h-2v-1h-1v1h-1v-1h-1v1h-1v-1h-1v1h-1v-1h-1v1h-1v-1h-1v1h-3v-2h-1v2h-1v-1h-1v1h-1v-1h-3v1h-1v-1h-1v1h-1v-1h-3v2h-1v-2h-2v1h-7v-1h-1v2h-1v-1h-2v1h-1v-2h-1v2h-1v-2h-1v1h-3v-1h-1v1h-6v-1h-2v1h-5v-1h-1v1h-2v1h-1v2h-1v-2h-1v-1h-4v-1h-2v1h-2v-1h-8v1h-1v-1h-4v1h-1v-1h-2v1h-5v-1h-2v1h-1v-1h-1v1h-5v1h-2v-1h-2v1h-1v-1h-2v-1h-1v1h-4v2h-1v-2h-1v-1h-1v1h-1v-1h-1v1h-2v1h-3v-1h-6v-1h-1v1h-1v-1h-3v1h-6v-1h-2v1h-2v-1h-2v1h-6v-1h-4v1h-1v-1h-1v1h-2v-1h-2v1h-1v1h-1v-1h-1v-1h-1v1h-2v1h-2v-1h-1v-1h-2v1h-4v-1h-1v2h-1v-1h-2v2h-2v-2h-1v1h-1v-1h-2v1h-2v-1h-5v-1h-1v1h-1v-1h-1v1h-3v-1h-1v1h-3v1h-1v-2h-2v1h-1v-1h-2v1h-1v1h-1v-1h-1v1h-1v-2h-2v1h-5v1h-1v-2h-1v1h-4v-1h-1v1h-3v1h-1v-1h-4v-1h-1v1h-2v1h-1v-1h-1v-1h-1v1h-3v1h-1v-1h-1v-1h-1v1h-1v1h-1v-1h-7v2h-1v-1h-1v-2h-1v1h-1v-1h-3v2h-2v1h-1v-2h-4v-1h-2v1h-1v-1h-1v1h-1v-1h-8v-1h-2v1h-5v1h-1v2h-1v-3h-1v1h-2v-1h-2v1h-1v-1h-2v1h-1v-1h-1v1h-1v-1h-2v1h-2v-1h-1v1h-2v1h-1v-1h-2v-1h-2v1h-3v-1h-1v1h-1v-1h-1v1h-1v-2h-1v1h-2v1h-1v1h-1v-1h-3v-1h-1v1h-2v-1h-2v1h-2v-1h-2v1h-3v-1h-1v1h-1v-1h-1v1h-1v-1h-1v2h-1v-2h-5v1h-1v-1h-1v1h-1v-1h-4v-1h-1v1h-1v1h-2v-1h-1v1h-1v-1h-1v1h-1v-1h-6v1h-3v-1h-1v1h-1v-1h-1v1h-1v-2h-1v2h-6v-1h-1v1h-1v1h-2v-2h-1v1h-2v1h-1v-1h-4v-1h-1v1h-2v1h-1v-2h-1v2h-1v-2h-1v1h-1v-1h-3v1h-3v-1h-1v1h-1v1h-1v-1h-2v-1h-2v1h-4v1h-1v-2h-1v1h-3v-1h-1v2h-1v-1h-1v1h-1v-1h-1v-1h-1v1h-4v1h-1v-1h-1v-1h-1v1h-2v1h-2v-1h-1v1h-1v-1h-5v1h-1v-1h-2v1h-5v-1h-3v1h-1v-2h-1v2h-1v-1h-8v-1h-1v1h-3v-1h-1v1h-2v-1h-3v1h-3v-1h-1v1h-2v-1h-1v1h-1v-1h-1v1h-2v-1h-4v2h-1v-2h-1v1h-1v-1h-1v1h-3v-1h-1v1h-6v-1h-1v1h-1v-1h-1v2h-1v-1h-2v-1h-1v1h-2v-1h-1v1h-4v-1h-1v1h-4v-1h-1v1h-3v-1h-1v1h-4v-1h-1v1h-3v-1h-2v1h-2v-1h-2v-1h-1v2h-1v-1h-1v1h-1v-1h-4v1h-3v-1h-6v1h-1v-1h-7v1h-1v-1h-2v1h-2v-1h-4v2h-1v-1h-5v-1h-1v1h-3v-1h-1v1h-2v-1h-1v1h-2v-1h-1v1h-4v-1h-1v1h-3v1h-1v-2h-2v1h-2v-1h-1v1h-1v-1h-1v1h-4v-1h-1v2h-1v-1h-1v-1h-1v1h-1v-1h-1v2h-1v-3h-1v2h-1v-1h-2v1h-1v1h-1v-1h-1v-1h-1v1h-3v-1h-3v1h-1v-1h-2v1h-1v1h-1v-1h-1v-1h-1v-1h-1v2h-1v-1h-1v1h-2v1h-2v-1h-1v1h-1v-1h-1v1h-1v-1h-6v1h-1v-1h-1v3h-1v-4h-1v1h-1v2h-1v-3h-1v2h-1v-2h-1v1h-4v-1h-1v1h-3v-1h-3v1h-11v-1h-2v2h-1v-2h-1v1h-5v-1h-3v1h-1v-1h-1v1h-3v-1h-2v1h-2v1h-1v-1h-1v1h-1v-2h-1v1h-2v1h-1v-1h-1v1h-1v-1h-3v3h-1v-3h-3v-1h-1v1h-5v-1h-1v1h-1v-1h-1v1h-3v-1h-1v1h-1v-1h-4v1h-1v-1h-1v1h-1v-1h-1v1h-1v-1h-4v1h-2v-1h-6v1h-6v-1h-1v1h-1v-1h-2v1h-2v-1h-1v1h-1v-1h-1v1h-1v-1h-1v1h-1v1h-1v-1h-1v-1h-1v1h-2v1h-2v-2h-2v1h-2v-1h-1v1h-3v1h-1v-1h-3v-1h-1v-1h-1v1h-1v1h-3v-1h-1v1h-1v-1h-1v1h-1v-1h-1v1h-2v-1h-2v1h-4v-1h-5v-1h-1v1h-4v1h-1v-1h-1v1h-1v-1h-1v1h-3v-1h-2v1h-1v-1h-2v1h-1v-1h-2v2h-1v-2h-2v1h-3v2h-1v-1h-1v-2h-1v1h-1v1h-1v-1h-1v1h-1v-2h-1v1h-1v1h-1v-1h-4v1h-1v-1h-10v1h-1v-1h-2v1h-1v-2h-3v1h-2v-1h-1v1h-1v1h-1v-1h-1v-1h-1v2h-1v-1h-2v-1h-1v1h-3v-1h-2v1h-2v2h-1v-2h-3v2h-1v-3h-1v1h-3v1h-1v-2h-1v1h-1v-1h-1v1h-4v-1h-1v1h-1v1h-1v-1h-6v3h-1v-2h-2v-1h-1v3h-1v-2h-2v-1h-1v5h-1v-5h-1v1h-2v-1h-7v-1h-1v1h-2v-1h-1v1h-4v-1h-2v-1h-1v1h-1v2h-1v-1h-1v1h-1v-2h-1v1h-2v-1h-5v1h-2v-1h-3v1h-1v-1h-1v1h-2v-1h-2v1h-3v-1h-6v1h-2v-1h-1v1h-1v-1h-1v-1h-1v2h-1v-1h-1v1h-2v-1h-2v1h-3v-2h-1v1h-3v2h-1v-1h-3z"/><path d="M321 213h1V221h-1zM369 210h1V222h-1zM547 204h1V231h-1zM613 196h1V226h-1zM668 203h1V237h-1zM767 210h1V218h-1zM820 194h1V239h-1zM1004 199h1V241h-1zM1021 207h1V225h-1zM1074 200h1V228h-1zM1180 200h1V235h-1zM1301 207h1V222h-1zM1367 208h1V223h-1zM377 224h1V261h-1zM478 237h1V252h-1zM506 237h1V252h-1zM519 228h1V263h-1zM735 229h1V262h-1zM755 240h1V252h-1zM913 239h1V252h-1zM1143 236h1V252h-1zM1176 227h1V264h-1zM1200 239h1V255h-1zM1254 236h1V252h-1zM1356 228h1V261h-1zM287 266h1V280h-1zM333 254h1V300h-1zM351 259h1V303h-1zM514 268h1V284h-1zM579 256h1V291h-1zM616 255h1V290h-1zM653 259h1V294h-1zM736 262h1V295h-1zM755 250h1V297h-1zM830 259h1V289h-1zM872 267h1V288h-1zM917 270h1V281h-1zM945 253h1V295h-1zM962 257h1V294h-1zM981 268h1V284h-1zM1053 267h1V290h-1zM1077 265h1V294h-1zM1095 262h1V285h-1zM1130 270h1V282h-1zM1145 253h1V291h-1zM1168 255h1V292h-1zM1184 256h1V289h-1zM1224 264h1V293h-1zM1242 252h1V294h-1zM1287 267h1V290h-1zM1305 264h1V287h-1zM1384 257h1V291h-1zM298 298h1V321h-1zM316 285h1V328h-1zM383 292h1V321h-1zM420 290h1V317h-1zM441 292h1V324h-1zM503 288h1V327h-1zM521 283h1V325h-1zM642 300h1V314h-1zM660 287h1V326h-1zM677 289h1V320h-1zM798 301h1V310h-1zM857 300h1V310h-1zM941 288h1V325h-1zM953 300h1V314h-1zM956 300h1V312h-1zM1011 293h1V316h-1zM1058 293h1V322h-1zM1142 290h1V324h-1zM1160 279h1V325h-1zM1199 294h1V317h-1zM1306 302h1V310h-1zM1397 294h1V323h-1zM324 331h1V341h-1zM357 319h1V357h-1zM504 333h1V339h-1zM519 318h1V349h-1zM572 315h1V352h-1zM683 317h1V353h-1zM746 323h1V348h-1zM764 314h1V351h-1zM816 318h1V361h-1zM834 323h1V354h-1zM872 318h1V346h-1zM1007 319h1V350h-1zM1060 318h1V348h-1zM1104 322h1V355h-1zM1140 324h1V348h-1zM1176 322h1V353h-1zM1236 315h1V352h-1zM1252 325h1V348h-1zM1366 321h1V353h-1zM323 353h1V381h-1zM389 351h1V381h-1zM445 347h1V420h-1zM513 355h1V378h-1zM652 351h1V387h-1zM729 347h1V381h-1zM827 351h1V378h-1zM857 358h1V377h-1zM860 359h1V376h-1zM871 360h1V371h-1zM914 347h1V384h-1zM1091 352h1V382h-1zM1168 355h1V384h-1zM1213 352h1V377h-1zM1317 350h1V383h-1zM1382 349h1V387h-1zM375 379h1V420h-1zM445 391h1V406h-1zM606 382h1V418h-1zM623 372h1V417h-1zM663 376h1V411h-1zM729 382h1V413h-1zM762 372h1V415h-1zM801 382h1V412h-1zM862 382h1V409h-1zM880 370h1V412h-1zM921 380h1V410h-1zM939 385h1V406h-1zM978 377h1V410h-1zM995 372h1V416h-1zM1046 380h1V415h-1zM1105 382h1V412h-1zM1145 381h1V416h-1zM1184 377h1V413h-1zM1221 383h1V415h-1zM1273 390h1V406h-1zM1293 384h1V411h-1zM1311 383h1V421h-1zM1351 377h1V415h-1zM1367 375h1V425h-1zM319 410h1V444h-1zM377 411h1V440h-1zM547 413h1V445h-1zM592 412h1V438h-1zM740 411h1V452h-1zM811 408h1V438h-1zM891 408h1V452h-1zM950 411h1V448h-1zM987 406h1V452h-1zM1140 409h1V443h-1zM1196 408h1V439h-1zM1279 411h1V445h-1zM280 441h1V480h-1zM373 431h1V472h-1zM389 438h1V477h-1zM453 438h1V473h-1zM545 442h1V483h-1zM704 436h1V473h-1zM741 433h1V474h-1zM800 437h1V476h-1zM836 438h1V471h-1zM872 438h1V475h-1zM988 431h1V475h-1zM1031 445h1V473h-1zM1079 439h1V471h-1zM1155 440h1V475h-1zM1221 436h1V473h-1zM1259 443h1V472h-1zM1279 431h1V450h-1zM318 466h1V505h-1zM490 470h1V506h-1zM543 472h1V511h-1zM667 469h1V507h-1zM704 475h1V505h-1zM749 469h1V512h-1zM876 476h1V508h-1zM975 469h1V507h-1zM1011 482h1V490h-1zM1034 472h1V502h-1zM1106 472h1V501h-1zM1161 472h1V503h-1zM1333 470h1V509h-1zM314 497h1V537h-1zM459 505h1V534h-1zM539 503h1V538h-1zM629 513h1V525h-1zM650 503h1V541h-1zM709 498h1V539h-1zM773 507h1V535h-1zM789 494h1V542h-1zM868 504h1V543h-1zM905 507h1V533h-1zM950 504h1V538h-1zM969 505h1V539h-1zM1042 501h1V534h-1zM1092 506h1V534h-1zM1114 493h1V536h-1zM1154 499h1V537h-1zM1193 504h1V541h-1zM1249 499h1V536h-1zM1293 502h1V534h-1zM1311 507h1V537h-1zM1350 500h1V531h-1zM281 537h1V564h-1zM355 528h1V577h-1zM390 530h1V566h-1zM407 537h1V562h-1zM445 533h1V567h-1zM508 528h1V577h-1zM576 528h1V562h-1zM630 537h1V577h-1zM680 528h1V560h-1zM727 530h1V564h-1zM772 532h1V570h-1zM816 526h1V563h-1zM1200 530h1V562h-1zM1274 535h1V574h-1zM1387 533h1V570h-1zM282 551h1V571h-1zM354 552h1V598h-1zM370 557h1V597h-1zM423 567h1V604h-1zM468 558h1V598h-1zM507 552h1V597h-1zM614 559h1V597h-1zM630 552h1V596h-1zM777 567h1V592h-1zM864 566h1V601h-1zM912 563h1V600h-1zM950 566h1V597h-1zM1016 556h1V592h-1zM1088 558h1V597h-1zM1255 565h1V588h-1zM1294 569h1V596h-1zM1382 565h1V601h-1zM320 589h1V628h-1zM380 592h1V624h-1zM397 599h1V623h-1zM539 589h1V628h-1zM588 596h1V623h-1zM688 592h1V628h-1zM753 587h1V625h-1zM791 588h1V658h-1zM940 591h1V628h-1zM1118 601h1V615h-1zM1358 594h1V632h-1zM358 618h1V653h-1zM375 623h1V663h-1zM450 620h1V651h-1zM496 626h1V664h-1zM576 624h1V659h-1zM639 629h1V655h-1zM683 625h1V660h-1zM702 625h1V652h-1zM919 626h1V659h-1zM967 620h1V650h-1zM1030 620h1V659h-1zM1180 620h1V650h-1zM1199 615h1V659h-1zM1236 624h1V655h-1zM1283 625h1V659h-1zM1299 624h1V660h-1zM1359 629h1V654h-1zM1397 618h1V658h-1zM305 653h1V684h-1zM352 651h1V683h-1zM409 648h1V686h-1zM424 648h1V698h-1zM781 653h1V698h-1zM827 650h1V688h-1zM950 651h1V689h-1zM1007 651h1V683h-1zM1096 655h1V687h-1zM1169 669h1V698h-1zM1196 653h1V684h-1zM1244 659h1V688h-1zM1385 664h1V675h-1zM341 685h1V748h-1zM395 680h1V712h-1zM425 674h1V698h-1zM470 681h1V710h-1zM530 688h1V718h-1zM566 690h1V719h-1zM581 691h1V710h-1zM627 683h1V714h-1zM706 689h1V717h-1zM781 674h1V712h-1zM797 683h1V718h-1zM847 678h1V714h-1zM904 678h1V724h-1zM964 689h1V711h-1zM1039 683h1V719h-1zM1056 683h1V710h-1zM1102 687h1V718h-1zM1151 682h1V714h-1zM1169 674h1V719h-1zM1203 694h1V704h-1zM1303 684h1V715h-1zM1363 680h1V713h-1zM282 709h1V749h-1zM440 718h1V756h-1zM588 712h1V750h-1zM679 717h1V742h-1zM801 718h1V746h-1zM910 716h1V749h-1zM930 726h1V736h-1zM1048 726h1V735h-1zM1127 717h1V744h-1zM1275 712h1V750h-1zM309 745h1V776h-1zM346 744h1V784h-1zM395 738h1V777h-1zM495 745h1V782h-1zM517 746h1V775h-1zM533 740h1V785h-1zM600 747h1V779h-1zM672 748h1V778h-1zM708 745h1V774h-1zM770 742h1V781h-1zM954 737h1V776h-1zM1058 746h1V776h-1zM1113 744h1V780h-1zM1142 756h1V766h-1zM1276 743h1V778h-1zM1313 750h1V779h-1zM1358 741h1V779h-1zM280 776h1V808h-1zM317 776h1V811h-1zM382 769h1V808h-1zM503 775h1V809h-1zM519 780h1V805h-1zM714 771h1V805h-1zM814 772h1V809h-1zM959 773h1V807h-1zM1299 777h1V813h-1zM289 807h1V867h-1zM347 803h1V838h-1zM433 809h1V838h-1zM450 806h1V831h-1zM660 805h1V835h-1zM864 803h1V836h-1zM900 807h1V839h-1zM983 807h1V840h-1zM1095 799h1V838h-1zM1140 806h1V838h-1zM1251 805h1V839h-1zM1326 810h1V835h-1zM430 836h1V870h-1zM497 838h1V868h-1zM655 838h1V871h-1zM691 835h1V867h-1zM785 836h1V861h-1zM846 832h1V870h-1zM1206 831h1V868h-1zM440 861h1V899h-1zM882 879h1V886h-1zM938 864h1V899h-1zM1194 864h1V897h-1zM1252 862h1V905h-1zM1269 867h1V900h-1zM1385 866h1V902h-1zM385 895h1V938h-1zM1114 892h1V932h-1zM1176 891h1V931h-1zM1194 896h1V927h-1zM1236 897h1V932h-1z"/></g>
</svg>
</body></html>
